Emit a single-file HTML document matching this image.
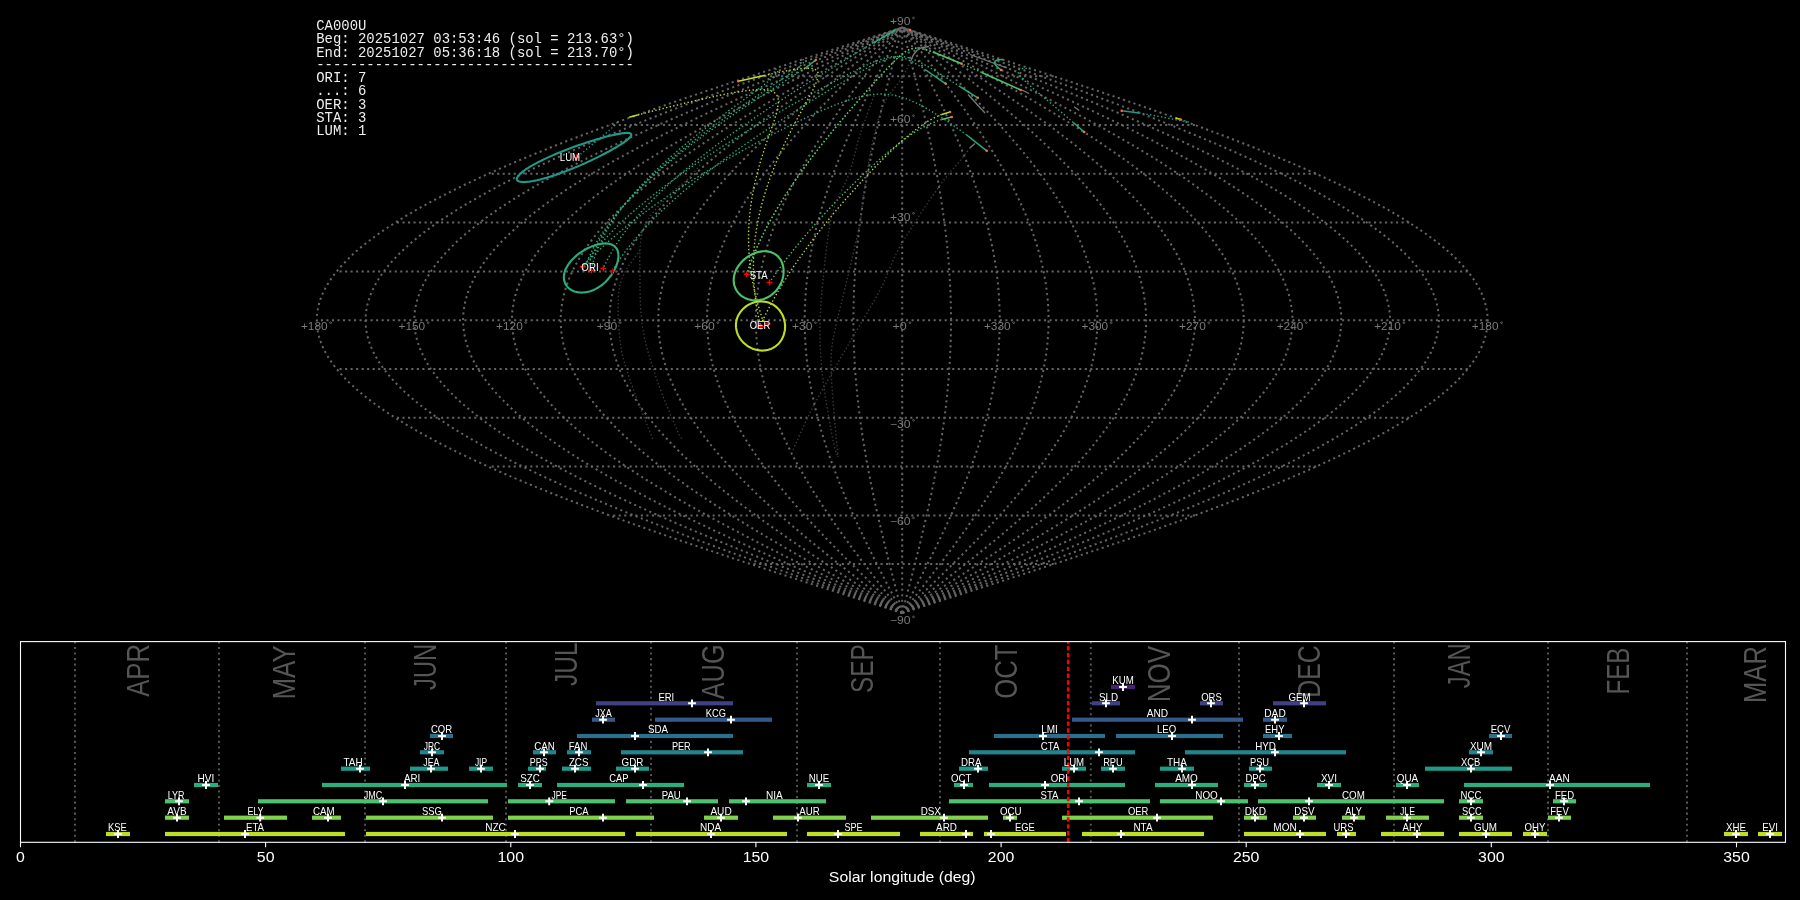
<!DOCTYPE html>
<html lang="en"><head><meta charset="utf-8"><title>CA000U radiants</title>
<style>
html,body{margin:0;padding:0;background:#000;}
body{width:1800px;height:900px;overflow:hidden;font-family:"Liberation Sans",sans-serif;}
svg{display:block;}
text{white-space:pre;}
</style></head><body>
<svg width="1800" height="900" viewBox="0 0 1800 900">
<rect width="1800" height="900" fill="#000"/>
<g style="opacity:0.999">
<g fill="none" stroke="#666666" stroke-width="2.00" stroke-dasharray="2.08 3.44">
<path d="M902.2 612.9 L912.4 609.7 L922.6 606.4 L932.8 603.2 L943 599.9 L953.2 596.7 L963.4 593.4 L973.5 590.2 L983.7 586.9 L993.8 583.7 L1003.9 580.4 L1013.9 577.1 L1023.9 573.9 L1033.9 570.6 L1043.8 567.4 L1053.7 564.1 L1063.6 560.9 L1073.4 557.6 L1083.1 554.4 L1092.8 551.1 L1102.4 547.9 L1112 544.6 L1121.5 541.4 L1131 538.1 L1140.3 534.9 L1149.6 531.6 L1158.8 528.4 L1168 525.1 L1177.1 521.9 L1186 518.6 L1194.9 515.4 L1203.7 512.1 L1212.4 508.8 L1221.1 505.6 L1229.6 502.3 L1238 499.1 L1246.3 495.8 L1254.5 492.6 L1262.6 489.3 L1270.6 486.1 L1278.5 482.8 L1286.3 479.6 L1293.9 476.3 L1301.5 473.1 L1308.9 469.8 L1316.2 466.6 L1323.3 463.3 L1330.4 460.1 L1337.3 456.8 L1344 453.6 L1350.7 450.3 L1357.2 447 L1363.5 443.8 L1369.8 440.5 L1375.8 437.3 L1381.8 434 L1387.6 430.8 L1393.2 427.5 L1398.7 424.3 L1404 421 L1409.2 417.8 L1414.2 414.5 L1419.1 411.3 L1423.8 408 L1428.4 404.8 L1432.8 401.5 L1437 398.3 L1441.1 395 L1445 391.8 L1448.8 388.5 L1452.3 385.2 L1455.8 382 L1459 378.7 L1462.1 375.5 L1465 372.2 L1467.7 369 L1470.3 365.7 L1472.6 362.5 L1474.9 359.2 L1476.9 356 L1478.8 352.7 L1480.4 349.5 L1482 346.2 L1483.3 343 L1484.4 339.7 L1485.4 336.5 L1486.2 333.2 L1486.8 330 L1487.3 326.7 L1487.6 323.5 L1487.7 320.2 L1487.6 316.9 L1487.3 313.7 L1486.8 310.4 L1486.2 307.2 L1485.4 303.9 L1484.4 300.7 L1483.3 297.4 L1482 294.2 L1480.4 290.9 L1478.8 287.7 L1476.9 284.4 L1474.9 281.2 L1472.6 277.9 L1470.3 274.7 L1467.7 271.4 L1465 268.2 L1462.1 264.9 L1459 261.7 L1455.8 258.4 L1452.3 255.1 L1448.8 251.9 L1445 248.6 L1441.1 245.4 L1437 242.1 L1432.8 238.9 L1428.4 235.6 L1423.8 232.4 L1419.1 229.1 L1414.2 225.9 L1409.2 222.6 L1404 219.4 L1398.7 216.1 L1393.2 212.9 L1387.6 209.6 L1381.8 206.4 L1375.8 203.1 L1369.8 199.9 L1363.5 196.6 L1357.2 193.4 L1350.7 190.1 L1344 186.8 L1337.3 183.6 L1330.4 180.3 L1323.3 177.1 L1316.2 173.8 L1308.9 170.6 L1301.5 167.3 L1293.9 164.1 L1286.3 160.8 L1278.5 157.6 L1270.6 154.3 L1262.6 151.1 L1254.5 147.8 L1246.3 144.6 L1238 141.3 L1229.6 138.1 L1221.1 134.8 L1212.4 131.6 L1203.7 128.3 L1194.9 125 L1186 121.8 L1177.1 118.5 L1168 115.3 L1158.8 112 L1149.6 108.8 L1140.3 105.5 L1131 102.3 L1121.5 99 L1112 95.8 L1102.4 92.5 L1092.8 89.3 L1083.1 86 L1073.4 82.8 L1063.6 79.5 L1053.7 76.3 L1043.8 73 L1033.9 69.8 L1023.9 66.5 L1013.9 63.3 L1003.9 60 L993.8 56.7 L983.7 53.5 L973.5 50.2 L963.4 47 L953.2 43.7 L943 40.5 L932.8 37.2 L922.6 34 L912.4 30.7 L902.2 27.5"/>
<path d="M902.2 612.9 L911.6 609.7 L920.9 606.4 L930.3 603.2 L939.6 599.9 L949 596.7 L958.3 593.4 L967.6 590.2 L976.9 586.9 L986.2 583.7 L995.4 580.4 L1004.6 577.1 L1013.8 573.9 L1022.9 570.6 L1032 567.4 L1041.1 564.1 L1050.1 560.9 L1059.1 557.6 L1068 554.4 L1076.9 551.1 L1085.7 547.9 L1094.5 544.6 L1103.2 541.4 L1111.9 538.1 L1120.5 534.9 L1129 531.6 L1137.5 528.4 L1145.8 525.1 L1154.1 521.9 L1162.4 518.6 L1170.5 515.4 L1178.6 512.1 L1186.6 508.8 L1194.5 505.6 L1202.3 502.3 L1210 499.1 L1217.6 495.8 L1225.2 492.6 L1232.6 489.3 L1239.9 486.1 L1247.2 482.8 L1254.3 479.6 L1261.3 476.3 L1268.2 473.1 L1275 469.8 L1281.7 466.6 L1288.2 463.3 L1294.7 460.1 L1301 456.8 L1307.2 453.6 L1313.3 450.3 L1319.3 447 L1325.1 443.8 L1330.8 440.5 L1336.4 437.3 L1341.8 434 L1347.1 430.8 L1352.3 427.5 L1357.3 424.3 L1362.2 421 L1367 417.8 L1371.6 414.5 L1376 411.3 L1380.4 408 L1384.5 404.8 L1388.6 401.5 L1392.5 398.3 L1396.2 395 L1399.8 391.8 L1403.2 388.5 L1406.5 385.2 L1409.6 382 L1412.6 378.7 L1415.4 375.5 L1418.1 372.2 L1420.6 369 L1422.9 365.7 L1425.1 362.5 L1427.1 359.2 L1429 356 L1430.7 352.7 L1432.3 349.5 L1433.6 346.2 L1434.9 343 L1435.9 339.7 L1436.8 336.5 L1437.6 333.2 L1438.1 330 L1438.5 326.7 L1438.8 323.5 L1438.9 320.2 L1438.8 316.9 L1438.5 313.7 L1438.1 310.4 L1437.6 307.2 L1436.8 303.9 L1435.9 300.7 L1434.9 297.4 L1433.6 294.2 L1432.3 290.9 L1430.7 287.7 L1429 284.4 L1427.1 281.2 L1425.1 277.9 L1422.9 274.7 L1420.6 271.4 L1418.1 268.2 L1415.4 264.9 L1412.6 261.7 L1409.6 258.4 L1406.5 255.1 L1403.2 251.9 L1399.8 248.6 L1396.2 245.4 L1392.5 242.1 L1388.6 238.9 L1384.5 235.6 L1380.4 232.4 L1376 229.1 L1371.6 225.9 L1367 222.6 L1362.2 219.4 L1357.3 216.1 L1352.3 212.9 L1347.1 209.6 L1341.8 206.4 L1336.4 203.1 L1330.8 199.9 L1325.1 196.6 L1319.3 193.4 L1313.3 190.1 L1307.2 186.8 L1301 183.6 L1294.7 180.3 L1288.2 177.1 L1281.7 173.8 L1275 170.6 L1268.2 167.3 L1261.3 164.1 L1254.3 160.8 L1247.2 157.6 L1239.9 154.3 L1232.6 151.1 L1225.2 147.8 L1217.6 144.6 L1210 141.3 L1202.3 138.1 L1194.5 134.8 L1186.6 131.6 L1178.6 128.3 L1170.5 125 L1162.4 121.8 L1154.1 118.5 L1145.8 115.3 L1137.5 112 L1129 108.8 L1120.5 105.5 L1111.9 102.3 L1103.2 99 L1094.5 95.8 L1085.7 92.5 L1076.9 89.3 L1068 86 L1059.1 82.8 L1050.1 79.5 L1041.1 76.3 L1032 73 L1022.9 69.8 L1013.8 66.5 L1004.6 63.3 L995.4 60 L986.2 56.7 L976.9 53.5 L967.6 50.2 L958.3 47 L949 43.7 L939.6 40.5 L930.3 37.2 L920.9 34 L911.6 30.7 L902.2 27.5"/>
<path d="M902.2 612.9 L910.7 609.7 L919.2 606.4 L927.7 603.2 L936.2 599.9 L944.7 596.7 L953.2 593.4 L961.7 590.2 L970.1 586.9 L978.5 583.7 L986.9 580.4 L995.3 577.1 L1003.6 573.9 L1011.9 570.6 L1020.2 567.4 L1028.5 564.1 L1036.7 560.9 L1044.8 557.6 L1053 554.4 L1061 551.1 L1069.1 547.9 L1077 544.6 L1085 541.4 L1092.8 538.1 L1100.6 534.9 L1108.4 531.6 L1116.1 528.4 L1123.7 525.1 L1131.2 521.9 L1138.7 518.6 L1146.1 515.4 L1153.5 512.1 L1160.7 508.8 L1167.9 505.6 L1175 502.3 L1182 499.1 L1189 495.8 L1195.8 492.6 L1202.6 489.3 L1209.2 486.1 L1215.8 482.8 L1222.3 479.6 L1228.7 476.3 L1234.9 473.1 L1241.1 469.8 L1247.2 466.6 L1253.1 463.3 L1259 460.1 L1264.8 456.8 L1270.4 453.6 L1275.9 450.3 L1281.4 447 L1286.7 443.8 L1291.8 440.5 L1296.9 437.3 L1301.8 434 L1306.7 430.8 L1311.4 427.5 L1315.9 424.3 L1320.4 421 L1324.7 417.8 L1328.9 414.5 L1333 411.3 L1336.9 408 L1340.7 404.8 L1344.4 401.5 L1347.9 398.3 L1351.3 395 L1354.5 391.8 L1357.7 388.5 L1360.7 385.2 L1363.5 382 L1366.2 378.7 L1368.8 375.5 L1371.2 372.2 L1373.5 369 L1375.6 365.7 L1377.6 362.5 L1379.4 359.2 L1381.1 356 L1382.7 352.7 L1384.1 349.5 L1385.3 346.2 L1386.4 343 L1387.4 339.7 L1388.2 336.5 L1388.9 333.2 L1389.4 330 L1389.8 326.7 L1390 323.5 L1390.1 320.2 L1390 316.9 L1389.8 313.7 L1389.4 310.4 L1388.9 307.2 L1388.2 303.9 L1387.4 300.7 L1386.4 297.4 L1385.3 294.2 L1384.1 290.9 L1382.7 287.7 L1381.1 284.4 L1379.4 281.2 L1377.6 277.9 L1375.6 274.7 L1373.5 271.4 L1371.2 268.2 L1368.8 264.9 L1366.2 261.7 L1363.5 258.4 L1360.7 255.1 L1357.7 251.9 L1354.5 248.6 L1351.3 245.4 L1347.9 242.1 L1344.4 238.9 L1340.7 235.6 L1336.9 232.4 L1333 229.1 L1328.9 225.9 L1324.7 222.6 L1320.4 219.4 L1315.9 216.1 L1311.4 212.9 L1306.7 209.6 L1301.8 206.4 L1296.9 203.1 L1291.8 199.9 L1286.7 196.6 L1281.4 193.4 L1275.9 190.1 L1270.4 186.8 L1264.8 183.6 L1259 180.3 L1253.1 177.1 L1247.2 173.8 L1241.1 170.6 L1234.9 167.3 L1228.7 164.1 L1222.3 160.8 L1215.8 157.6 L1209.2 154.3 L1202.6 151.1 L1195.8 147.8 L1189 144.6 L1182 141.3 L1175 138.1 L1167.9 134.8 L1160.7 131.6 L1153.5 128.3 L1146.1 125 L1138.7 121.8 L1131.2 118.5 L1123.7 115.3 L1116.1 112 L1108.4 108.8 L1100.6 105.5 L1092.8 102.3 L1085 99 L1077 95.8 L1069.1 92.5 L1061 89.3 L1053 86 L1044.8 82.8 L1036.7 79.5 L1028.5 76.3 L1020.2 73 L1011.9 69.8 L1003.6 66.5 L995.3 63.3 L986.9 60 L978.5 56.7 L970.1 53.5 L961.7 50.2 L953.2 47 L944.7 43.7 L936.2 40.5 L927.7 37.2 L919.2 34 L910.7 30.7 L902.2 27.5"/>
<path d="M902.2 612.9 L909.9 609.7 L917.5 606.4 L925.2 603.2 L932.8 599.9 L940.5 596.7 L948.1 593.4 L955.7 590.2 L963.3 586.9 L970.9 583.7 L978.4 580.4 L986 577.1 L993.5 573.9 L1001 570.6 L1008.4 567.4 L1015.8 564.1 L1023.2 560.9 L1030.6 557.6 L1037.9 554.4 L1045.2 551.1 L1052.4 547.9 L1059.6 544.6 L1066.7 541.4 L1073.8 538.1 L1080.8 534.9 L1087.8 531.6 L1094.7 528.4 L1101.5 525.1 L1108.3 521.9 L1115.1 518.6 L1121.7 515.4 L1128.3 512.1 L1134.9 508.8 L1141.3 505.6 L1147.7 502.3 L1154.1 499.1 L1160.3 495.8 L1166.4 492.6 L1172.5 489.3 L1178.5 486.1 L1184.4 482.8 L1190.3 479.6 L1196 476.3 L1201.7 473.1 L1207.2 469.8 L1212.7 466.6 L1218.1 463.3 L1223.3 460.1 L1228.5 456.8 L1233.6 453.6 L1238.6 450.3 L1243.4 447 L1248.2 443.8 L1252.9 440.5 L1257.4 437.3 L1261.9 434 L1266.2 430.8 L1270.4 427.5 L1274.6 424.3 L1278.6 421 L1282.5 417.8 L1286.2 414.5 L1289.9 411.3 L1293.4 408 L1296.8 404.8 L1300.1 401.5 L1303.3 398.3 L1306.4 395 L1309.3 391.8 L1312.1 388.5 L1314.8 385.2 L1317.4 382 L1319.8 378.7 L1322.1 375.5 L1324.3 372.2 L1326.3 369 L1328.2 365.7 L1330 362.5 L1331.7 359.2 L1333.2 356 L1334.6 352.7 L1335.9 349.5 L1337 346.2 L1338 343 L1338.9 339.7 L1339.6 336.5 L1340.2 333.2 L1340.7 330 L1341 326.7 L1341.2 323.5 L1341.3 320.2 L1341.2 316.9 L1341 313.7 L1340.7 310.4 L1340.2 307.2 L1339.6 303.9 L1338.9 300.7 L1338 297.4 L1337 294.2 L1335.9 290.9 L1334.6 287.7 L1333.2 284.4 L1331.7 281.2 L1330 277.9 L1328.2 274.7 L1326.3 271.4 L1324.3 268.2 L1322.1 264.9 L1319.8 261.7 L1317.4 258.4 L1314.8 255.1 L1312.1 251.9 L1309.3 248.6 L1306.4 245.4 L1303.3 242.1 L1300.1 238.9 L1296.8 235.6 L1293.4 232.4 L1289.9 229.1 L1286.2 225.9 L1282.5 222.6 L1278.6 219.4 L1274.6 216.1 L1270.4 212.9 L1266.2 209.6 L1261.9 206.4 L1257.4 203.1 L1252.9 199.9 L1248.2 196.6 L1243.4 193.4 L1238.6 190.1 L1233.6 186.8 L1228.5 183.6 L1223.3 180.3 L1218.1 177.1 L1212.7 173.8 L1207.2 170.6 L1201.7 167.3 L1196 164.1 L1190.3 160.8 L1184.4 157.6 L1178.5 154.3 L1172.5 151.1 L1166.4 147.8 L1160.3 144.6 L1154.1 141.3 L1147.7 138.1 L1141.3 134.8 L1134.9 131.6 L1128.3 128.3 L1121.7 125 L1115.1 121.8 L1108.3 118.5 L1101.5 115.3 L1094.7 112 L1087.8 108.8 L1080.8 105.5 L1073.8 102.3 L1066.7 99 L1059.6 95.8 L1052.4 92.5 L1045.2 89.3 L1037.9 86 L1030.6 82.8 L1023.2 79.5 L1015.8 76.3 L1008.4 73 L1001 69.8 L993.5 66.5 L986 63.3 L978.4 60 L970.9 56.7 L963.3 53.5 L955.7 50.2 L948.1 47 L940.5 43.7 L932.8 40.5 L925.2 37.2 L917.5 34 L909.9 30.7 L902.2 27.5"/>
<path d="M902.2 612.9 L909 609.7 L915.8 606.4 L922.6 603.2 L929.4 599.9 L936.2 596.7 L943 593.4 L949.8 590.2 L956.5 586.9 L963.3 583.7 L970 580.4 L976.7 577.1 L983.3 573.9 L990 570.6 L996.6 567.4 L1003.2 564.1 L1009.8 560.9 L1016.3 557.6 L1022.8 554.4 L1029.3 551.1 L1035.7 547.9 L1042.1 544.6 L1048.4 541.4 L1054.7 538.1 L1060.9 534.9 L1067.1 531.6 L1073.3 528.4 L1079.4 525.1 L1085.4 521.9 L1091.4 518.6 L1097.4 515.4 L1103.2 512.1 L1109 508.8 L1114.8 505.6 L1120.5 502.3 L1126.1 499.1 L1131.6 495.8 L1137.1 492.6 L1142.5 489.3 L1147.8 486.1 L1153.1 482.8 L1158.3 479.6 L1163.4 476.3 L1168.4 473.1 L1173.3 469.8 L1178.2 466.6 L1183 463.3 L1187.6 460.1 L1192.2 456.8 L1196.8 453.6 L1201.2 450.3 L1205.5 447 L1209.8 443.8 L1213.9 440.5 L1218 437.3 L1221.9 434 L1225.8 430.8 L1229.5 427.5 L1233.2 424.3 L1236.8 421 L1240.2 417.8 L1243.6 414.5 L1246.8 411.3 L1250 408 L1253 404.8 L1255.9 401.5 L1258.8 398.3 L1261.5 395 L1264.1 391.8 L1266.6 388.5 L1269 385.2 L1271.2 382 L1273.4 378.7 L1275.4 375.5 L1277.4 372.2 L1279.2 369 L1280.9 365.7 L1282.5 362.5 L1284 359.2 L1285.3 356 L1286.6 352.7 L1287.7 349.5 L1288.7 346.2 L1289.6 343 L1290.4 339.7 L1291 336.5 L1291.5 333.2 L1292 330 L1292.3 326.7 L1292.4 323.5 L1292.5 320.2 L1292.4 316.9 L1292.3 313.7 L1292 310.4 L1291.5 307.2 L1291 303.9 L1290.4 300.7 L1289.6 297.4 L1288.7 294.2 L1287.7 290.9 L1286.6 287.7 L1285.3 284.4 L1284 281.2 L1282.5 277.9 L1280.9 274.7 L1279.2 271.4 L1277.4 268.2 L1275.4 264.9 L1273.4 261.7 L1271.2 258.4 L1269 255.1 L1266.6 251.9 L1264.1 248.6 L1261.5 245.4 L1258.8 242.1 L1255.9 238.9 L1253 235.6 L1250 232.4 L1246.8 229.1 L1243.6 225.9 L1240.2 222.6 L1236.8 219.4 L1233.2 216.1 L1229.5 212.9 L1225.8 209.6 L1221.9 206.4 L1218 203.1 L1213.9 199.9 L1209.8 196.6 L1205.5 193.4 L1201.2 190.1 L1196.8 186.8 L1192.2 183.6 L1187.6 180.3 L1183 177.1 L1178.2 173.8 L1173.3 170.6 L1168.4 167.3 L1163.4 164.1 L1158.3 160.8 L1153.1 157.6 L1147.8 154.3 L1142.5 151.1 L1137.1 147.8 L1131.6 144.6 L1126.1 141.3 L1120.5 138.1 L1114.8 134.8 L1109 131.6 L1103.2 128.3 L1097.4 125 L1091.4 121.8 L1085.4 118.5 L1079.4 115.3 L1073.3 112 L1067.1 108.8 L1060.9 105.5 L1054.7 102.3 L1048.4 99 L1042.1 95.8 L1035.7 92.5 L1029.3 89.3 L1022.8 86 L1016.3 82.8 L1009.8 79.5 L1003.2 76.3 L996.6 73 L990 69.8 L983.3 66.5 L976.7 63.3 L970 60 L963.3 56.7 L956.5 53.5 L949.8 50.2 L943 47 L936.2 43.7 L929.4 40.5 L922.6 37.2 L915.8 34 L909 30.7 L902.2 27.5"/>
<path d="M902.2 612.9 L908.2 609.7 L914.1 606.4 L920.1 603.2 L926 599.9 L932 596.7 L937.9 593.4 L943.8 590.2 L949.7 586.9 L955.6 583.7 L961.5 580.4 L967.4 577.1 L973.2 573.9 L979 570.6 L984.8 567.4 L990.6 564.1 L996.3 560.9 L1002 557.6 L1007.7 554.4 L1013.4 551.1 L1019 547.9 L1024.6 544.6 L1030.1 541.4 L1035.6 538.1 L1041.1 534.9 L1046.5 531.6 L1051.9 528.4 L1057.2 525.1 L1062.5 521.9 L1067.8 518.6 L1073 515.4 L1078.1 512.1 L1083.2 508.8 L1088.2 505.6 L1093.2 502.3 L1098.1 499.1 L1102.9 495.8 L1107.7 492.6 L1112.5 489.3 L1117.1 486.1 L1121.7 482.8 L1126.3 479.6 L1130.7 476.3 L1135.1 473.1 L1139.4 469.8 L1143.7 466.6 L1147.9 463.3 L1152 460.1 L1156 456.8 L1159.9 453.6 L1163.8 450.3 L1167.6 447 L1171.3 443.8 L1174.9 440.5 L1178.5 437.3 L1182 434 L1185.3 430.8 L1188.6 427.5 L1191.8 424.3 L1194.9 421 L1198 417.8 L1200.9 414.5 L1203.7 411.3 L1206.5 408 L1209.1 404.8 L1211.7 401.5 L1214.2 398.3 L1216.6 395 L1218.8 391.8 L1221 388.5 L1223.1 385.2 L1225.1 382 L1227 378.7 L1228.8 375.5 L1230.5 372.2 L1232.1 369 L1233.6 365.7 L1235 362.5 L1236.2 359.2 L1237.4 356 L1238.5 352.7 L1239.5 349.5 L1240.4 346.2 L1241.2 343 L1241.8 339.7 L1242.4 336.5 L1242.9 333.2 L1243.2 330 L1243.5 326.7 L1243.7 323.5 L1243.7 320.2 L1243.7 316.9 L1243.5 313.7 L1243.2 310.4 L1242.9 307.2 L1242.4 303.9 L1241.8 300.7 L1241.2 297.4 L1240.4 294.2 L1239.5 290.9 L1238.5 287.7 L1237.4 284.4 L1236.2 281.2 L1235 277.9 L1233.6 274.7 L1232.1 271.4 L1230.5 268.2 L1228.8 264.9 L1227 261.7 L1225.1 258.4 L1223.1 255.1 L1221 251.9 L1218.8 248.6 L1216.6 245.4 L1214.2 242.1 L1211.7 238.9 L1209.1 235.6 L1206.5 232.4 L1203.7 229.1 L1200.9 225.9 L1198 222.6 L1194.9 219.4 L1191.8 216.1 L1188.6 212.9 L1185.3 209.6 L1182 206.4 L1178.5 203.1 L1174.9 199.9 L1171.3 196.6 L1167.6 193.4 L1163.8 190.1 L1159.9 186.8 L1156 183.6 L1152 180.3 L1147.9 177.1 L1143.7 173.8 L1139.4 170.6 L1135.1 167.3 L1130.7 164.1 L1126.3 160.8 L1121.7 157.6 L1117.1 154.3 L1112.5 151.1 L1107.7 147.8 L1102.9 144.6 L1098.1 141.3 L1093.2 138.1 L1088.2 134.8 L1083.2 131.6 L1078.1 128.3 L1073 125 L1067.8 121.8 L1062.5 118.5 L1057.2 115.3 L1051.9 112 L1046.5 108.8 L1041.1 105.5 L1035.6 102.3 L1030.1 99 L1024.6 95.8 L1019 92.5 L1013.4 89.3 L1007.7 86 L1002 82.8 L996.3 79.5 L990.6 76.3 L984.8 73 L979 69.8 L973.2 66.5 L967.4 63.3 L961.5 60 L955.6 56.7 L949.7 53.5 L943.8 50.2 L937.9 47 L932 43.7 L926 40.5 L920.1 37.2 L914.1 34 L908.2 30.7 L902.2 27.5"/>
<path d="M902.2 612.9 L907.3 609.7 L912.4 606.4 L917.5 603.2 L922.6 599.9 L927.7 596.7 L932.8 593.4 L937.9 590.2 L942.9 586.9 L948 583.7 L953 580.4 L958.1 577.1 L963.1 573.9 L968 570.6 L973 567.4 L978 564.1 L982.9 560.9 L987.8 557.6 L992.7 554.4 L997.5 551.1 L1002.3 547.9 L1007.1 544.6 L1011.9 541.4 L1016.6 538.1 L1021.3 534.9 L1025.9 531.6 L1030.5 528.4 L1035.1 525.1 L1039.6 521.9 L1044.1 518.6 L1048.6 515.4 L1053 512.1 L1057.3 508.8 L1061.6 505.6 L1065.9 502.3 L1070.1 499.1 L1074.3 495.8 L1078.4 492.6 L1082.4 489.3 L1086.4 486.1 L1090.4 482.8 L1094.2 479.6 L1098.1 476.3 L1101.8 473.1 L1105.5 469.8 L1109.2 466.6 L1112.8 463.3 L1116.3 460.1 L1119.7 456.8 L1123.1 453.6 L1126.4 450.3 L1129.7 447 L1132.9 443.8 L1136 440.5 L1139 437.3 L1142 434 L1144.9 430.8 L1147.7 427.5 L1150.4 424.3 L1153.1 421 L1155.7 417.8 L1158.2 414.5 L1160.7 411.3 L1163 408 L1165.3 404.8 L1167.5 401.5 L1169.6 398.3 L1171.7 395 L1173.6 391.8 L1175.5 388.5 L1177.3 385.2 L1179 382 L1180.6 378.7 L1182.1 375.5 L1183.6 372.2 L1185 369 L1186.2 365.7 L1187.4 362.5 L1188.5 359.2 L1189.5 356 L1190.5 352.7 L1191.3 349.5 L1192.1 346.2 L1192.7 343 L1193.3 339.7 L1193.8 336.5 L1194.2 333.2 L1194.5 330 L1194.7 326.7 L1194.9 323.5 L1194.9 320.2 L1194.9 316.9 L1194.7 313.7 L1194.5 310.4 L1194.2 307.2 L1193.8 303.9 L1193.3 300.7 L1192.7 297.4 L1192.1 294.2 L1191.3 290.9 L1190.5 287.7 L1189.5 284.4 L1188.5 281.2 L1187.4 277.9 L1186.2 274.7 L1185 271.4 L1183.6 268.2 L1182.1 264.9 L1180.6 261.7 L1179 258.4 L1177.3 255.1 L1175.5 251.9 L1173.6 248.6 L1171.7 245.4 L1169.6 242.1 L1167.5 238.9 L1165.3 235.6 L1163 232.4 L1160.7 229.1 L1158.2 225.9 L1155.7 222.6 L1153.1 219.4 L1150.4 216.1 L1147.7 212.9 L1144.9 209.6 L1142 206.4 L1139 203.1 L1136 199.9 L1132.9 196.6 L1129.7 193.4 L1126.4 190.1 L1123.1 186.8 L1119.7 183.6 L1116.3 180.3 L1112.8 177.1 L1109.2 173.8 L1105.5 170.6 L1101.8 167.3 L1098.1 164.1 L1094.2 160.8 L1090.4 157.6 L1086.4 154.3 L1082.4 151.1 L1078.4 147.8 L1074.3 144.6 L1070.1 141.3 L1065.9 138.1 L1061.6 134.8 L1057.3 131.6 L1053 128.3 L1048.6 125 L1044.1 121.8 L1039.6 118.5 L1035.1 115.3 L1030.5 112 L1025.9 108.8 L1021.3 105.5 L1016.6 102.3 L1011.9 99 L1007.1 95.8 L1002.3 92.5 L997.5 89.3 L992.7 86 L987.8 82.8 L982.9 79.5 L978 76.3 L973 73 L968 69.8 L963.1 66.5 L958.1 63.3 L953 60 L948 56.7 L942.9 53.5 L937.9 50.2 L932.8 47 L927.7 43.7 L922.6 40.5 L917.5 37.2 L912.4 34 L907.3 30.7 L902.2 27.5"/>
<path d="M902.2 612.9 L906.5 609.7 L910.7 606.4 L915 603.2 L919.2 599.9 L923.5 596.7 L927.7 593.4 L931.9 590.2 L936.1 586.9 L940.4 583.7 L944.6 580.4 L948.7 577.1 L952.9 573.9 L957.1 570.6 L961.2 567.4 L965.3 564.1 L969.4 560.9 L973.5 557.6 L977.6 554.4 L981.6 551.1 L985.6 547.9 L989.6 544.6 L993.6 541.4 L997.5 538.1 L1001.4 534.9 L1005.3 531.6 L1009.1 528.4 L1012.9 525.1 L1016.7 521.9 L1020.5 518.6 L1024.2 515.4 L1027.8 512.1 L1031.5 508.8 L1035.1 505.6 L1038.6 502.3 L1042.1 499.1 L1045.6 495.8 L1049 492.6 L1052.4 489.3 L1055.7 486.1 L1059 482.8 L1062.2 479.6 L1065.4 476.3 L1068.6 473.1 L1071.7 469.8 L1074.7 466.6 L1077.7 463.3 L1080.6 460.1 L1083.5 456.8 L1086.3 453.6 L1089.1 450.3 L1091.8 447 L1094.4 443.8 L1097 440.5 L1099.5 437.3 L1102 434 L1104.4 430.8 L1106.8 427.5 L1109.1 424.3 L1111.3 421 L1113.5 417.8 L1115.6 414.5 L1117.6 411.3 L1119.5 408 L1121.4 404.8 L1123.3 401.5 L1125 398.3 L1126.7 395 L1128.4 391.8 L1129.9 388.5 L1131.4 385.2 L1132.8 382 L1134.2 378.7 L1135.5 375.5 L1136.7 372.2 L1137.8 369 L1138.9 365.7 L1139.9 362.5 L1140.8 359.2 L1141.7 356 L1142.4 352.7 L1143.1 349.5 L1143.8 346.2 L1144.3 343 L1144.8 339.7 L1145.2 336.5 L1145.5 333.2 L1145.8 330 L1146 326.7 L1146.1 323.5 L1146.1 320.2 L1146.1 316.9 L1146 313.7 L1145.8 310.4 L1145.5 307.2 L1145.2 303.9 L1144.8 300.7 L1144.3 297.4 L1143.8 294.2 L1143.1 290.9 L1142.4 287.7 L1141.7 284.4 L1140.8 281.2 L1139.9 277.9 L1138.9 274.7 L1137.8 271.4 L1136.7 268.2 L1135.5 264.9 L1134.2 261.7 L1132.8 258.4 L1131.4 255.1 L1129.9 251.9 L1128.4 248.6 L1126.7 245.4 L1125 242.1 L1123.3 238.9 L1121.4 235.6 L1119.5 232.4 L1117.6 229.1 L1115.6 225.9 L1113.5 222.6 L1111.3 219.4 L1109.1 216.1 L1106.8 212.9 L1104.4 209.6 L1102 206.4 L1099.5 203.1 L1097 199.9 L1094.4 196.6 L1091.8 193.4 L1089.1 190.1 L1086.3 186.8 L1083.5 183.6 L1080.6 180.3 L1077.7 177.1 L1074.7 173.8 L1071.7 170.6 L1068.6 167.3 L1065.4 164.1 L1062.2 160.8 L1059 157.6 L1055.7 154.3 L1052.4 151.1 L1049 147.8 L1045.6 144.6 L1042.1 141.3 L1038.6 138.1 L1035.1 134.8 L1031.5 131.6 L1027.8 128.3 L1024.2 125 L1020.5 121.8 L1016.7 118.5 L1012.9 115.3 L1009.1 112 L1005.3 108.8 L1001.4 105.5 L997.5 102.3 L993.6 99 L989.6 95.8 L985.6 92.5 L981.6 89.3 L977.6 86 L973.5 82.8 L969.4 79.5 L965.3 76.3 L961.2 73 L957.1 69.8 L952.9 66.5 L948.7 63.3 L944.6 60 L940.4 56.7 L936.1 53.5 L931.9 50.2 L927.7 47 L923.5 43.7 L919.2 40.5 L915 37.2 L910.7 34 L906.5 30.7 L902.2 27.5"/>
<path d="M902.2 612.9 L905.6 609.7 L909 606.4 L912.4 603.2 L915.8 599.9 L919.2 596.7 L922.6 593.4 L926 590.2 L929.4 586.9 L932.7 583.7 L936.1 580.4 L939.4 577.1 L942.8 573.9 L946.1 570.6 L949.4 567.4 L952.7 564.1 L956 560.9 L959.3 557.6 L962.5 554.4 L965.7 551.1 L968.9 547.9 L972.1 544.6 L975.3 541.4 L978.5 538.1 L981.6 534.9 L984.7 531.6 L987.7 528.4 L990.8 525.1 L993.8 521.9 L996.8 518.6 L999.8 515.4 L1002.7 512.1 L1005.6 508.8 L1008.5 505.6 L1011.3 502.3 L1014.1 499.1 L1016.9 495.8 L1019.6 492.6 L1022.3 489.3 L1025 486.1 L1027.6 482.8 L1030.2 479.6 L1032.8 476.3 L1035.3 473.1 L1037.8 469.8 L1040.2 466.6 L1042.6 463.3 L1044.9 460.1 L1047.2 456.8 L1049.5 453.6 L1051.7 450.3 L1053.9 447 L1056 443.8 L1058.1 440.5 L1060.1 437.3 L1062.1 434 L1064 430.8 L1065.9 427.5 L1067.7 424.3 L1069.5 421 L1071.2 417.8 L1072.9 414.5 L1074.5 411.3 L1076.1 408 L1077.6 404.8 L1079.1 401.5 L1080.5 398.3 L1081.8 395 L1083.1 391.8 L1084.4 388.5 L1085.6 385.2 L1086.7 382 L1087.8 378.7 L1088.8 375.5 L1089.8 372.2 L1090.7 369 L1091.6 365.7 L1092.3 362.5 L1093.1 359.2 L1093.8 356 L1094.4 352.7 L1094.9 349.5 L1095.5 346.2 L1095.9 343 L1096.3 339.7 L1096.6 336.5 L1096.9 333.2 L1097.1 330 L1097.2 326.7 L1097.3 323.5 L1097.4 320.2 L1097.3 316.9 L1097.2 313.7 L1097.1 310.4 L1096.9 307.2 L1096.6 303.9 L1096.3 300.7 L1095.9 297.4 L1095.5 294.2 L1094.9 290.9 L1094.4 287.7 L1093.8 284.4 L1093.1 281.2 L1092.3 277.9 L1091.6 274.7 L1090.7 271.4 L1089.8 268.2 L1088.8 264.9 L1087.8 261.7 L1086.7 258.4 L1085.6 255.1 L1084.4 251.9 L1083.1 248.6 L1081.8 245.4 L1080.5 242.1 L1079.1 238.9 L1077.6 235.6 L1076.1 232.4 L1074.5 229.1 L1072.9 225.9 L1071.2 222.6 L1069.5 219.4 L1067.7 216.1 L1065.9 212.9 L1064 209.6 L1062.1 206.4 L1060.1 203.1 L1058.1 199.9 L1056 196.6 L1053.9 193.4 L1051.7 190.1 L1049.5 186.8 L1047.2 183.6 L1044.9 180.3 L1042.6 177.1 L1040.2 173.8 L1037.8 170.6 L1035.3 167.3 L1032.8 164.1 L1030.2 160.8 L1027.6 157.6 L1025 154.3 L1022.3 151.1 L1019.6 147.8 L1016.9 144.6 L1014.1 141.3 L1011.3 138.1 L1008.5 134.8 L1005.6 131.6 L1002.7 128.3 L999.8 125 L996.8 121.8 L993.8 118.5 L990.8 115.3 L987.7 112 L984.7 108.8 L981.6 105.5 L978.5 102.3 L975.3 99 L972.1 95.8 L968.9 92.5 L965.7 89.3 L962.5 86 L959.3 82.8 L956 79.5 L952.7 76.3 L949.4 73 L946.1 69.8 L942.8 66.5 L939.4 63.3 L936.1 60 L932.7 56.7 L929.4 53.5 L926 50.2 L922.6 47 L919.2 43.7 L915.8 40.5 L912.4 37.2 L909 34 L905.6 30.7 L902.2 27.5"/>
<path d="M902.2 612.9 L904.8 609.7 L907.3 606.4 L909.9 603.2 L912.4 599.9 L915 596.7 L917.5 593.4 L920 590.2 L922.6 586.9 L925.1 583.7 L927.6 580.4 L930.1 577.1 L932.6 573.9 L935.1 570.6 L937.6 567.4 L940.1 564.1 L942.5 560.9 L945 557.6 L947.4 554.4 L949.9 551.1 L952.3 547.9 L954.7 544.6 L957 541.4 L959.4 538.1 L961.7 534.9 L964.1 531.6 L966.4 528.4 L968.6 525.1 L970.9 521.9 L973.2 518.6 L975.4 515.4 L977.6 512.1 L979.8 508.8 L981.9 505.6 L984 502.3 L986.2 499.1 L988.2 495.8 L990.3 492.6 L992.3 489.3 L994.3 486.1 L996.3 482.8 L998.2 479.6 L1000.1 476.3 L1002 473.1 L1003.9 469.8 L1005.7 466.6 L1007.5 463.3 L1009.2 460.1 L1011 456.8 L1012.7 453.6 L1014.3 450.3 L1015.9 447 L1017.5 443.8 L1019.1 440.5 L1020.6 437.3 L1022.1 434 L1023.5 430.8 L1024.9 427.5 L1026.3 424.3 L1027.7 421 L1029 417.8 L1030.2 414.5 L1031.4 411.3 L1032.6 408 L1033.7 404.8 L1034.8 401.5 L1035.9 398.3 L1036.9 395 L1037.9 391.8 L1038.8 388.5 L1039.7 385.2 L1040.6 382 L1041.4 378.7 L1042.2 375.5 L1042.9 372.2 L1043.6 369 L1044.2 365.7 L1044.8 362.5 L1045.4 359.2 L1045.9 356 L1046.3 352.7 L1046.8 349.5 L1047.1 346.2 L1047.5 343 L1047.8 339.7 L1048 336.5 L1048.2 333.2 L1048.4 330 L1048.5 326.7 L1048.5 323.5 L1048.6 320.2 L1048.5 316.9 L1048.5 313.7 L1048.4 310.4 L1048.2 307.2 L1048 303.9 L1047.8 300.7 L1047.5 297.4 L1047.1 294.2 L1046.8 290.9 L1046.3 287.7 L1045.9 284.4 L1045.4 281.2 L1044.8 277.9 L1044.2 274.7 L1043.6 271.4 L1042.9 268.2 L1042.2 264.9 L1041.4 261.7 L1040.6 258.4 L1039.7 255.1 L1038.8 251.9 L1037.9 248.6 L1036.9 245.4 L1035.9 242.1 L1034.8 238.9 L1033.7 235.6 L1032.6 232.4 L1031.4 229.1 L1030.2 225.9 L1029 222.6 L1027.7 219.4 L1026.3 216.1 L1024.9 212.9 L1023.5 209.6 L1022.1 206.4 L1020.6 203.1 L1019.1 199.9 L1017.5 196.6 L1015.9 193.4 L1014.3 190.1 L1012.7 186.8 L1011 183.6 L1009.2 180.3 L1007.5 177.1 L1005.7 173.8 L1003.9 170.6 L1002 167.3 L1000.1 164.1 L998.2 160.8 L996.3 157.6 L994.3 154.3 L992.3 151.1 L990.3 147.8 L988.2 144.6 L986.2 141.3 L984 138.1 L981.9 134.8 L979.8 131.6 L977.6 128.3 L975.4 125 L973.2 121.8 L970.9 118.5 L968.6 115.3 L966.4 112 L964.1 108.8 L961.7 105.5 L959.4 102.3 L957 99 L954.7 95.8 L952.3 92.5 L949.9 89.3 L947.4 86 L945 82.8 L942.5 79.5 L940.1 76.3 L937.6 73 L935.1 69.8 L932.6 66.5 L930.1 63.3 L927.6 60 L925.1 56.7 L922.6 53.5 L920 50.2 L917.5 47 L915 43.7 L912.4 40.5 L909.9 37.2 L907.3 34 L904.8 30.7 L902.2 27.5"/>
<path d="M902.2 612.9 L903.9 609.7 L905.6 606.4 L907.3 603.2 L909 599.9 L910.7 596.7 L912.4 593.4 L914.1 590.2 L915.8 586.9 L917.5 583.7 L919.1 580.4 L920.8 577.1 L922.5 573.9 L924.1 570.6 L925.8 567.4 L927.5 564.1 L929.1 560.9 L930.7 557.6 L932.4 554.4 L934 551.1 L935.6 547.9 L937.2 544.6 L938.8 541.4 L940.3 538.1 L941.9 534.9 L943.4 531.6 L945 528.4 L946.5 525.1 L948 521.9 L949.5 518.6 L951 515.4 L952.5 512.1 L953.9 508.8 L955.3 505.6 L956.8 502.3 L958.2 499.1 L959.6 495.8 L960.9 492.6 L962.3 489.3 L963.6 486.1 L964.9 482.8 L966.2 479.6 L967.5 476.3 L968.7 473.1 L970 469.8 L971.2 466.6 L972.4 463.3 L973.6 460.1 L974.7 456.8 L975.8 453.6 L976.9 450.3 L978 447 L979.1 443.8 L980.1 440.5 L981.1 437.3 L982.1 434 L983.1 430.8 L984 427.5 L984.9 424.3 L985.8 421 L986.7 417.8 L987.5 414.5 L988.4 411.3 L989.1 408 L989.9 404.8 L990.6 401.5 L991.3 398.3 L992 395 L992.7 391.8 L993.3 388.5 L993.9 385.2 L994.5 382 L995 378.7 L995.5 375.5 L996 372.2 L996.5 369 L996.9 365.7 L997.3 362.5 L997.6 359.2 L998 356 L998.3 352.7 L998.6 349.5 L998.8 346.2 L999 343 L999.2 339.7 L999.4 336.5 L999.5 333.2 L999.6 330 L999.7 326.7 L999.8 323.5 L999.8 320.2 L999.8 316.9 L999.7 313.7 L999.6 310.4 L999.5 307.2 L999.4 303.9 L999.2 300.7 L999 297.4 L998.8 294.2 L998.6 290.9 L998.3 287.7 L998 284.4 L997.6 281.2 L997.3 277.9 L996.9 274.7 L996.5 271.4 L996 268.2 L995.5 264.9 L995 261.7 L994.5 258.4 L993.9 255.1 L993.3 251.9 L992.7 248.6 L992 245.4 L991.3 242.1 L990.6 238.9 L989.9 235.6 L989.1 232.4 L988.4 229.1 L987.5 225.9 L986.7 222.6 L985.8 219.4 L984.9 216.1 L984 212.9 L983.1 209.6 L982.1 206.4 L981.1 203.1 L980.1 199.9 L979.1 196.6 L978 193.4 L976.9 190.1 L975.8 186.8 L974.7 183.6 L973.6 180.3 L972.4 177.1 L971.2 173.8 L970 170.6 L968.7 167.3 L967.5 164.1 L966.2 160.8 L964.9 157.6 L963.6 154.3 L962.3 151.1 L960.9 147.8 L959.6 144.6 L958.2 141.3 L956.8 138.1 L955.3 134.8 L953.9 131.6 L952.5 128.3 L951 125 L949.5 121.8 L948 118.5 L946.5 115.3 L945 112 L943.4 108.8 L941.9 105.5 L940.3 102.3 L938.8 99 L937.2 95.8 L935.6 92.5 L934 89.3 L932.4 86 L930.7 82.8 L929.1 79.5 L927.5 76.3 L925.8 73 L924.1 69.8 L922.5 66.5 L920.8 63.3 L919.1 60 L917.5 56.7 L915.8 53.5 L914.1 50.2 L912.4 47 L910.7 43.7 L909 40.5 L907.3 37.2 L905.6 34 L903.9 30.7 L902.2 27.5"/>
<path d="M902.2 612.9 L903.1 609.7 L903.9 606.4 L904.8 603.2 L905.6 599.9 L906.5 596.7 L907.3 593.4 L908.1 590.2 L909 586.9 L909.8 583.7 L910.7 580.4 L911.5 577.1 L912.3 573.9 L913.2 570.6 L914 567.4 L914.8 564.1 L915.6 560.9 L916.5 557.6 L917.3 554.4 L918.1 551.1 L918.9 547.9 L919.7 544.6 L920.5 541.4 L921.3 538.1 L922 534.9 L922.8 531.6 L923.6 528.4 L924.3 525.1 L925.1 521.9 L925.9 518.6 L926.6 515.4 L927.3 512.1 L928.1 508.8 L928.8 505.6 L929.5 502.3 L930.2 499.1 L930.9 495.8 L931.6 492.6 L932.2 489.3 L932.9 486.1 L933.6 482.8 L934.2 479.6 L934.8 476.3 L935.5 473.1 L936.1 469.8 L936.7 466.6 L937.3 463.3 L937.9 460.1 L938.5 456.8 L939 453.6 L939.6 450.3 L940.1 447 L940.6 443.8 L941.2 440.5 L941.7 437.3 L942.2 434 L942.6 430.8 L943.1 427.5 L943.6 424.3 L944 421 L944.5 417.8 L944.9 414.5 L945.3 411.3 L945.7 408 L946 404.8 L946.4 401.5 L946.8 398.3 L947.1 395 L947.4 391.8 L947.7 388.5 L948 385.2 L948.3 382 L948.6 378.7 L948.9 375.5 L949.1 372.2 L949.3 369 L949.5 365.7 L949.7 362.5 L949.9 359.2 L950.1 356 L950.2 352.7 L950.4 349.5 L950.5 346.2 L950.6 343 L950.7 339.7 L950.8 336.5 L950.9 333.2 L950.9 330 L951 326.7 L951 323.5 L951 320.2 L951 316.9 L951 313.7 L950.9 310.4 L950.9 307.2 L950.8 303.9 L950.7 300.7 L950.6 297.4 L950.5 294.2 L950.4 290.9 L950.2 287.7 L950.1 284.4 L949.9 281.2 L949.7 277.9 L949.5 274.7 L949.3 271.4 L949.1 268.2 L948.9 264.9 L948.6 261.7 L948.3 258.4 L948 255.1 L947.7 251.9 L947.4 248.6 L947.1 245.4 L946.8 242.1 L946.4 238.9 L946 235.6 L945.7 232.4 L945.3 229.1 L944.9 225.9 L944.5 222.6 L944 219.4 L943.6 216.1 L943.1 212.9 L942.6 209.6 L942.2 206.4 L941.7 203.1 L941.2 199.9 L940.6 196.6 L940.1 193.4 L939.6 190.1 L939 186.8 L938.5 183.6 L937.9 180.3 L937.3 177.1 L936.7 173.8 L936.1 170.6 L935.5 167.3 L934.8 164.1 L934.2 160.8 L933.6 157.6 L932.9 154.3 L932.2 151.1 L931.6 147.8 L930.9 144.6 L930.2 141.3 L929.5 138.1 L928.8 134.8 L928.1 131.6 L927.3 128.3 L926.6 125 L925.9 121.8 L925.1 118.5 L924.3 115.3 L923.6 112 L922.8 108.8 L922 105.5 L921.3 102.3 L920.5 99 L919.7 95.8 L918.9 92.5 L918.1 89.3 L917.3 86 L916.5 82.8 L915.6 79.5 L914.8 76.3 L914 73 L913.2 69.8 L912.3 66.5 L911.5 63.3 L910.7 60 L909.8 56.7 L909 53.5 L908.1 50.2 L907.3 47 L906.5 43.7 L905.6 40.5 L904.8 37.2 L903.9 34 L903.1 30.7 L902.2 27.5"/>
<path d="M902.2 612.9 L902.2 609.7 L902.2 606.4 L902.2 603.2 L902.2 599.9 L902.2 596.7 L902.2 593.4 L902.2 590.2 L902.2 586.9 L902.2 583.7 L902.2 580.4 L902.2 577.1 L902.2 573.9 L902.2 570.6 L902.2 567.4 L902.2 564.1 L902.2 560.9 L902.2 557.6 L902.2 554.4 L902.2 551.1 L902.2 547.9 L902.2 544.6 L902.2 541.4 L902.2 538.1 L902.2 534.9 L902.2 531.6 L902.2 528.4 L902.2 525.1 L902.2 521.9 L902.2 518.6 L902.2 515.4 L902.2 512.1 L902.2 508.8 L902.2 505.6 L902.2 502.3 L902.2 499.1 L902.2 495.8 L902.2 492.6 L902.2 489.3 L902.2 486.1 L902.2 482.8 L902.2 479.6 L902.2 476.3 L902.2 473.1 L902.2 469.8 L902.2 466.6 L902.2 463.3 L902.2 460.1 L902.2 456.8 L902.2 453.6 L902.2 450.3 L902.2 447 L902.2 443.8 L902.2 440.5 L902.2 437.3 L902.2 434 L902.2 430.8 L902.2 427.5 L902.2 424.3 L902.2 421 L902.2 417.8 L902.2 414.5 L902.2 411.3 L902.2 408 L902.2 404.8 L902.2 401.5 L902.2 398.3 L902.2 395 L902.2 391.8 L902.2 388.5 L902.2 385.2 L902.2 382 L902.2 378.7 L902.2 375.5 L902.2 372.2 L902.2 369 L902.2 365.7 L902.2 362.5 L902.2 359.2 L902.2 356 L902.2 352.7 L902.2 349.5 L902.2 346.2 L902.2 343 L902.2 339.7 L902.2 336.5 L902.2 333.2 L902.2 330 L902.2 326.7 L902.2 323.5 L902.2 320.2 L902.2 316.9 L902.2 313.7 L902.2 310.4 L902.2 307.2 L902.2 303.9 L902.2 300.7 L902.2 297.4 L902.2 294.2 L902.2 290.9 L902.2 287.7 L902.2 284.4 L902.2 281.2 L902.2 277.9 L902.2 274.7 L902.2 271.4 L902.2 268.2 L902.2 264.9 L902.2 261.7 L902.2 258.4 L902.2 255.1 L902.2 251.9 L902.2 248.6 L902.2 245.4 L902.2 242.1 L902.2 238.9 L902.2 235.6 L902.2 232.4 L902.2 229.1 L902.2 225.9 L902.2 222.6 L902.2 219.4 L902.2 216.1 L902.2 212.9 L902.2 209.6 L902.2 206.4 L902.2 203.1 L902.2 199.9 L902.2 196.6 L902.2 193.4 L902.2 190.1 L902.2 186.8 L902.2 183.6 L902.2 180.3 L902.2 177.1 L902.2 173.8 L902.2 170.6 L902.2 167.3 L902.2 164.1 L902.2 160.8 L902.2 157.6 L902.2 154.3 L902.2 151.1 L902.2 147.8 L902.2 144.6 L902.2 141.3 L902.2 138.1 L902.2 134.8 L902.2 131.6 L902.2 128.3 L902.2 125 L902.2 121.8 L902.2 118.5 L902.2 115.3 L902.2 112 L902.2 108.8 L902.2 105.5 L902.2 102.3 L902.2 99 L902.2 95.8 L902.2 92.5 L902.2 89.3 L902.2 86 L902.2 82.8 L902.2 79.5 L902.2 76.3 L902.2 73 L902.2 69.8 L902.2 66.5 L902.2 63.3 L902.2 60 L902.2 56.7 L902.2 53.5 L902.2 50.2 L902.2 47 L902.2 43.7 L902.2 40.5 L902.2 37.2 L902.2 34 L902.2 30.7 L902.2 27.5"/>
<path d="M902.2 612.9 L901.3 609.7 L900.5 606.4 L899.6 603.2 L898.8 599.9 L897.9 596.7 L897.1 593.4 L896.3 590.2 L895.4 586.9 L894.6 583.7 L893.7 580.4 L892.9 577.1 L892.1 573.9 L891.2 570.6 L890.4 567.4 L889.6 564.1 L888.8 560.9 L887.9 557.6 L887.1 554.4 L886.3 551.1 L885.5 547.9 L884.7 544.6 L883.9 541.4 L883.1 538.1 L882.4 534.9 L881.6 531.6 L880.8 528.4 L880.1 525.1 L879.3 521.9 L878.5 518.6 L877.8 515.4 L877.1 512.1 L876.3 508.8 L875.6 505.6 L874.9 502.3 L874.2 499.1 L873.5 495.8 L872.8 492.6 L872.2 489.3 L871.5 486.1 L870.8 482.8 L870.2 479.6 L869.6 476.3 L868.9 473.1 L868.3 469.8 L867.7 466.6 L867.1 463.3 L866.5 460.1 L865.9 456.8 L865.4 453.6 L864.8 450.3 L864.3 447 L863.8 443.8 L863.2 440.5 L862.7 437.3 L862.2 434 L861.8 430.8 L861.3 427.5 L860.8 424.3 L860.4 421 L859.9 417.8 L859.5 414.5 L859.1 411.3 L858.7 408 L858.4 404.8 L858 401.5 L857.6 398.3 L857.3 395 L857 391.8 L856.7 388.5 L856.4 385.2 L856.1 382 L855.8 378.7 L855.5 375.5 L855.3 372.2 L855.1 369 L854.9 365.7 L854.7 362.5 L854.5 359.2 L854.3 356 L854.2 352.7 L854 349.5 L853.9 346.2 L853.8 343 L853.7 339.7 L853.6 336.5 L853.5 333.2 L853.5 330 L853.4 326.7 L853.4 323.5 L853.4 320.2 L853.4 316.9 L853.4 313.7 L853.5 310.4 L853.5 307.2 L853.6 303.9 L853.7 300.7 L853.8 297.4 L853.9 294.2 L854 290.9 L854.2 287.7 L854.3 284.4 L854.5 281.2 L854.7 277.9 L854.9 274.7 L855.1 271.4 L855.3 268.2 L855.5 264.9 L855.8 261.7 L856.1 258.4 L856.4 255.1 L856.7 251.9 L857 248.6 L857.3 245.4 L857.6 242.1 L858 238.9 L858.4 235.6 L858.7 232.4 L859.1 229.1 L859.5 225.9 L859.9 222.6 L860.4 219.4 L860.8 216.1 L861.3 212.9 L861.8 209.6 L862.2 206.4 L862.7 203.1 L863.2 199.9 L863.8 196.6 L864.3 193.4 L864.8 190.1 L865.4 186.8 L865.9 183.6 L866.5 180.3 L867.1 177.1 L867.7 173.8 L868.3 170.6 L868.9 167.3 L869.6 164.1 L870.2 160.8 L870.8 157.6 L871.5 154.3 L872.2 151.1 L872.8 147.8 L873.5 144.6 L874.2 141.3 L874.9 138.1 L875.6 134.8 L876.3 131.6 L877.1 128.3 L877.8 125 L878.5 121.8 L879.3 118.5 L880.1 115.3 L880.8 112 L881.6 108.8 L882.4 105.5 L883.1 102.3 L883.9 99 L884.7 95.8 L885.5 92.5 L886.3 89.3 L887.1 86 L887.9 82.8 L888.8 79.5 L889.6 76.3 L890.4 73 L891.2 69.8 L892.1 66.5 L892.9 63.3 L893.7 60 L894.6 56.7 L895.4 53.5 L896.3 50.2 L897.1 47 L897.9 43.7 L898.8 40.5 L899.6 37.2 L900.5 34 L901.3 30.7 L902.2 27.5"/>
<path d="M902.2 612.9 L900.5 609.7 L898.8 606.4 L897.1 603.2 L895.4 599.9 L893.7 596.7 L892 593.4 L890.3 590.2 L888.6 586.9 L886.9 583.7 L885.3 580.4 L883.6 577.1 L881.9 573.9 L880.3 570.6 L878.6 567.4 L876.9 564.1 L875.3 560.9 L873.7 557.6 L872 554.4 L870.4 551.1 L868.8 547.9 L867.2 544.6 L865.6 541.4 L864.1 538.1 L862.5 534.9 L861 531.6 L859.4 528.4 L857.9 525.1 L856.4 521.9 L854.9 518.6 L853.4 515.4 L851.9 512.1 L850.5 508.8 L849.1 505.6 L847.6 502.3 L846.2 499.1 L844.8 495.8 L843.5 492.6 L842.1 489.3 L840.8 486.1 L839.5 482.8 L838.2 479.6 L836.9 476.3 L835.7 473.1 L834.4 469.8 L833.2 466.6 L832 463.3 L830.8 460.1 L829.7 456.8 L828.6 453.6 L827.5 450.3 L826.4 447 L825.3 443.8 L824.3 440.5 L823.3 437.3 L822.3 434 L821.3 430.8 L820.4 427.5 L819.5 424.3 L818.6 421 L817.7 417.8 L816.9 414.5 L816 411.3 L815.3 408 L814.5 404.8 L813.8 401.5 L813.1 398.3 L812.4 395 L811.7 391.8 L811.1 388.5 L810.5 385.2 L809.9 382 L809.4 378.7 L808.9 375.5 L808.4 372.2 L807.9 369 L807.5 365.7 L807.1 362.5 L806.8 359.2 L806.4 356 L806.1 352.7 L805.8 349.5 L805.6 346.2 L805.4 343 L805.2 339.7 L805 336.5 L804.9 333.2 L804.8 330 L804.7 326.7 L804.6 323.5 L804.6 320.2 L804.6 316.9 L804.7 313.7 L804.8 310.4 L804.9 307.2 L805 303.9 L805.2 300.7 L805.4 297.4 L805.6 294.2 L805.8 290.9 L806.1 287.7 L806.4 284.4 L806.8 281.2 L807.1 277.9 L807.5 274.7 L807.9 271.4 L808.4 268.2 L808.9 264.9 L809.4 261.7 L809.9 258.4 L810.5 255.1 L811.1 251.9 L811.7 248.6 L812.4 245.4 L813.1 242.1 L813.8 238.9 L814.5 235.6 L815.3 232.4 L816 229.1 L816.9 225.9 L817.7 222.6 L818.6 219.4 L819.5 216.1 L820.4 212.9 L821.3 209.6 L822.3 206.4 L823.3 203.1 L824.3 199.9 L825.3 196.6 L826.4 193.4 L827.5 190.1 L828.6 186.8 L829.7 183.6 L830.8 180.3 L832 177.1 L833.2 173.8 L834.4 170.6 L835.7 167.3 L836.9 164.1 L838.2 160.8 L839.5 157.6 L840.8 154.3 L842.1 151.1 L843.5 147.8 L844.8 144.6 L846.2 141.3 L847.6 138.1 L849.1 134.8 L850.5 131.6 L851.9 128.3 L853.4 125 L854.9 121.8 L856.4 118.5 L857.9 115.3 L859.4 112 L861 108.8 L862.5 105.5 L864.1 102.3 L865.6 99 L867.2 95.8 L868.8 92.5 L870.4 89.3 L872 86 L873.7 82.8 L875.3 79.5 L876.9 76.3 L878.6 73 L880.3 69.8 L881.9 66.5 L883.6 63.3 L885.3 60 L886.9 56.7 L888.6 53.5 L890.3 50.2 L892 47 L893.7 43.7 L895.4 40.5 L897.1 37.2 L898.8 34 L900.5 30.7 L902.2 27.5"/>
<path d="M902.2 612.9 L899.6 609.7 L897.1 606.4 L894.5 603.2 L892 599.9 L889.4 596.7 L886.9 593.4 L884.4 590.2 L881.8 586.9 L879.3 583.7 L876.8 580.4 L874.3 577.1 L871.8 573.9 L869.3 570.6 L866.8 567.4 L864.3 564.1 L861.9 560.9 L859.4 557.6 L857 554.4 L854.5 551.1 L852.1 547.9 L849.7 544.6 L847.4 541.4 L845 538.1 L842.7 534.9 L840.3 531.6 L838 528.4 L835.8 525.1 L833.5 521.9 L831.2 518.6 L829 515.4 L826.8 512.1 L824.6 508.8 L822.5 505.6 L820.4 502.3 L818.2 499.1 L816.2 495.8 L814.1 492.6 L812.1 489.3 L810.1 486.1 L808.1 482.8 L806.2 479.6 L804.3 476.3 L802.4 473.1 L800.5 469.8 L798.7 466.6 L796.9 463.3 L795.2 460.1 L793.4 456.8 L791.7 453.6 L790.1 450.3 L788.5 447 L786.9 443.8 L785.3 440.5 L783.8 437.3 L782.3 434 L780.9 430.8 L779.5 427.5 L778.1 424.3 L776.7 421 L775.4 417.8 L774.2 414.5 L773 411.3 L771.8 408 L770.7 404.8 L769.6 401.5 L768.5 398.3 L767.5 395 L766.5 391.8 L765.6 388.5 L764.7 385.2 L763.8 382 L763 378.7 L762.2 375.5 L761.5 372.2 L760.8 369 L760.2 365.7 L759.6 362.5 L759 359.2 L758.5 356 L758.1 352.7 L757.6 349.5 L757.3 346.2 L756.9 343 L756.6 339.7 L756.4 336.5 L756.2 333.2 L756 330 L755.9 326.7 L755.9 323.5 L755.8 320.2 L755.9 316.9 L755.9 313.7 L756 310.4 L756.2 307.2 L756.4 303.9 L756.6 300.7 L756.9 297.4 L757.3 294.2 L757.6 290.9 L758.1 287.7 L758.5 284.4 L759 281.2 L759.6 277.9 L760.2 274.7 L760.8 271.4 L761.5 268.2 L762.2 264.9 L763 261.7 L763.8 258.4 L764.7 255.1 L765.6 251.9 L766.5 248.6 L767.5 245.4 L768.5 242.1 L769.6 238.9 L770.7 235.6 L771.8 232.4 L773 229.1 L774.2 225.9 L775.4 222.6 L776.7 219.4 L778.1 216.1 L779.5 212.9 L780.9 209.6 L782.3 206.4 L783.8 203.1 L785.3 199.9 L786.9 196.6 L788.5 193.4 L790.1 190.1 L791.7 186.8 L793.4 183.6 L795.2 180.3 L796.9 177.1 L798.7 173.8 L800.5 170.6 L802.4 167.3 L804.3 164.1 L806.2 160.8 L808.1 157.6 L810.1 154.3 L812.1 151.1 L814.1 147.8 L816.2 144.6 L818.2 141.3 L820.4 138.1 L822.5 134.8 L824.6 131.6 L826.8 128.3 L829 125 L831.2 121.8 L833.5 118.5 L835.8 115.3 L838 112 L840.3 108.8 L842.7 105.5 L845 102.3 L847.4 99 L849.7 95.8 L852.1 92.5 L854.5 89.3 L857 86 L859.4 82.8 L861.9 79.5 L864.3 76.3 L866.8 73 L869.3 69.8 L871.8 66.5 L874.3 63.3 L876.8 60 L879.3 56.7 L881.8 53.5 L884.4 50.2 L886.9 47 L889.4 43.7 L892 40.5 L894.5 37.2 L897.1 34 L899.6 30.7 L902.2 27.5"/>
<path d="M902.2 612.9 L898.8 609.7 L895.4 606.4 L892 603.2 L888.6 599.9 L885.2 596.7 L881.8 593.4 L878.4 590.2 L875 586.9 L871.7 583.7 L868.3 580.4 L865 577.1 L861.6 573.9 L858.3 570.6 L855 567.4 L851.7 564.1 L848.4 560.9 L845.1 557.6 L841.9 554.4 L838.7 551.1 L835.5 547.9 L832.3 544.6 L829.1 541.4 L825.9 538.1 L822.8 534.9 L819.7 531.6 L816.7 528.4 L813.6 525.1 L810.6 521.9 L807.6 518.6 L804.6 515.4 L801.7 512.1 L798.8 508.8 L795.9 505.6 L793.1 502.3 L790.3 499.1 L787.5 495.8 L784.8 492.6 L782.1 489.3 L779.4 486.1 L776.8 482.8 L774.2 479.6 L771.6 476.3 L769.1 473.1 L766.6 469.8 L764.2 466.6 L761.8 463.3 L759.5 460.1 L757.2 456.8 L754.9 453.6 L752.7 450.3 L750.5 447 L748.4 443.8 L746.3 440.5 L744.3 437.3 L742.3 434 L740.4 430.8 L738.5 427.5 L736.7 424.3 L734.9 421 L733.2 417.8 L731.5 414.5 L729.9 411.3 L728.3 408 L726.8 404.8 L725.3 401.5 L723.9 398.3 L722.6 395 L721.3 391.8 L720 388.5 L718.8 385.2 L717.7 382 L716.6 378.7 L715.6 375.5 L714.6 372.2 L713.7 369 L712.8 365.7 L712.1 362.5 L711.3 359.2 L710.6 356 L710 352.7 L709.5 349.5 L708.9 346.2 L708.5 343 L708.1 339.7 L707.8 336.5 L707.5 333.2 L707.3 330 L707.2 326.7 L707.1 323.5 L707.1 320.2 L707.1 316.9 L707.2 313.7 L707.3 310.4 L707.5 307.2 L707.8 303.9 L708.1 300.7 L708.5 297.4 L708.9 294.2 L709.5 290.9 L710 287.7 L710.6 284.4 L711.3 281.2 L712.1 277.9 L712.8 274.7 L713.7 271.4 L714.6 268.2 L715.6 264.9 L716.6 261.7 L717.7 258.4 L718.8 255.1 L720 251.9 L721.3 248.6 L722.6 245.4 L723.9 242.1 L725.3 238.9 L726.8 235.6 L728.3 232.4 L729.9 229.1 L731.5 225.9 L733.2 222.6 L734.9 219.4 L736.7 216.1 L738.5 212.9 L740.4 209.6 L742.3 206.4 L744.3 203.1 L746.3 199.9 L748.4 196.6 L750.5 193.4 L752.7 190.1 L754.9 186.8 L757.2 183.6 L759.5 180.3 L761.8 177.1 L764.2 173.8 L766.6 170.6 L769.1 167.3 L771.6 164.1 L774.2 160.8 L776.8 157.6 L779.4 154.3 L782.1 151.1 L784.8 147.8 L787.5 144.6 L790.3 141.3 L793.1 138.1 L795.9 134.8 L798.8 131.6 L801.7 128.3 L804.6 125 L807.6 121.8 L810.6 118.5 L813.6 115.3 L816.7 112 L819.7 108.8 L822.8 105.5 L825.9 102.3 L829.1 99 L832.3 95.8 L835.5 92.5 L838.7 89.3 L841.9 86 L845.1 82.8 L848.4 79.5 L851.7 76.3 L855 73 L858.3 69.8 L861.6 66.5 L865 63.3 L868.3 60 L871.7 56.7 L875 53.5 L878.4 50.2 L881.8 47 L885.2 43.7 L888.6 40.5 L892 37.2 L895.4 34 L898.8 30.7 L902.2 27.5"/>
<path d="M902.2 612.9 L897.9 609.7 L893.7 606.4 L889.4 603.2 L885.2 599.9 L880.9 596.7 L876.7 593.4 L872.5 590.2 L868.3 586.9 L864 583.7 L859.8 580.4 L855.7 577.1 L851.5 573.9 L847.3 570.6 L843.2 567.4 L839.1 564.1 L835 560.9 L830.9 557.6 L826.8 554.4 L822.8 551.1 L818.8 547.9 L814.8 544.6 L810.8 541.4 L806.9 538.1 L803 534.9 L799.1 531.6 L795.3 528.4 L791.5 525.1 L787.7 521.9 L783.9 518.6 L780.2 515.4 L776.6 512.1 L772.9 508.8 L769.3 505.6 L765.8 502.3 L762.3 499.1 L758.8 495.8 L755.4 492.6 L752 489.3 L748.7 486.1 L745.4 482.8 L742.2 479.6 L739 476.3 L735.8 473.1 L732.7 469.8 L729.7 466.6 L726.7 463.3 L723.8 460.1 L720.9 456.8 L718.1 453.6 L715.3 450.3 L712.6 447 L710 443.8 L707.4 440.5 L704.9 437.3 L702.4 434 L700 430.8 L697.6 427.5 L695.3 424.3 L693.1 421 L690.9 417.8 L688.8 414.5 L686.8 411.3 L684.9 408 L683 404.8 L681.1 401.5 L679.4 398.3 L677.7 395 L676 391.8 L674.5 388.5 L673 385.2 L671.6 382 L670.2 378.7 L668.9 375.5 L667.7 372.2 L666.6 369 L665.5 365.7 L664.5 362.5 L663.6 359.2 L662.7 356 L662 352.7 L661.3 349.5 L660.6 346.2 L660.1 343 L659.6 339.7 L659.2 336.5 L658.9 333.2 L658.6 330 L658.4 326.7 L658.3 323.5 L658.3 320.2 L658.3 316.9 L658.4 313.7 L658.6 310.4 L658.9 307.2 L659.2 303.9 L659.6 300.7 L660.1 297.4 L660.6 294.2 L661.3 290.9 L662 287.7 L662.7 284.4 L663.6 281.2 L664.5 277.9 L665.5 274.7 L666.6 271.4 L667.7 268.2 L668.9 264.9 L670.2 261.7 L671.6 258.4 L673 255.1 L674.5 251.9 L676 248.6 L677.7 245.4 L679.4 242.1 L681.1 238.9 L683 235.6 L684.9 232.4 L686.8 229.1 L688.8 225.9 L690.9 222.6 L693.1 219.4 L695.3 216.1 L697.6 212.9 L700 209.6 L702.4 206.4 L704.9 203.1 L707.4 199.9 L710 196.6 L712.6 193.4 L715.3 190.1 L718.1 186.8 L720.9 183.6 L723.8 180.3 L726.7 177.1 L729.7 173.8 L732.7 170.6 L735.8 167.3 L739 164.1 L742.2 160.8 L745.4 157.6 L748.7 154.3 L752 151.1 L755.4 147.8 L758.8 144.6 L762.3 141.3 L765.8 138.1 L769.3 134.8 L772.9 131.6 L776.6 128.3 L780.2 125 L783.9 121.8 L787.7 118.5 L791.5 115.3 L795.3 112 L799.1 108.8 L803 105.5 L806.9 102.3 L810.8 99 L814.8 95.8 L818.8 92.5 L822.8 89.3 L826.8 86 L830.9 82.8 L835 79.5 L839.1 76.3 L843.2 73 L847.3 69.8 L851.5 66.5 L855.7 63.3 L859.8 60 L864 56.7 L868.3 53.5 L872.5 50.2 L876.7 47 L880.9 43.7 L885.2 40.5 L889.4 37.2 L893.7 34 L897.9 30.7 L902.2 27.5"/>
<path d="M902.2 612.9 L897.1 609.7 L892 606.4 L886.9 603.2 L881.8 599.9 L876.7 596.7 L871.6 593.4 L866.5 590.2 L861.5 586.9 L856.4 583.7 L851.4 580.4 L846.3 577.1 L841.3 573.9 L836.4 570.6 L831.4 567.4 L826.4 564.1 L821.5 560.9 L816.6 557.6 L811.7 554.4 L806.9 551.1 L802.1 547.9 L797.3 544.6 L792.5 541.4 L787.8 538.1 L783.1 534.9 L778.5 531.6 L773.9 528.4 L769.3 525.1 L764.8 521.9 L760.3 518.6 L755.8 515.4 L751.4 512.1 L747.1 508.8 L742.8 505.6 L738.5 502.3 L734.3 499.1 L730.1 495.8 L726 492.6 L722 489.3 L718 486.1 L714 482.8 L710.2 479.6 L706.3 476.3 L702.6 473.1 L698.9 469.8 L695.2 466.6 L691.6 463.3 L688.1 460.1 L684.7 456.8 L681.3 453.6 L678 450.3 L674.7 447 L671.5 443.8 L668.4 440.5 L665.4 437.3 L662.4 434 L659.5 430.8 L656.7 427.5 L654 424.3 L651.3 421 L648.7 417.8 L646.2 414.5 L643.7 411.3 L641.4 408 L639.1 404.8 L636.9 401.5 L634.8 398.3 L632.7 395 L630.8 391.8 L628.9 388.5 L627.1 385.2 L625.4 382 L623.8 378.7 L622.3 375.5 L620.8 372.2 L619.4 369 L618.2 365.7 L617 362.5 L615.9 359.2 L614.9 356 L613.9 352.7 L613.1 349.5 L612.3 346.2 L611.7 343 L611.1 339.7 L610.6 336.5 L610.2 333.2 L609.9 330 L609.7 326.7 L609.5 323.5 L609.5 320.2 L609.5 316.9 L609.7 313.7 L609.9 310.4 L610.2 307.2 L610.6 303.9 L611.1 300.7 L611.7 297.4 L612.3 294.2 L613.1 290.9 L613.9 287.7 L614.9 284.4 L615.9 281.2 L617 277.9 L618.2 274.7 L619.4 271.4 L620.8 268.2 L622.3 264.9 L623.8 261.7 L625.4 258.4 L627.1 255.1 L628.9 251.9 L630.8 248.6 L632.7 245.4 L634.8 242.1 L636.9 238.9 L639.1 235.6 L641.4 232.4 L643.7 229.1 L646.2 225.9 L648.7 222.6 L651.3 219.4 L654 216.1 L656.7 212.9 L659.5 209.6 L662.4 206.4 L665.4 203.1 L668.4 199.9 L671.5 196.6 L674.7 193.4 L678 190.1 L681.3 186.8 L684.7 183.6 L688.1 180.3 L691.6 177.1 L695.2 173.8 L698.9 170.6 L702.6 167.3 L706.3 164.1 L710.2 160.8 L714 157.6 L718 154.3 L722 151.1 L726 147.8 L730.1 144.6 L734.3 141.3 L738.5 138.1 L742.8 134.8 L747.1 131.6 L751.4 128.3 L755.8 125 L760.3 121.8 L764.8 118.5 L769.3 115.3 L773.9 112 L778.5 108.8 L783.1 105.5 L787.8 102.3 L792.5 99 L797.3 95.8 L802.1 92.5 L806.9 89.3 L811.7 86 L816.6 82.8 L821.5 79.5 L826.4 76.3 L831.4 73 L836.4 69.8 L841.3 66.5 L846.3 63.3 L851.4 60 L856.4 56.7 L861.5 53.5 L866.5 50.2 L871.6 47 L876.7 43.7 L881.8 40.5 L886.9 37.2 L892 34 L897.1 30.7 L902.2 27.5"/>
<path d="M902.2 612.9 L896.2 609.7 L890.3 606.4 L884.3 603.2 L878.4 599.9 L872.4 596.7 L866.5 593.4 L860.6 590.2 L854.7 586.9 L848.8 583.7 L842.9 580.4 L837 577.1 L831.2 573.9 L825.4 570.6 L819.6 567.4 L813.8 564.1 L808.1 560.9 L802.4 557.6 L796.7 554.4 L791 551.1 L785.4 547.9 L779.8 544.6 L774.3 541.4 L768.8 538.1 L763.3 534.9 L757.9 531.6 L752.5 528.4 L747.2 525.1 L741.9 521.9 L736.6 518.6 L731.4 515.4 L726.3 512.1 L721.2 508.8 L716.2 505.6 L711.2 502.3 L706.3 499.1 L701.5 495.8 L696.7 492.6 L691.9 489.3 L687.3 486.1 L682.7 482.8 L678.1 479.6 L673.7 476.3 L669.3 473.1 L665 469.8 L660.7 466.6 L656.5 463.3 L652.4 460.1 L648.4 456.8 L644.5 453.6 L640.6 450.3 L636.8 447 L633.1 443.8 L629.5 440.5 L625.9 437.3 L622.4 434 L619.1 430.8 L615.8 427.5 L612.6 424.3 L609.5 421 L606.4 417.8 L603.5 414.5 L600.7 411.3 L597.9 408 L595.3 404.8 L592.7 401.5 L590.2 398.3 L587.8 395 L585.6 391.8 L583.4 388.5 L581.3 385.2 L579.3 382 L577.4 378.7 L575.6 375.5 L573.9 372.2 L572.3 369 L570.8 365.7 L569.4 362.5 L568.2 359.2 L567 356 L565.9 352.7 L564.9 349.5 L564 346.2 L563.2 343 L562.6 339.7 L562 336.5 L561.5 333.2 L561.2 330 L560.9 326.7 L560.7 323.5 L560.7 320.2 L560.7 316.9 L560.9 313.7 L561.2 310.4 L561.5 307.2 L562 303.9 L562.6 300.7 L563.2 297.4 L564 294.2 L564.9 290.9 L565.9 287.7 L567 284.4 L568.2 281.2 L569.4 277.9 L570.8 274.7 L572.3 271.4 L573.9 268.2 L575.6 264.9 L577.4 261.7 L579.3 258.4 L581.3 255.1 L583.4 251.9 L585.6 248.6 L587.8 245.4 L590.2 242.1 L592.7 238.9 L595.3 235.6 L597.9 232.4 L600.7 229.1 L603.5 225.9 L606.4 222.6 L609.5 219.4 L612.6 216.1 L615.8 212.9 L619.1 209.6 L622.4 206.4 L625.9 203.1 L629.5 199.9 L633.1 196.6 L636.8 193.4 L640.6 190.1 L644.5 186.8 L648.4 183.6 L652.4 180.3 L656.5 177.1 L660.7 173.8 L665 170.6 L669.3 167.3 L673.7 164.1 L678.1 160.8 L682.7 157.6 L687.3 154.3 L691.9 151.1 L696.7 147.8 L701.5 144.6 L706.3 141.3 L711.2 138.1 L716.2 134.8 L721.2 131.6 L726.3 128.3 L731.4 125 L736.6 121.8 L741.9 118.5 L747.2 115.3 L752.5 112 L757.9 108.8 L763.3 105.5 L768.8 102.3 L774.3 99 L779.8 95.8 L785.4 92.5 L791 89.3 L796.7 86 L802.4 82.8 L808.1 79.5 L813.8 76.3 L819.6 73 L825.4 69.8 L831.2 66.5 L837 63.3 L842.9 60 L848.8 56.7 L854.7 53.5 L860.6 50.2 L866.5 47 L872.4 43.7 L878.4 40.5 L884.3 37.2 L890.3 34 L896.2 30.7 L902.2 27.5"/>
<path d="M902.2 612.9 L895.4 609.7 L888.6 606.4 L881.8 603.2 L875 599.9 L868.2 596.7 L861.4 593.4 L854.6 590.2 L847.9 586.9 L841.1 583.7 L834.4 580.4 L827.7 577.1 L821.1 573.9 L814.4 570.6 L807.8 567.4 L801.2 564.1 L794.6 560.9 L788.1 557.6 L781.6 554.4 L775.1 551.1 L768.7 547.9 L762.3 544.6 L756 541.4 L749.7 538.1 L743.5 534.9 L737.3 531.6 L731.1 528.4 L725 525.1 L719 521.9 L713 518.6 L707 515.4 L701.2 512.1 L695.4 508.8 L689.6 505.6 L683.9 502.3 L678.3 499.1 L672.8 495.8 L667.3 492.6 L661.9 489.3 L656.6 486.1 L651.3 482.8 L646.1 479.6 L641 476.3 L636 473.1 L631.1 469.8 L626.2 466.6 L621.4 463.3 L616.8 460.1 L612.2 456.8 L607.6 453.6 L603.2 450.3 L598.9 447 L594.6 443.8 L590.5 440.5 L586.4 437.3 L582.5 434 L578.6 430.8 L574.9 427.5 L571.2 424.3 L567.6 421 L564.2 417.8 L560.8 414.5 L557.6 411.3 L554.4 408 L551.4 404.8 L548.5 401.5 L545.6 398.3 L542.9 395 L540.3 391.8 L537.8 388.5 L535.4 385.2 L533.2 382 L531 378.7 L529 375.5 L527 372.2 L525.2 369 L523.5 365.7 L521.9 362.5 L520.4 359.2 L519.1 356 L517.8 352.7 L516.7 349.5 L515.7 346.2 L514.8 343 L514 339.7 L513.4 336.5 L512.9 333.2 L512.4 330 L512.1 326.7 L512 323.5 L511.9 320.2 L512 316.9 L512.1 313.7 L512.4 310.4 L512.9 307.2 L513.4 303.9 L514 300.7 L514.8 297.4 L515.7 294.2 L516.7 290.9 L517.8 287.7 L519.1 284.4 L520.4 281.2 L521.9 277.9 L523.5 274.7 L525.2 271.4 L527 268.2 L529 264.9 L531 261.7 L533.2 258.4 L535.4 255.1 L537.8 251.9 L540.3 248.6 L542.9 245.4 L545.6 242.1 L548.5 238.9 L551.4 235.6 L554.4 232.4 L557.6 229.1 L560.8 225.9 L564.2 222.6 L567.6 219.4 L571.2 216.1 L574.9 212.9 L578.6 209.6 L582.5 206.4 L586.4 203.1 L590.5 199.9 L594.6 196.6 L598.9 193.4 L603.2 190.1 L607.6 186.8 L612.2 183.6 L616.8 180.3 L621.4 177.1 L626.2 173.8 L631.1 170.6 L636 167.3 L641 164.1 L646.1 160.8 L651.3 157.6 L656.6 154.3 L661.9 151.1 L667.3 147.8 L672.8 144.6 L678.3 141.3 L683.9 138.1 L689.6 134.8 L695.4 131.6 L701.2 128.3 L707 125 L713 121.8 L719 118.5 L725 115.3 L731.1 112 L737.3 108.8 L743.5 105.5 L749.7 102.3 L756 99 L762.3 95.8 L768.7 92.5 L775.1 89.3 L781.6 86 L788.1 82.8 L794.6 79.5 L801.2 76.3 L807.8 73 L814.4 69.8 L821.1 66.5 L827.7 63.3 L834.4 60 L841.1 56.7 L847.9 53.5 L854.6 50.2 L861.4 47 L868.2 43.7 L875 40.5 L881.8 37.2 L888.6 34 L895.4 30.7 L902.2 27.5"/>
<path d="M902.2 612.9 L894.5 609.7 L886.9 606.4 L879.2 603.2 L871.6 599.9 L863.9 596.7 L856.3 593.4 L848.7 590.2 L841.1 586.9 L833.5 583.7 L826 580.4 L818.4 577.1 L810.9 573.9 L803.4 570.6 L796 567.4 L788.6 564.1 L781.2 560.9 L773.8 557.6 L766.5 554.4 L759.2 551.1 L752 547.9 L744.8 544.6 L737.7 541.4 L730.6 538.1 L723.6 534.9 L716.6 531.6 L709.7 528.4 L702.9 525.1 L696.1 521.9 L689.3 518.6 L682.7 515.4 L676.1 512.1 L669.5 508.8 L663.1 505.6 L656.7 502.3 L650.3 499.1 L644.1 495.8 L638 492.6 L631.9 489.3 L625.9 486.1 L620 482.8 L614.1 479.6 L608.4 476.3 L602.7 473.1 L597.2 469.8 L591.7 466.6 L586.3 463.3 L581.1 460.1 L575.9 456.8 L570.8 453.6 L565.8 450.3 L561 447 L556.2 443.8 L551.5 440.5 L547 437.3 L542.5 434 L538.2 430.8 L534 427.5 L529.8 424.3 L525.8 421 L521.9 417.8 L518.2 414.5 L514.5 411.3 L511 408 L507.6 404.8 L504.3 401.5 L501.1 398.3 L498 395 L495.1 391.8 L492.3 388.5 L489.6 385.2 L487 382 L484.6 378.7 L482.3 375.5 L480.1 372.2 L478.1 369 L476.2 365.7 L474.4 362.5 L472.7 359.2 L471.2 356 L469.8 352.7 L468.5 349.5 L467.4 346.2 L466.4 343 L465.5 339.7 L464.8 336.5 L464.2 333.2 L463.7 330 L463.4 326.7 L463.2 323.5 L463.1 320.2 L463.2 316.9 L463.4 313.7 L463.7 310.4 L464.2 307.2 L464.8 303.9 L465.5 300.7 L466.4 297.4 L467.4 294.2 L468.5 290.9 L469.8 287.7 L471.2 284.4 L472.7 281.2 L474.4 277.9 L476.2 274.7 L478.1 271.4 L480.1 268.2 L482.3 264.9 L484.6 261.7 L487 258.4 L489.6 255.1 L492.3 251.9 L495.1 248.6 L498 245.4 L501.1 242.1 L504.3 238.9 L507.6 235.6 L511 232.4 L514.5 229.1 L518.2 225.9 L521.9 222.6 L525.8 219.4 L529.8 216.1 L534 212.9 L538.2 209.6 L542.5 206.4 L547 203.1 L551.5 199.9 L556.2 196.6 L561 193.4 L565.8 190.1 L570.8 186.8 L575.9 183.6 L581.1 180.3 L586.3 177.1 L591.7 173.8 L597.2 170.6 L602.7 167.3 L608.4 164.1 L614.1 160.8 L620 157.6 L625.9 154.3 L631.9 151.1 L638 147.8 L644.1 144.6 L650.3 141.3 L656.7 138.1 L663.1 134.8 L669.5 131.6 L676.1 128.3 L682.7 125 L689.3 121.8 L696.1 118.5 L702.9 115.3 L709.7 112 L716.6 108.8 L723.6 105.5 L730.6 102.3 L737.7 99 L744.8 95.8 L752 92.5 L759.2 89.3 L766.5 86 L773.8 82.8 L781.2 79.5 L788.6 76.3 L796 73 L803.4 69.8 L810.9 66.5 L818.4 63.3 L826 60 L833.5 56.7 L841.1 53.5 L848.7 50.2 L856.3 47 L863.9 43.7 L871.6 40.5 L879.2 37.2 L886.9 34 L894.5 30.7 L902.2 27.5"/>
<path d="M902.2 612.9 L893.7 609.7 L885.2 606.4 L876.7 603.2 L868.2 599.9 L859.7 596.7 L851.2 593.4 L842.7 590.2 L834.3 586.9 L825.9 583.7 L817.5 580.4 L809.1 577.1 L800.8 573.9 L792.5 570.6 L784.2 567.4 L775.9 564.1 L767.7 560.9 L759.6 557.6 L751.4 554.4 L743.4 551.1 L735.3 547.9 L727.4 544.6 L719.4 541.4 L711.6 538.1 L703.8 534.9 L696 531.6 L688.3 528.4 L680.7 525.1 L673.2 521.9 L665.7 518.6 L658.3 515.4 L650.9 512.1 L643.7 508.8 L636.5 505.6 L629.4 502.3 L622.4 499.1 L615.4 495.8 L608.6 492.6 L601.8 489.3 L595.2 486.1 L588.6 482.8 L582.1 479.6 L575.7 476.3 L569.5 473.1 L563.3 469.8 L557.2 466.6 L551.3 463.3 L545.4 460.1 L539.6 456.8 L534 453.6 L528.5 450.3 L523 447 L517.7 443.8 L512.6 440.5 L507.5 437.3 L502.6 434 L497.7 430.8 L493 427.5 L488.5 424.3 L484 421 L479.7 417.8 L475.5 414.5 L471.4 411.3 L467.5 408 L463.7 404.8 L460 401.5 L456.5 398.3 L453.1 395 L449.9 391.8 L446.7 388.5 L443.7 385.2 L440.9 382 L438.2 378.7 L435.6 375.5 L433.2 372.2 L430.9 369 L428.8 365.7 L426.8 362.5 L425 359.2 L423.3 356 L421.7 352.7 L420.3 349.5 L419.1 346.2 L418 343 L417 339.7 L416.2 336.5 L415.5 333.2 L415 330 L414.6 326.7 L414.4 323.5 L414.3 320.2 L414.4 316.9 L414.6 313.7 L415 310.4 L415.5 307.2 L416.2 303.9 L417 300.7 L418 297.4 L419.1 294.2 L420.3 290.9 L421.7 287.7 L423.3 284.4 L425 281.2 L426.8 277.9 L428.8 274.7 L430.9 271.4 L433.2 268.2 L435.6 264.9 L438.2 261.7 L440.9 258.4 L443.7 255.1 L446.7 251.9 L449.9 248.6 L453.1 245.4 L456.5 242.1 L460 238.9 L463.7 235.6 L467.5 232.4 L471.4 229.1 L475.5 225.9 L479.7 222.6 L484 219.4 L488.5 216.1 L493 212.9 L497.7 209.6 L502.6 206.4 L507.5 203.1 L512.6 199.9 L517.7 196.6 L523 193.4 L528.5 190.1 L534 186.8 L539.6 183.6 L545.4 180.3 L551.3 177.1 L557.2 173.8 L563.3 170.6 L569.5 167.3 L575.7 164.1 L582.1 160.8 L588.6 157.6 L595.2 154.3 L601.8 151.1 L608.6 147.8 L615.4 144.6 L622.4 141.3 L629.4 138.1 L636.5 134.8 L643.7 131.6 L650.9 128.3 L658.3 125 L665.7 121.8 L673.2 118.5 L680.7 115.3 L688.3 112 L696 108.8 L703.8 105.5 L711.6 102.3 L719.4 99 L727.4 95.8 L735.3 92.5 L743.4 89.3 L751.4 86 L759.6 82.8 L767.7 79.5 L775.9 76.3 L784.2 73 L792.5 69.8 L800.8 66.5 L809.1 63.3 L817.5 60 L825.9 56.7 L834.3 53.5 L842.7 50.2 L851.2 47 L859.7 43.7 L868.2 40.5 L876.7 37.2 L885.2 34 L893.7 30.7 L902.2 27.5"/>
<path d="M902.2 612.9 L892.8 609.7 L883.5 606.4 L874.1 603.2 L864.8 599.9 L855.4 596.7 L846.1 593.4 L836.8 590.2 L827.5 586.9 L818.2 583.7 L809 580.4 L799.8 577.1 L790.6 573.9 L781.5 570.6 L772.4 567.4 L763.3 564.1 L754.3 560.9 L745.3 557.6 L736.4 554.4 L727.5 551.1 L718.7 547.9 L709.9 544.6 L701.2 541.4 L692.5 538.1 L683.9 534.9 L675.4 531.6 L666.9 528.4 L658.6 525.1 L650.3 521.9 L642 518.6 L633.9 515.4 L625.8 512.1 L617.8 508.8 L609.9 505.6 L602.1 502.3 L594.4 499.1 L586.8 495.8 L579.2 492.6 L571.8 489.3 L564.5 486.1 L557.2 482.8 L550.1 479.6 L543.1 476.3 L536.2 473.1 L529.4 469.8 L522.7 466.6 L516.2 463.3 L509.7 460.1 L503.4 456.8 L497.2 453.6 L491.1 450.3 L485.1 447 L479.3 443.8 L473.6 440.5 L468 437.3 L462.6 434 L457.3 430.8 L452.1 427.5 L447.1 424.3 L442.2 421 L437.4 417.8 L432.8 414.5 L428.4 411.3 L424 408 L419.9 404.8 L415.8 401.5 L411.9 398.3 L408.2 395 L404.6 391.8 L401.2 388.5 L397.9 385.2 L394.8 382 L391.8 378.7 L389 375.5 L386.3 372.2 L383.8 369 L381.5 365.7 L379.3 362.5 L377.3 359.2 L375.4 356 L373.7 352.7 L372.1 349.5 L370.8 346.2 L369.5 343 L368.5 339.7 L367.6 336.5 L366.8 333.2 L366.3 330 L365.9 326.7 L365.6 323.5 L365.5 320.2 L365.6 316.9 L365.9 313.7 L366.3 310.4 L366.8 307.2 L367.6 303.9 L368.5 300.7 L369.5 297.4 L370.8 294.2 L372.1 290.9 L373.7 287.7 L375.4 284.4 L377.3 281.2 L379.3 277.9 L381.5 274.7 L383.8 271.4 L386.3 268.2 L389 264.9 L391.8 261.7 L394.8 258.4 L397.9 255.1 L401.2 251.9 L404.6 248.6 L408.2 245.4 L411.9 242.1 L415.8 238.9 L419.9 235.6 L424 232.4 L428.4 229.1 L432.8 225.9 L437.4 222.6 L442.2 219.4 L447.1 216.1 L452.1 212.9 L457.3 209.6 L462.6 206.4 L468 203.1 L473.6 199.9 L479.3 196.6 L485.1 193.4 L491.1 190.1 L497.2 186.8 L503.4 183.6 L509.7 180.3 L516.2 177.1 L522.7 173.8 L529.4 170.6 L536.2 167.3 L543.1 164.1 L550.1 160.8 L557.2 157.6 L564.5 154.3 L571.8 151.1 L579.2 147.8 L586.8 144.6 L594.4 141.3 L602.1 138.1 L609.9 134.8 L617.8 131.6 L625.8 128.3 L633.9 125 L642 121.8 L650.3 118.5 L658.6 115.3 L666.9 112 L675.4 108.8 L683.9 105.5 L692.5 102.3 L701.2 99 L709.9 95.8 L718.7 92.5 L727.5 89.3 L736.4 86 L745.3 82.8 L754.3 79.5 L763.3 76.3 L772.4 73 L781.5 69.8 L790.6 66.5 L799.8 63.3 L809 60 L818.2 56.7 L827.5 53.5 L836.8 50.2 L846.1 47 L855.4 43.7 L864.8 40.5 L874.1 37.2 L883.5 34 L892.8 30.7 L902.2 27.5"/>
<path d="M902.2 612.9 L892 609.7 L881.8 606.4 L871.6 603.2 L861.4 599.9 L851.2 596.7 L841 593.4 L830.9 590.2 L820.7 586.9 L810.6 583.7 L800.5 580.4 L790.5 577.1 L780.5 573.9 L770.5 570.6 L760.6 567.4 L750.7 564.1 L740.8 560.9 L731 557.6 L721.3 554.4 L711.6 551.1 L702 547.9 L692.4 544.6 L682.9 541.4 L673.4 538.1 L664.1 534.9 L654.8 531.6 L645.6 528.4 L636.4 525.1 L627.3 521.9 L618.4 518.6 L609.5 515.4 L600.7 512.1 L592 508.8 L583.3 505.6 L574.8 502.3 L566.4 499.1 L558.1 495.8 L549.9 492.6 L541.8 489.3 L533.8 486.1 L525.9 482.8 L518.1 479.6 L510.5 476.3 L502.9 473.1 L495.5 469.8 L488.2 466.6 L481.1 463.3 L474 460.1 L467.1 456.8 L460.4 453.6 L453.7 450.3 L447.2 447 L440.9 443.8 L434.6 440.5 L428.6 437.3 L422.6 434 L416.8 430.8 L411.2 427.5 L405.7 424.3 L400.4 421 L395.2 417.8 L390.2 414.5 L385.3 411.3 L380.6 408 L376 404.8 L371.6 401.5 L367.4 398.3 L363.3 395 L359.4 391.8 L355.6 388.5 L352.1 385.2 L348.6 382 L345.4 378.7 L342.3 375.5 L339.4 372.2 L336.7 369 L334.1 365.7 L331.8 362.5 L329.5 359.2 L327.5 356 L325.6 352.7 L324 349.5 L322.4 346.2 L321.1 343 L320 339.7 L319 336.5 L318.2 333.2 L317.6 330 L317.1 326.7 L316.8 323.5 L316.8 320.2 L316.8 316.9 L317.1 313.7 L317.6 310.4 L318.2 307.2 L319 303.9 L320 300.7 L321.1 297.4 L322.4 294.2 L324 290.9 L325.6 287.7 L327.5 284.4 L329.5 281.2 L331.8 277.9 L334.1 274.7 L336.7 271.4 L339.4 268.2 L342.3 264.9 L345.4 261.7 L348.6 258.4 L352.1 255.1 L355.6 251.9 L359.4 248.6 L363.3 245.4 L367.4 242.1 L371.6 238.9 L376 235.6 L380.6 232.4 L385.3 229.1 L390.2 225.9 L395.2 222.6 L400.4 219.4 L405.7 216.1 L411.2 212.9 L416.8 209.6 L422.6 206.4 L428.6 203.1 L434.6 199.9 L440.9 196.6 L447.2 193.4 L453.7 190.1 L460.4 186.8 L467.1 183.6 L474 180.3 L481.1 177.1 L488.2 173.8 L495.5 170.6 L502.9 167.3 L510.5 164.1 L518.1 160.8 L525.9 157.6 L533.8 154.3 L541.8 151.1 L549.9 147.8 L558.1 144.6 L566.4 141.3 L574.8 138.1 L583.3 134.8 L592 131.6 L600.7 128.3 L609.5 125 L618.4 121.8 L627.3 118.5 L636.4 115.3 L645.6 112 L654.8 108.8 L664.1 105.5 L673.4 102.3 L682.9 99 L692.4 95.8 L702 92.5 L711.6 89.3 L721.3 86 L731 82.8 L740.8 79.5 L750.7 76.3 L760.6 73 L770.5 69.8 L780.5 66.5 L790.5 63.3 L800.5 60 L810.6 56.7 L820.7 53.5 L830.9 50.2 L841 47 L851.2 43.7 L861.4 40.5 L871.6 37.2 L881.8 34 L892 30.7 L902.2 27.5"/>
<path d="M1053.7 564.1 L750.7 564.1"/>
<path d="M1194.9 515.4 L609.5 515.4"/>
<path d="M1316.2 466.6 L488.2 466.6"/>
<path d="M1409.2 417.8 L395.2 417.8"/>
<path d="M1467.7 369 L336.7 369"/>
<path d="M1487.7 320.2 L316.8 320.2"/>
<path d="M1467.7 271.4 L336.7 271.4"/>
<path d="M1409.2 222.6 L395.2 222.6"/>
<path d="M1316.2 173.8 L488.2 173.8"/>
<path d="M1194.9 125 L609.5 125"/>
<path d="M1053.7 76.3 L750.7 76.3"/>
</g>
<text x="1471.8" y="330" font-family="'Liberation Sans', sans-serif" font-size="10.30" fill="#7c7c7c" text-anchor="start" textLength="26.7" lengthAdjust="spacingAndGlyphs">+180</text>
<circle cx="1501.5" cy="322.7" r="0.9" fill="none" stroke="#7c7c7c" stroke-width="0.7"/>
<text x="1374.2" y="330" font-family="'Liberation Sans', sans-serif" font-size="10.30" fill="#7c7c7c" text-anchor="start" textLength="26.7" lengthAdjust="spacingAndGlyphs">+210</text>
<circle cx="1403.9" cy="322.7" r="0.9" fill="none" stroke="#7c7c7c" stroke-width="0.7"/>
<text x="1276.7" y="330" font-family="'Liberation Sans', sans-serif" font-size="10.30" fill="#7c7c7c" text-anchor="start" textLength="26.7" lengthAdjust="spacingAndGlyphs">+240</text>
<circle cx="1306.3" cy="322.7" r="0.9" fill="none" stroke="#7c7c7c" stroke-width="0.7"/>
<text x="1179.1" y="330" font-family="'Liberation Sans', sans-serif" font-size="10.30" fill="#7c7c7c" text-anchor="start" textLength="26.7" lengthAdjust="spacingAndGlyphs">+270</text>
<circle cx="1208.8" cy="322.7" r="0.9" fill="none" stroke="#7c7c7c" stroke-width="0.7"/>
<text x="1081.5" y="330" font-family="'Liberation Sans', sans-serif" font-size="10.30" fill="#7c7c7c" text-anchor="start" textLength="26.7" lengthAdjust="spacingAndGlyphs">+300</text>
<circle cx="1111.2" cy="322.7" r="0.9" fill="none" stroke="#7c7c7c" stroke-width="0.7"/>
<text x="983.9" y="330" font-family="'Liberation Sans', sans-serif" font-size="10.30" fill="#7c7c7c" text-anchor="start" textLength="26.7" lengthAdjust="spacingAndGlyphs">+330</text>
<circle cx="1013.6" cy="322.7" r="0.9" fill="none" stroke="#7c7c7c" stroke-width="0.7"/>
<text x="892.5" y="330" font-family="'Liberation Sans', sans-serif" font-size="10.30" fill="#7c7c7c" text-anchor="start" textLength="14.3" lengthAdjust="spacingAndGlyphs">+0</text>
<circle cx="909.9" cy="322.7" r="0.9" fill="none" stroke="#7c7c7c" stroke-width="0.7"/>
<text x="791.9" y="330" font-family="'Liberation Sans', sans-serif" font-size="10.30" fill="#7c7c7c" text-anchor="start" textLength="20.5" lengthAdjust="spacingAndGlyphs">+30</text>
<circle cx="815.4" cy="322.7" r="0.9" fill="none" stroke="#7c7c7c" stroke-width="0.7"/>
<text x="694.3" y="330" font-family="'Liberation Sans', sans-serif" font-size="10.30" fill="#7c7c7c" text-anchor="start" textLength="20.5" lengthAdjust="spacingAndGlyphs">+60</text>
<circle cx="717.8" cy="322.7" r="0.9" fill="none" stroke="#7c7c7c" stroke-width="0.7"/>
<text x="596.7" y="330" font-family="'Liberation Sans', sans-serif" font-size="10.30" fill="#7c7c7c" text-anchor="start" textLength="20.5" lengthAdjust="spacingAndGlyphs">+90</text>
<circle cx="620.2" cy="322.7" r="0.9" fill="none" stroke="#7c7c7c" stroke-width="0.7"/>
<text x="496.1" y="330" font-family="'Liberation Sans', sans-serif" font-size="10.30" fill="#7c7c7c" text-anchor="start" textLength="26.7" lengthAdjust="spacingAndGlyphs">+120</text>
<circle cx="525.7" cy="322.7" r="0.9" fill="none" stroke="#7c7c7c" stroke-width="0.7"/>
<text x="398.5" y="330" font-family="'Liberation Sans', sans-serif" font-size="10.30" fill="#7c7c7c" text-anchor="start" textLength="26.7" lengthAdjust="spacingAndGlyphs">+150</text>
<circle cx="428.2" cy="322.7" r="0.9" fill="none" stroke="#7c7c7c" stroke-width="0.7"/>
<text x="300.9" y="330" font-family="'Liberation Sans', sans-serif" font-size="10.30" fill="#7c7c7c" text-anchor="start" textLength="26.7" lengthAdjust="spacingAndGlyphs">+180</text>
<circle cx="330.6" cy="322.7" r="0.9" fill="none" stroke="#7c7c7c" stroke-width="0.7"/>
<text x="889.9" y="624.1" font-family="'Liberation Sans', sans-serif" font-size="10.30" fill="#7c7c7c" text-anchor="start" textLength="20.5" lengthAdjust="spacingAndGlyphs">−90</text>
<circle cx="913.5" cy="616.8" r="0.9" fill="none" stroke="#7c7c7c" stroke-width="0.7"/>
<text x="889.9" y="525.1" font-family="'Liberation Sans', sans-serif" font-size="10.30" fill="#7c7c7c" text-anchor="start" textLength="20.5" lengthAdjust="spacingAndGlyphs">−60</text>
<circle cx="913.5" cy="517.9" r="0.9" fill="none" stroke="#7c7c7c" stroke-width="0.7"/>
<text x="889.9" y="427.6" font-family="'Liberation Sans', sans-serif" font-size="10.30" fill="#7c7c7c" text-anchor="start" textLength="20.5" lengthAdjust="spacingAndGlyphs">−30</text>
<circle cx="913.5" cy="420.3" r="0.9" fill="none" stroke="#7c7c7c" stroke-width="0.7"/>
<text x="889.9" y="220.6" font-family="'Liberation Sans', sans-serif" font-size="10.30" fill="#7c7c7c" text-anchor="start" textLength="20.5" lengthAdjust="spacingAndGlyphs">+30</text>
<circle cx="913.5" cy="213.3" r="0.9" fill="none" stroke="#7c7c7c" stroke-width="0.7"/>
<text x="889.9" y="123" font-family="'Liberation Sans', sans-serif" font-size="10.30" fill="#7c7c7c" text-anchor="start" textLength="20.5" lengthAdjust="spacingAndGlyphs">+60</text>
<circle cx="913.5" cy="115.7" r="0.9" fill="none" stroke="#7c7c7c" stroke-width="0.7"/>
<text x="889.9" y="25.2" font-family="'Liberation Sans', sans-serif" font-size="10.30" fill="#7c7c7c" text-anchor="start" textLength="20.5" lengthAdjust="spacingAndGlyphs">+90</text>
<circle cx="913.5" cy="17.9" r="0.9" fill="none" stroke="#7c7c7c" stroke-width="0.7"/>
<path d="M873.3 42.8 L871 44.2 L868.7 45.6 L866.4 47 L864.2 48.3 L861.9 49.7 L859.6 51.1 L857.3 52.5 L855 53.9 L852.7 55.3 L850.4 56.7 L848.1 58.1 L845.8 59.5 L843.5 60.9 L841.2 62.3 L838.9 63.7 L836.6 65.2 L834.3 66.6 L832 68 L829.8 69.4 L827.5 70.8 L825.2 72.2 L823 73.6 L820.7 75 L818.4 76.4 L816.2 77.8 L813.9 79.2 L811.7 80.6 L809.5 82 L807.2 83.5 L805 84.9 L802.8 86.3 L800.6 87.7 L798.3 89.1 L796.1 90.5 L793.9 91.9 L791.7 93.3 L789.6 94.7 L787.4 96.1 L785.2 97.6 L783 99 L780.9 100.4 L778.7 101.8 L776.6 103.2 L774.4 104.6 L772.3 106 L770.2 107.4 L768.1 108.8 L765.9 110.2 L763.8 111.7 L761.7 113.1 L759.7 114.5 L757.6 115.9 L755.5 117.3 L753.5 118.7 L751.4 120.1 L749.4 121.5 L747.3 122.9 L745.3 124.3 L743.3 125.8 L741.3 127.2 L739.3 128.6 L737.3 130 L735.3 131.4 L733.3 132.8 L731.4 134.2 L729.4 135.6 L727.5 137 L725.5 138.5 L723.6 139.9 L721.7 141.3 L719.8 142.7 L717.9 144.1 L716 145.5 L714.1 146.9 L712.3 148.3 L710.4 149.7 L708.6 151.2 L706.8 152.6 L705 154 L703.1 155.4 L701.4 156.8 L699.6 158.2 L697.8 159.6 L696 161 L694.3 162.4 L692.6 163.9 L690.8 165.3 L689.1 166.7 L687.4 168.1 L685.7 169.5 L684.1 170.9 L682.4 172.3 L680.8 173.7 L679.1 175.1 L677.5 176.6 L675.9 178 L674.3 179.4 L672.7 180.8 L671.1 182.2 L669.6 183.6 L668 185 L666.5 186.4 L665 187.8 L663.5 189.3 L662 190.7 L660.5 192.1 L659.1 193.5 L657.6 194.9 L656.2 196.3 L654.8 197.7 L653.4 199.1 L652 200.6 L650.6 202 L649.2 203.4 L647.9 204.8 L646.5 206.2 L645.2 207.6 L643.9 209 L642.6 210.4 L641.3 211.8 L640.1 213.3 L638.8 214.7 L637.6 216.1 L636.4 217.5 L635.2 218.9 L634 220.3 L632.8 221.7 L631.7 223.1 L630.6 224.5 L629.4 226 L628.3 227.4 L627.2 228.8 L626.2 230.2 L625.1 231.6 L624.1 233 L623 234.4 L622 235.8 L621 237.2 L620 238.7 L619.1 240.1 L618.1 241.5 L617.2 242.9 L616.3 244.3 L615.4 245.7 L614.5 247.1 L613.6 248.5 L612.8 250 L612 251.4 L611.2 252.8 L610.4 254.2 L609.6 255.6 L608.8 257 L608.1 258.4 L607.3 259.8 L606.6 261.2 L605.9 262.7 L605.2 264.1 L604.6 265.5 L603.9 266.9 L603.3 268.3" fill="none" stroke="#2ab07f" stroke-width="1.39" stroke-dasharray="1.39 2.29"/>
<path d="M805 68.3 L803.5 69.3 L801.9 70.3 L800.3 71.3 L798.6 72.4 L797 73.4 L795.3 74.5 L793.6 75.6 L791.9 76.7 L790.2 77.8 L788.5 78.9 L786.7 80 L784.9 81.1 L783.2 82.2 L781.4 83.4 L779.6 84.5 L777.8 85.6 L776 86.8 L774.2 87.9 L772.4 89.1 L770.6 90.2 L768.7 91.4 L766.9 92.6 L765.1 93.8 L763.3 94.9 L761.4 96.1 L759.6 97.3 L757.8 98.5 L755.9 99.7 L754.1 100.9 L752.3 102.1 L750.4 103.3 L748.6 104.5 L746.8 105.7 L745 106.9 L743.2 108.1 L741.3 109.3 L739.5 110.5 L737.7 111.7 L735.9 112.9 L734.1 114.2 L732.3 115.4 L730.5 116.6 L728.7 117.8 L726.9 119 L725.2 120.3 L723.4 121.5 L721.6 122.7 L719.9 123.9 L718.1 125.2 L716.4 126.4 L714.6 127.6 L712.9 128.9 L711.1 130.1 L709.4 131.3 L707.7 132.6 L706 133.8 L704.3 135 L702.6 136.3 L700.9 137.5 L699.2 138.8 L697.6 140 L695.9 141.2 L694.2 142.5 L692.6 143.7 L691 145 L689.3 146.2 L687.7 147.5 L686.1 148.7 L684.5 149.9 L682.9 151.2 L681.3 152.4 L679.7 153.7 L678.1 154.9 L676.6 156.2 L675 157.4 L673.5 158.7 L672 159.9 L670.4 161.2 L668.9 162.4 L667.4 163.7 L665.9 164.9 L664.5 166.2 L663 167.4 L661.5 168.7 L660.1 169.9 L658.6 171.2 L657.2 172.4 L655.8 173.7 L654.4 175 L653 176.2 L651.6 177.5 L650.2 178.7 L648.8 180 L647.5 181.2 L646.2 182.5 L644.8 183.7 L643.5 185 L642.2 186.3 L640.9 187.5 L639.6 188.8 L638.3 190 L637.1 191.3 L635.8 192.5 L634.6 193.8 L633.4 195.1 L632.1 196.3 L630.9 197.6 L629.8 198.8 L628.6 200.1 L627.4 201.4 L626.3 202.6 L625.1 203.9 L624 205.1 L622.9 206.4 L621.8 207.7 L620.7 208.9 L619.6 210.2 L618.5 211.4 L617.5 212.7 L616.4 214 L615.4 215.2 L614.4 216.5 L613.4 217.7 L612.4 219 L611.4 220.3 L610.5 221.5 L609.5 222.8 L608.6 224.1 L607.7 225.3 L606.8 226.6 L605.9 227.8 L605 229.1 L604.1 230.4 L603.3 231.6 L602.4 232.9 L601.6 234.2 L600.8 235.4 L600 236.7 L599.2 237.9 L598.4 239.2 L597.7 240.5 L596.9 241.7 L596.2 243 L595.5 244.3 L594.8 245.5 L594.1 246.8 L593.4 248.1 L592.8 249.3 L592.1 250.6 L591.5 251.9 L590.9 253.1 L590.3 254.4 L589.7 255.6 L589.1 256.9 L588.6 258.2 L588 259.4 L587.5 260.7 L587 262 L586.5 263.2 L586 264.5" fill="none" stroke="#2ab07f" stroke-width="1.39" stroke-dasharray="1.39 2.29"/>
<path d="M925.8 70 L924 68.8 L922.2 67.6 L920.4 66.5 L918.6 65.4 L916.9 64.4 L915.1 63.4 L913.4 62.4 L911.7 61.5 L910.1 60.7 L908.4 59.9 L906.7 59.2 L905.1 58.6 L903.5 58.1 L901.8 57.6 L900.2 57.3 L898.6 57 L896.9 56.8 L895.3 56.7 L893.6 56.7 L891.9 56.8 L890.1 57 L888.3 57.3 L886.5 57.7 L884.6 58.2 L882.7 58.7 L880.7 59.4 L878.7 60.1 L876.7 60.8 L874.5 61.7 L872.4 62.6 L870.2 63.5 L867.9 64.5 L865.6 65.6 L863.3 66.7 L860.9 67.8 L858.5 69 L856.1 70.2 L853.6 71.5 L851.1 72.7 L848.6 74 L846 75.3 L843.5 76.7 L840.9 78 L838.3 79.4 L835.6 80.8 L833 82.2 L830.3 83.6 L827.7 85.1 L825 86.5 L822.3 88 L819.6 89.5 L816.9 91 L814.2 92.5 L811.4 94 L808.7 95.5 L806 97 L803.3 98.5 L800.5 100 L797.8 101.6 L795.1 103.1 L792.3 104.7 L789.6 106.2 L786.9 107.8 L784.1 109.4 L781.4 110.9 L778.7 112.5 L775.9 114.1 L773.2 115.7 L770.5 117.2 L767.8 118.8 L765.1 120.4 L762.4 122 L759.7 123.6 L757 125.2 L754.3 126.8 L751.7 128.4 L749 130 L746.4 131.6 L743.7 133.2 L741.1 134.9 L738.5 136.5 L735.8 138.1 L733.2 139.7 L730.6 141.3 L728.1 142.9 L725.5 144.6 L722.9 146.2 L720.4 147.8 L717.8 149.5 L715.3 151.1 L712.8 152.7 L710.3 154.3 L707.8 156 L705.3 157.6 L702.9 159.2 L700.4 160.9 L698 162.5 L695.6 164.2 L693.2 165.8 L690.8 167.4 L688.4 169.1 L686.1 170.7 L683.7 172.4 L681.4 174 L679.1 175.6 L676.8 177.3 L674.5 178.9 L672.3 180.6 L670 182.2 L667.8 183.9 L665.6 185.5 L663.4 187.2 L661.3 188.8 L659.1 190.5 L657 192.1 L654.9 193.8 L652.8 195.4 L650.7 197.1 L648.6 198.7 L646.6 200.4 L644.6 202 L642.6 203.7 L640.6 205.3 L638.6 207 L636.7 208.6 L634.8 210.3 L632.9 211.9 L631 213.6 L629.2 215.3 L627.3 216.9 L625.5 218.6 L623.7 220.2 L622 221.9 L620.2 223.5 L618.5 225.2 L616.8 226.9 L615.1 228.5 L613.5 230.2 L611.8 231.8 L610.2 233.5 L608.6 235.1 L607.1 236.8 L605.5 238.5 L604 240.1 L602.5 241.8 L601 243.4 L599.6 245.1 L598.2 246.8 L596.8 248.4 L595.4 250.1 L594 251.7 L592.7 253.4 L591.4 255.1 L590.1 256.7 L588.9 258.4 L587.7 260.1 L586.5 261.7 L585.3 263.4 L584.1 265 L583 266.7" fill="none" stroke="#2ab07f" stroke-width="1.39" stroke-dasharray="1.39 2.29"/>
<path d="M960 86.7 L957.6 85.1 L955.2 83.5 L952.8 82 L950.4 80.4 L948 78.9 L945.7 77.4 L943.3 75.9 L941 74.4 L938.7 73 L936.4 71.6 L934.2 70.2 L932 68.9 L929.8 67.6 L927.6 66.4 L925.4 65.2 L923.3 64 L921.2 62.9 L919.2 61.9 L917.2 60.9 L915.2 60.1 L913.2 59.3 L911.3 58.5 L909.4 57.9 L907.5 57.4 L905.7 57 L903.8 56.7 L902 56.5 L900.2 56.4 L898.3 56.4 L896.5 56.6 L894.6 56.9 L892.7 57.2 L890.7 57.7 L888.7 58.3 L886.7 59 L884.6 59.8 L882.5 60.6 L880.4 61.5 L878.2 62.5 L875.9 63.6 L873.6 64.7 L871.3 65.9 L868.9 67.2 L866.5 68.4 L864.1 69.8 L861.6 71.1 L859.2 72.5 L856.6 73.9 L854.1 75.4 L851.5 76.8 L848.9 78.3 L846.3 79.9 L843.7 81.4 L841.1 83 L838.4 84.5 L835.8 86.1 L833.1 87.7 L830.4 89.3 L827.7 91 L825 92.6 L822.3 94.2 L819.6 95.9 L816.9 97.6 L814.2 99.2 L811.5 100.9 L808.8 102.6 L806.1 104.3 L803.3 106 L800.6 107.7 L797.9 109.4 L795.2 111.1 L792.5 112.9 L789.8 114.6 L787.1 116.3 L784.4 118.1 L781.7 119.8 L779.1 121.5 L776.4 123.3 L773.7 125 L771.1 126.8 L768.4 128.6 L765.8 130.3 L763.2 132.1 L760.5 133.8 L757.9 135.6 L755.3 137.4 L752.7 139.1 L750.2 140.9 L747.6 142.7 L745 144.5 L742.5 146.2 L740 148 L737.4 149.8 L734.9 151.6 L732.4 153.4 L730 155.1 L727.5 156.9 L725.1 158.7 L722.6 160.5 L720.2 162.3 L717.8 164.1 L715.4 165.9 L713.1 167.7 L710.7 169.5 L708.4 171.3 L706 173.1 L703.7 174.9 L701.5 176.7 L699.2 178.5 L696.9 180.2 L694.7 182 L692.5 183.9 L690.3 185.7 L688.1 187.5 L686 189.3 L683.8 191.1 L681.7 192.9 L679.6 194.7 L677.6 196.5 L675.5 198.3 L673.5 200.1 L671.5 201.9 L669.5 203.7 L667.5 205.5 L665.6 207.3 L663.6 209.1 L661.7 210.9 L659.8 212.7 L658 214.6 L656.1 216.4 L654.3 218.2 L652.5 220 L650.8 221.8 L649 223.6 L647.3 225.4 L645.6 227.2 L643.9 229 L642.3 230.9 L640.7 232.7 L639.1 234.5 L637.5 236.3 L636 238.1 L634.4 239.9 L632.9 241.7 L631.5 243.6 L630 245.4 L628.6 247.2 L627.2 249 L625.8 250.8 L624.5 252.6 L623.2 254.4 L621.9 256.3 L620.6 258.1 L619.4 259.9 L618.2 261.7 L617 263.5 L615.8 265.3 L614.7 267.2 L613.6 269 L612.5 270.8" fill="none" stroke="#2ab07f" stroke-width="1.39" stroke-dasharray="1.39 2.29"/>
<path d="M966.7 135 L964.6 133.5 L962.5 131.9 L960.4 130.4 L958.3 128.9 L956.2 127.5 L954.1 126 L952 124.6 L949.9 123.1 L947.9 121.7 L945.8 120.4 L943.8 119 L941.7 117.7 L939.7 116.3 L937.6 115.1 L935.6 113.8 L933.6 112.6 L931.6 111.3 L929.6 110.2 L927.6 109 L925.6 107.9 L923.6 106.8 L921.6 105.7 L919.7 104.7 L917.7 103.8 L915.8 102.8 L913.8 101.9 L911.9 101.1 L910 100.2 L908 99.5 L906.1 98.7 L904.2 98.1 L902.3 97.4 L900.3 96.9 L898.4 96.3 L896.5 95.8 L894.6 95.4 L892.6 95.1 L890.7 94.7 L888.8 94.5 L886.8 94.3 L884.8 94.2 L882.8 94.1 L880.8 94 L878.8 94.1 L876.8 94.2 L874.7 94.3 L872.6 94.5 L870.5 94.8 L868.4 95.1 L866.2 95.5 L864 95.9 L861.8 96.4 L859.6 96.9 L857.3 97.5 L855 98.2 L852.6 98.8 L850.3 99.6 L847.9 100.4 L845.5 101.2 L843 102.1 L840.5 103 L838 103.9 L835.5 104.9 L832.9 105.9 L830.3 107 L827.7 108.1 L825 109.2 L822.3 110.3 L819.6 111.5 L816.9 112.7 L814.2 114 L811.4 115.3 L808.6 116.6 L805.8 117.9 L803 119.2 L800.1 120.6 L797.3 122 L794.4 123.4 L791.5 124.8 L788.6 126.2 L785.7 127.7 L782.8 129.2 L779.9 130.7 L776.9 132.2 L774 133.7 L771 135.2 L768.1 136.8 L765.1 138.4 L762.2 139.9 L759.2 141.5 L756.2 143.1 L753.2 144.7 L750.3 146.4 L747.3 148 L744.3 149.6 L741.4 151.3 L738.4 153 L735.4 154.6 L732.5 156.3 L729.5 158 L726.6 159.7 L723.6 161.4 L720.7 163.1 L717.8 164.8 L714.9 166.5 L712 168.3 L709.1 170 L706.2 171.7 L703.3 173.5 L700.4 175.2 L697.6 177 L694.8 178.7 L691.9 180.5 L689.1 182.3 L686.3 184 L683.6 185.8 L680.8 187.6 L678 189.4 L675.3 191.2 L672.6 193 L669.9 194.8 L667.2 196.6 L664.6 198.4 L661.9 200.2 L659.3 202 L656.7 203.8 L654.1 205.6 L651.6 207.4 L649 209.3 L646.5 211.1 L644 212.9 L641.5 214.7 L639.1 216.6 L636.7 218.4 L634.3 220.3 L631.9 222.1 L629.5 223.9 L627.2 225.8 L624.9 227.6 L622.6 229.5 L620.4 231.3 L618.2 233.2 L616 235 L613.8 236.9 L611.6 238.7 L609.5 240.6 L607.4 242.4 L605.4 244.3 L603.4 246.2 L601.4 248 L599.4 249.9 L597.4 251.7 L595.5 253.6 L593.6 255.5 L591.8 257.3 L590 259.2 L588.2 261.1 L586.4 263 L584.7 264.8 L583 266.7" fill="none" stroke="#2ab07f" stroke-width="1.39" stroke-dasharray="1.39 2.29"/>
<path d="M1073.3 122.5 L1071.2 120.7 L1069.1 118.8 L1067 117 L1064.9 115.2 L1062.8 113.4 L1060.7 111.7 L1058.6 109.9 L1056.5 108.1 L1054.5 106.4 L1052.4 104.7 L1050.4 102.9 L1048.3 101.2 L1046.3 99.6 L1044.4 97.9 L1042.4 96.3 L1040.5 94.6 L1038.6 93 L1036.7 91.5 L1034.9 89.9 L1033.2 88.4 L1031.5 86.9 L1029.8 85.4 L1028.2 84 L1026.7 82.6 L1025.3 81.3 L1024 80 L1022.8 78.7 L1021.7 77.5 L1020.7 76.4 L1019.8 75.3 L1019.1 74.3 L1018.6 73.3 L1018.2 72.5 L1018 71.7 L1018.1 70.9 L1018.3 70.3 L1018.8 69.7 L1019.5 69.3 L1020.5 68.9 L1021.8 68.6 L1023.3 68.4 L1025.1 68.4 L1027.3 68.4 L1029.7 68.5" fill="none" stroke="#2ab07f" stroke-width="1.39" stroke-dasharray="1.39 2.29"/>
<path d="M775.2 68.8 L776.2 69.1 L777 69.5 L777.5 70 L777.7 70.6 L777.7 71.3 L777.4 72.1 L777 72.9 L776.3 73.9 L775.5 74.9 L774.5 75.9 L773.4 77 L772.1 78.2 L770.7 79.4 L769.2 80.7 L767.5 82 L765.8 83.4 L764 84.8 L762.1 86.3 L760.1 87.7 L758.1 89.2 L756 90.8 L753.9 92.3 L751.7 93.9 L749.5 95.5 L747.3 97.2 L745 98.8 L742.7 100.5 L740.4 102.2 L738 103.9 L735.7 105.6 L733.3 107.4 L730.9 109.1 L728.5 110.9 L726.1 112.7 L723.7 114.4 L721.2 116.2 L718.8 118.1 L716.4 119.9 L714 121.7 L711.6 123.5 L709.1 125.4 L706.7 127.2 L704.3 129.1 L702 130.9 L699.6 132.8 L697.2 134.7 L694.8 136.6 L692.5 138.4 L690.2 140.3 L687.8 142.2 L685.5 144.1 L683.2 146 L681 147.9 L678.7 149.9 L676.5 151.8 L674.3 153.7 L672.1 155.6 L669.9 157.5 L667.7 159.5 L665.6 161.4 L663.5 163.3 L661.4 165.3 L659.3 167.2 L657.2 169.1 L655.2 171.1 L653.2 173 L651.2 175 L649.3 176.9 L647.3 178.9 L645.4 180.8 L643.6 182.8 L641.7 184.8 L639.9 186.7 L638.1 188.7 L636.3 190.7 L634.6 192.6 L632.9 194.6 L631.2 196.6 L629.5 198.5 L627.9 200.5 L626.3 202.5 L624.7 204.4 L623.2 206.4 L621.7 208.4 L620.2 210.4 L618.7 212.3 L617.3 214.3 L615.9 216.3 L614.6 218.3 L613.3 220.3 L612 222.2 L610.7 224.2 L609.5 226.2 L608.3 228.2 L607.1 230.2 L606 232.2 L604.9 234.1 L603.8 236.1 L602.8 238.1 L601.8 240.1 L600.8 242.1 L599.9 244.1 L599 246.1 L598.2 248.1 L597.3 250.1 L596.5 252.1 L595.8 254 L595.1 256 L594.4 258 L593.7 260 L593.1 262 L592.5 264 L592 266 L591.5 268 L591 270" fill="none" stroke="#2ab07f" stroke-width="1.39" stroke-dasharray="1.39 2.29"/>
<path d="M802.3 59.5 L803 59.7 L803.5 60 L803.8 60.4 L804 60.8 L804 61.3 L803.8 61.8 L803.5 62.4 L803.1 63.1 L802.5 63.7 L801.8 64.5 L801 65.2 L800.1 66 L799.1 66.9 L798 67.8 L796.9 68.7 L795.6 69.6 L794.3 70.6 L792.9 71.6 L791.5 72.6 L790 73.7 L788.5 74.7 L786.9 75.8 L785.3 76.9 L783.7 78 L782 79.2 L780.3 80.3 L778.5 81.5 L776.8 82.7 L775 83.9 L773.2 85.1 L771.3 86.3 L769.5 87.5 L767.6 88.8 L765.8 90 L763.9 91.3 L762 92.6 L760.1 93.8 L758.2 95.1 L756.3 96.4 L754.3 97.7 L752.4 99 L750.5 100.3 L748.5 101.6 L746.6 102.9 L744.6 104.2 L742.7 105.6 L740.8 106.9 L738.8 108.2 L736.9 109.6 L734.9 110.9 L733 112.3 L731 113.6 L729.1 115 L727.2 116.3 L725.3 117.7 L723.3 119 L721.4 120.4 L719.5 121.8 L717.6 123.1 L715.7 124.5 L713.8 125.9 L711.9 127.3 L710 128.6 L708.1 130 L706.3 131.4 L704.4 132.8 L702.6 134.2 L700.7 135.6 L698.9 137 L697 138.3 L695.2 139.7 L693.4 141.1 L691.6 142.5 L689.8 143.9 L688 145.3 L686.3 146.7 L684.5 148.1 L682.8 149.5 L681 150.9 L679.3 152.3 L677.6 153.7 L675.9 155.1 L674.2 156.6 L672.5 158 L670.8 159.4 L669.2 160.8 L667.5 162.2 L665.9 163.6 L664.3 165 L662.6 166.4 L661 167.8 L659.5 169.3 L657.9 170.7 L656.3 172.1 L654.8 173.5 L653.3 174.9 L651.7 176.4 L650.2 177.8 L648.7 179.2 L647.3 180.6 L645.8 182 L644.3 183.5 L642.9 184.9 L641.5 186.3 L640.1 187.7 L638.7 189.1 L637.3 190.6 L636 192 L634.6 193.4 L633.3 194.8 L632 196.3 L630.7 197.7 L629.4 199.1 L628.1 200.6 L626.9 202 L625.6 203.4 L624.4 204.8 L623.2 206.3 L622 207.7 L620.8 209.1 L619.7 210.6 L618.5 212 L617.4 213.4 L616.3 214.8 L615.2 216.3 L614.1 217.7 L613.1 219.1 L612 220.6 L611 222 L610 223.4 L609 224.9 L608 226.3 L607.1 227.7 L606.2 229.2 L605.2 230.6 L604.3 232 L603.4 233.5 L602.6 234.9 L601.7 236.3 L600.9 237.8 L600.1 239.2 L599.3 240.6 L598.5 242.1 L597.7 243.5 L597 245 L596.3 246.4 L595.5 247.8 L594.9 249.3 L594.2 250.7 L593.5 252.1 L592.9 253.6 L592.3 255 L591.7 256.4 L591.1 257.9 L590.5 259.3 L590 260.8 L589.5 262.2 L589 263.6 L588.5 265.1 L588 266.5" fill="none" stroke="#2ab07f" stroke-width="1.39" stroke-dasharray="1.39 2.29"/>
<path d="M1139.2 113 L1140 113.1 L1140.8 113.3 L1141.7 113.4 L1142.5 113.5 L1143.4 113.7 L1144.2 113.8 L1145.1 113.9 L1145.9 114.1 L1146.8 114.2 L1147.7 114.4 L1148.6 114.5 L1149.4 114.7 L1150.3 114.8 L1151.2 115 L1152.2 115.2 L1153.1 115.3 L1154 115.5 L1154.9 115.7 L1155.9 115.8 L1156.8 116 L1157.7 116.2 L1158.7 116.4 L1159.6 116.5 L1160.6 116.7 L1161.6 116.9 L1162.6 117.1 L1163.5 117.3 L1164.5 117.5 L1165.5 117.7 L1166.5 117.9 L1167.5 118.1 L1168.5 118.3 L1169.6 118.5 L1170.6 118.7 L1171.6 118.9 L1172.6 119.1 L1173.7 119.3 L1174.7 119.5 L1175.8 119.7 L1176.8 120 L1177.9 120.2 L1179 120.4 L1180 120.6 L1181.1 120.9 L1182.2 121.1 L1183.3 121.3 L1184.4 121.5 L1185.5 121.8 L1186.6 122" fill="none" stroke="#1e9b8a" stroke-width="1.39" stroke-dasharray="1.39 2.29"/>
<path d="M617.5 122.3 L617.3 122.5 L617.1 122.7 L616.8 123 L616.6 123.2 L616.4 123.5 L616.1 123.7 L615.9 124 L615.7 124.2 L615.4 124.5 L615.2 124.7 L614.9 125 L614.7 125.3 L614.4 125.5 L614.1 125.8 L613.8 126.1 L613.6 126.3 L613.3 126.6 L613 126.9 L612.7 127.1 L612.4 127.4 L612.1 127.7 L611.8 128 L611.5 128.3 L611.2 128.5 L610.9 128.8 L610.6 129.1 L610.3 129.4 L610 129.7 L609.6 130 L609.3 130.3 L609 130.6 L608.7 130.8 L608.3 131.1 L608 131.4 L607.6 131.7 L607.3 132 L607 132.3 L606.6 132.6 L606.2 132.9 L605.9 133.3 L605.5 133.6 L605.2 133.9 L604.8 134.2 L604.4 134.5 L604.1 134.8 L603.7 135.1 L603.3 135.4 L603 135.7 L602.6 136.1 L602.2 136.4 L601.8 136.7 L601.4 137 L601 137.3 L600.7 137.7 L600.3 138 L599.9 138.3 L599.5 138.7 L599.1 139 L598.7 139.3 L598.3 139.6 L597.9 140 L597.5 140.3 L597.1 140.6 L596.7 141 L596.3 141.3 L595.8 141.7 L595.4 142 L595 142.3 L594.6 142.7 L594.2 143 L593.8 143.4 L593.3 143.7 L592.9 144.1 L592.5 144.4 L592.1 144.7 L591.7 145.1 L591.2 145.4 L590.8 145.8 L590.4 146.1 L589.9 146.5 L589.5 146.9 L589.1 147.2 L588.6 147.6 L588.2 147.9 L587.8 148.3 L587.3 148.6 L586.9 149 L586.5 149.4 L586 149.7 L585.6 150.1 L585.2 150.4 L584.7 150.8 L584.3 151.2 L583.8 151.5 L583.4 151.9 L582.9 152.3 L582.5 152.6 L582.1 153 L581.6 153.4 L581.2 153.7 L580.7 154.1 L580.3 154.5 L579.8 154.9 L579.4 155.2 L578.9 155.6 L578.5 156 L578 156.4 L577.6 156.7 L577.1 157.1 L576.7 157.5" fill="none" stroke="#1e9b8a" stroke-width="1.39" stroke-dasharray="1.39 2.29"/>
<path d="M934.2 52.5 L931.7 51.6 L929.4 50.8 L927.1 50.1 L924.9 49.5 L922.9 49 L921 48.6 L919.1 48.3 L917.4 48.2 L915.7 48.2 L914.2 48.3 L912.7 48.5 L911.3 48.9 L909.9 49.3 L908.5 49.9 L907.2 50.6 L905.9 51.4 L904.7 52.2 L903.4 53.1 L902.1 54.1 L900.8 55.2 L899.6 56.3 L898.3 57.4 L897 58.6 L895.7 59.9 L894.4 61.1 L893.1 62.4 L891.8 63.7 L890.5 65.1 L889.2 66.5 L887.9 67.8 L886.5 69.3 L885.2 70.7 L883.9 72.1 L882.5 73.6 L881.2 75 L879.8 76.5 L878.5 78 L877.1 79.4 L875.8 80.9 L874.4 82.4 L873.1 83.9 L871.7 85.5 L870.3 87 L869 88.5 L867.6 90 L866.2 91.6 L864.9 93.1 L863.5 94.7 L862.2 96.2 L860.8 97.8 L859.4 99.3 L858.1 100.9 L856.7 102.4 L855.4 104 L854 105.6 L852.7 107.1 L851.3 108.7 L850 110.3 L848.6 111.8 L847.3 113.4 L845.9 115 L844.6 116.6 L843.3 118.2 L841.9 119.7 L840.6 121.3 L839.3 122.9 L838 124.5 L836.6 126.1 L835.3 127.7 L834 129.3 L832.7 130.9 L831.4 132.5 L830.1 134 L828.8 135.6 L827.6 137.2 L826.3 138.8 L825 140.4 L823.7 142 L822.5 143.6 L821.2 145.2 L820 146.8 L818.7 148.4 L817.5 150 L816.2 151.6 L815 153.2 L813.8 154.8 L812.6 156.4 L811.4 158 L810.2 159.6 L809 161.2 L807.8 162.9 L806.6 164.5 L805.4 166.1 L804.2 167.7 L803.1 169.3 L801.9 170.9 L800.8 172.5 L799.6 174.1 L798.5 175.7 L797.4 177.3 L796.3 178.9 L795.1 180.5 L794 182.1 L793 183.8 L791.9 185.4 L790.8 187 L789.7 188.6 L788.7 190.2 L787.6 191.8 L786.6 193.4 L785.5 195 L784.5 196.6 L783.5 198.3 L782.5 199.9 L781.5 201.5 L780.5 203.1 L779.5 204.7 L778.5 206.3 L777.5 207.9 L776.6 209.6 L775.6 211.2 L774.7 212.8 L773.8 214.4 L772.8 216 L771.9 217.6 L771 219.2 L770.1 220.9 L769.3 222.5 L768.4 224.1 L767.5 225.7 L766.7 227.3 L765.8 228.9 L765 230.5 L764.2 232.2 L763.4 233.8 L762.6 235.4 L761.8 237 L761 238.6 L760.3 240.2 L759.5 241.9 L758.8 243.5 L758 245.1 L757.3 246.7 L756.6 248.3 L755.9 249.9 L755.2 251.6 L754.5 253.2 L753.8 254.8 L753.2 256.4 L752.5 258 L751.9 259.6 L751.3 261.3 L750.7 262.9 L750.1 264.5 L749.5 266.1 L748.9 267.7 L748.3 269.3 L747.8 271 L747.2 272.6 L746.7 274.2" fill="none" stroke="#4ec36b" stroke-width="1.39" stroke-dasharray="1.39 2.29"/>
<path d="M981.7 72.5 L978.1 70.9 L974.6 69.4 L971.1 67.8 L967.6 66.3 L964.1 64.8 L960.7 63.3 L957.4 61.9 L954 60.5 L950.8 59.1 L947.6 57.8 L944.5 56.5 L941.4 55.3 L938.4 54.1 L935.6 53 L932.8 52 L930.2 51.1 L927.7 50.3 L925.3 49.6 L923 49 L920.9 48.6 L918.9 48.3 L917 48.2 L915.2 48.2 L913.5 48.4 L911.9 48.7 L910.4 49.2 L908.9 49.8 L907.4 50.5 L906 51.3 L904.6 52.3 L903.2 53.3 L901.8 54.4 L900.4 55.6 L899 56.8 L897.6 58.1 L896.2 59.4 L894.8 60.8 L893.4 62.2 L891.9 63.7 L890.5 65.2 L889 66.7 L887.6 68.2 L886.1 69.8 L884.6 71.3 L883.2 72.9 L881.7 74.5 L880.2 76.1 L878.7 77.7 L877.2 79.4 L875.7 81 L874.2 82.7 L872.7 84.3 L871.2 86 L869.7 87.7 L868.2 89.3 L866.7 91 L865.2 92.7 L863.7 94.4 L862.3 96.1 L860.8 97.8 L859.3 99.5 L857.8 101.2 L856.3 103 L854.8 104.7 L853.3 106.4 L851.8 108.1 L850.3 109.9 L848.8 111.6 L847.4 113.3 L845.9 115.1 L844.4 116.8 L843 118.5 L841.5 120.3 L840 122 L838.6 123.8 L837.1 125.5 L835.7 127.3 L834.3 129 L832.8 130.8 L831.4 132.5 L830 134.3 L828.6 136 L827.2 137.8 L825.7 139.5 L824.4 141.3 L823 143 L821.6 144.8 L820.2 146.6 L818.8 148.3 L817.5 150.1 L816.1 151.8 L814.8 153.6 L813.4 155.4 L812.1 157.1 L810.7 158.9 L809.4 160.6 L808.1 162.4 L806.8 164.2 L805.5 165.9 L804.2 167.7 L803 169.5 L801.7 171.2 L800.4 173 L799.2 174.8 L797.9 176.6 L796.7 178.3 L795.5 180.1 L794.3 181.9 L793 183.6 L791.9 185.4 L790.7 187.2 L789.5 188.9 L788.3 190.7 L787.2 192.5 L786 194.3 L784.9 196 L783.8 197.8 L782.6 199.6 L781.5 201.4 L780.5 203.1 L779.4 204.9 L778.3 206.7 L777.2 208.4 L776.2 210.2 L775.2 212 L774.1 213.8 L773.1 215.5 L772.1 217.3 L771.1 219.1 L770.1 220.9 L769.2 222.6 L768.2 224.4 L767.3 226.2 L766.3 228 L765.4 229.8 L764.5 231.5 L763.6 233.3 L762.7 235.1 L761.9 236.9 L761 238.6 L760.2 240.4 L759.4 242.2 L758.5 244 L757.7 245.7 L756.9 247.5 L756.2 249.3 L755.4 251.1 L754.6 252.9 L753.9 254.6 L753.2 256.4 L752.5 258.2 L751.8 260 L751.1 261.7 L750.4 263.5 L749.8 265.3 L749.1 267.1 L748.5 268.9 L747.9 270.6 L747.3 272.4 L746.7 274.2" fill="none" stroke="#4ec36b" stroke-width="1.39" stroke-dasharray="1.39 2.29"/>
<path d="M941.7 119.5 L940.5 119.9 L939.3 120.3 L938.1 120.7 L936.9 121.1 L935.7 121.5 L934.5 122 L933.3 122.4 L932.2 122.9 L931 123.4 L929.8 124 L928.7 124.5 L927.5 125.1 L926.3 125.6 L925.2 126.2 L924 126.8 L922.9 127.4 L921.8 128 L920.6 128.7 L919.5 129.3 L918.3 130 L917.2 130.7 L916.1 131.4 L914.9 132.1 L913.8 132.8 L912.7 133.6 L911.5 134.3 L910.4 135.1 L909.3 135.8 L908.2 136.6 L907 137.4 L905.9 138.2 L904.8 139 L903.7 139.8 L902.5 140.7 L901.4 141.5 L900.3 142.4 L899.2 143.2 L898 144.1 L896.9 145 L895.8 145.9 L894.6 146.8 L893.5 147.7 L892.4 148.6 L891.3 149.5 L890.1 150.4 L889 151.4 L887.9 152.3 L886.7 153.3 L885.6 154.2 L884.5 155.2 L883.4 156.2 L882.2 157.1 L881.1 158.1 L880 159.1 L878.8 160.1 L877.7 161.1 L876.6 162.1 L875.4 163.1 L874.3 164.2 L873.2 165.2 L872 166.2 L870.9 167.3 L869.8 168.3 L868.6 169.3 L867.5 170.4 L866.4 171.5 L865.2 172.5 L864.1 173.6 L863 174.7 L861.9 175.7 L860.7 176.8 L859.6 177.9 L858.5 179 L857.3 180.1 L856.2 181.2 L855.1 182.3 L854 183.4 L852.8 184.5 L851.7 185.6 L850.6 186.7 L849.5 187.8 L848.3 188.9 L847.2 190.1 L846.1 191.2 L845 192.3 L843.9 193.5 L842.7 194.6 L841.6 195.7 L840.5 196.9 L839.4 198 L838.3 199.2 L837.2 200.3 L836.1 201.5 L835 202.6 L833.9 203.8 L832.8 205 L831.7 206.1 L830.6 207.3 L829.5 208.4 L828.4 209.6 L827.3 210.8 L826.2 212 L825.2 213.1 L824.1 214.3 L823 215.5 L821.9 216.7 L820.8 217.9 L819.8 219.1 L818.7 220.2 L817.6 221.4 L816.6 222.6 L815.5 223.8 L814.5 225 L813.4 226.2 L812.4 227.4 L811.3 228.6 L810.3 229.8 L809.2 231 L808.2 232.2 L807.2 233.4 L806.1 234.6 L805.1 235.8 L804.1 237 L803.1 238.3 L802.1 239.5 L801.1 240.7 L800.1 241.9 L799.1 243.1 L798.1 244.3 L797.1 245.5 L796.1 246.8 L795.1 248 L794.1 249.2 L793.1 250.4 L792.2 251.7 L791.2 252.9 L790.2 254.1 L789.3 255.3 L788.3 256.6 L787.4 257.8 L786.4 259 L785.5 260.2 L784.6 261.5 L783.6 262.7 L782.7 263.9 L781.8 265.2 L780.9 266.4 L780 267.6 L779.1 268.9 L778.2 270.1 L777.3 271.3 L776.4 272.6 L775.5 273.8 L774.6 275.1 L773.8 276.3 L772.9 277.5 L772 278.8 L771.2 280 L770.3 281.3 L769.5 282.5" fill="none" stroke="#4ec36b" stroke-width="1.39" stroke-dasharray="1.39 2.29"/>
<path d="M764.2 75.5 L768.8 74.5 L773.3 73.5 L777.6 72.6 L781.7 71.8 L785.5 71 L789.2 70.3 L792.6 69.8 L795.9 69.3 L798.8 68.9 L801.6 68.6 L804.1 68.4 L806.4 68.2 L808.5 68.2 L810.3 68.3 L811.9 68.5 L813.3 68.8 L814.5 69.2 L815.5 69.6 L816.3 70.2 L817 70.9 L817.5 71.6 L817.9 72.4 L818.1 73.3 L818.2 74.2 L818.2 75.3 L818 76.3 L817.8 77.5 L817.5 78.7 L817.1 79.9 L816.7 81.2 L816.2 82.5 L815.6 83.9 L815 85.3 L814.3 86.8 L813.6 88.3 L812.9 89.8 L812.1 91.3 L811.3 92.9 L810.4 94.5 L809.6 96.1 L808.7 97.7 L807.8 99.4 L806.9 101 L806 102.7 L805.1 104.4 L804.1 106.1 L803.2 107.9 L802.2 109.6 L801.3 111.4 L800.3 113.1 L799.3 114.9 L798.4 116.7 L797.4 118.5 L796.4 120.3 L795.5 122.1 L794.5 123.9 L793.6 125.7 L792.6 127.6 L791.6 129.4 L790.7 131.3 L789.8 133.1 L788.8 135 L787.9 136.9 L787 138.7 L786 140.6 L785.1 142.5 L784.2 144.4 L783.3 146.3 L782.5 148.2 L781.6 150.1 L780.7 152 L779.9 153.9 L779 155.8 L778.2 157.7 L777.4 159.6 L776.5 161.5 L775.7 163.4 L774.9 165.3 L774.2 167.3 L773.4 169.2 L772.6 171.1 L771.9 173.1 L771.2 175 L770.5 176.9 L769.7 178.9 L769.1 180.8 L768.4 182.7 L767.7 184.7 L767.1 186.6 L766.4 188.6 L765.8 190.5 L765.2 192.5 L764.6 194.4 L764 196.4 L763.4 198.3 L762.9 200.3 L762.4 202.2 L761.8 204.2 L761.3 206.2 L760.8 208.1 L760.3 210.1 L759.9 212 L759.4 214 L759 216 L758.6 217.9 L758.2 219.9 L757.8 221.9 L757.4 223.8 L757.1 225.8 L756.7 227.8 L756.4 229.7 L756.1 231.7 L755.8 233.7 L755.5 235.6 L755.3 237.6 L755 239.6 L754.8 241.6 L754.6 243.5 L754.4 245.5 L754.2 247.5 L754.1 249.5 L753.9 251.4 L753.8 253.4 L753.7 255.4 L753.6 257.4 L753.5 259.3 L753.5 261.3 L753.4 263.3 L753.4 265.3 L753.4 267.2 L753.4 269.2 L753.4 271.2 L753.5 273.2 L753.5 275.2 L753.6 277.1 L753.7 279.1 L753.8 281.1 L753.9 283.1 L754 285.1 L754.2 287.1 L754.4 289 L754.6 291 L754.8 293 L755 295 L755.2 297 L755.5 298.9 L755.8 300.9 L756 302.9 L756.4 304.9 L756.7 306.9 L757 308.9 L757.4 310.8 L757.7 312.8 L758.1 314.8 L758.5 316.8 L759 318.8 L759.4 320.8 L759.8 322.7 L760.3 324.7 L760.8 326.7" fill="none" stroke="#bddf26" stroke-width="1.39" stroke-dasharray="1.39 2.29"/>
<path d="M637.5 115 L643.4 113.5 L649.2 112 L655 110.5 L660.7 109.1 L666.3 107.7 L671.9 106.3 L677.3 105 L682.6 103.7 L687.9 102.4 L693 101.2 L698 100.1 L702.9 99 L707.7 97.9 L712.3 96.9 L716.8 95.9 L721.1 95 L725.3 94.2 L729.4 93.4 L733.2 92.7 L737 92.1 L740.5 91.5 L743.9 91 L747.1 90.6 L750.1 90.3 L753 90 L755.7 89.8 L758.2 89.6 L760.5 89.6 L762.7 89.6 L764.7 89.7 L766.6 89.9 L768.2 90.2 L769.8 90.5 L771.1 90.9 L772.4 91.4 L773.5 91.9 L774.4 92.6 L775.3 93.3 L776 94 L776.6 94.8 L777.1 95.7 L777.5 96.6 L777.8 97.6 L778.1 98.7 L778.2 99.8 L778.3 100.9 L778.3 102.1 L778.2 103.3 L778.1 104.6 L777.9 105.9 L777.7 107.3 L777.4 108.7 L777.1 110.1 L776.7 111.6 L776.4 113.1 L775.9 114.6 L775.5 116.2 L775 117.7 L774.5 119.3 L774 121 L773.4 122.6 L772.9 124.3 L772.3 126 L771.7 127.7 L771.1 129.4 L770.5 131.1 L769.9 132.9 L769.3 134.7 L768.7 136.5 L768 138.3 L767.4 140.1 L766.8 141.9 L766.1 143.8 L765.5 145.6 L764.9 147.5 L764.3 149.4 L763.7 151.3 L763.1 153.2 L762.5 155.1 L761.9 157 L761.3 158.9 L760.7 160.9 L760.1 162.8 L759.6 164.7 L759 166.7 L758.5 168.7 L757.9 170.6 L757.4 172.6 L756.9 174.6 L756.4 176.6 L755.9 178.6 L755.4 180.6 L755 182.6 L754.5 184.6 L754.1 186.6 L753.7 188.6 L753.3 190.6 L752.9 192.6 L752.5 194.7 L752.2 196.7 L751.8 198.7 L751.5 200.8 L751.2 202.8 L750.9 204.8 L750.6 206.9 L750.4 208.9 L750.1 211 L749.9 213.1 L749.7 215.1 L749.5 217.2 L749.3 219.2 L749.1 221.3 L749 223.4 L748.9 225.4 L748.8 227.5 L748.7 229.6 L748.6 231.7 L748.6 233.7 L748.5 235.8 L748.5 237.9 L748.5 240 L748.6 242.1 L748.6 244.2 L748.7 246.2 L748.7 248.3 L748.8 250.4 L749 252.5 L749.1 254.6 L749.3 256.7 L749.4 258.8 L749.6 260.9 L749.8 263 L750.1 265.1 L750.3 267.2 L750.6 269.3 L750.9 271.4 L751.2 273.5 L751.5 275.6 L751.9 277.7 L752.2 279.8 L752.6 281.9 L753 284 L753.5 286.1 L753.9 288.2 L754.4 290.3 L754.8 292.5 L755.3 294.6 L755.9 296.7 L756.4 298.8 L756.9 300.9 L757.5 303 L758.1 305.1 L758.7 307.2 L759.3 309.3 L760 311.4 L760.7 313.6 L761.3 315.7 L762 317.8 L762.8 319.9 L763.5 322" fill="none" stroke="#bddf26" stroke-width="1.39" stroke-dasharray="1.39 2.29"/>
<path d="M941.7 114.5 L940.3 115 L939 115.6 L937.7 116.2 L936.3 116.8 L935 117.4 L933.7 118.1 L932.4 118.7 L931.1 119.4 L929.8 120.2 L928.5 120.9 L927.3 121.7 L926 122.5 L924.7 123.3 L923.4 124.1 L922.2 125 L920.9 125.8 L919.7 126.7 L918.4 127.6 L917.2 128.5 L915.9 129.5 L914.7 130.4 L913.4 131.4 L912.2 132.4 L910.9 133.4 L909.7 134.4 L908.4 135.4 L907.2 136.5 L905.9 137.5 L904.7 138.6 L903.4 139.7 L902.2 140.8 L901 141.9 L899.7 143 L898.5 144.1 L897.2 145.3 L896 146.4 L894.7 147.6 L893.5 148.7 L892.2 149.9 L891 151.1 L889.8 152.3 L888.5 153.5 L887.3 154.7 L886 156 L884.8 157.2 L883.5 158.4 L882.3 159.7 L881 160.9 L879.8 162.2 L878.5 163.5 L877.3 164.8 L876.1 166 L874.8 167.3 L873.6 168.6 L872.3 169.9 L871.1 171.2 L869.8 172.6 L868.6 173.9 L867.3 175.2 L866.1 176.5 L864.9 177.9 L863.6 179.2 L862.4 180.5 L861.1 181.9 L859.9 183.3 L858.7 184.6 L857.4 186 L856.2 187.3 L855 188.7 L853.8 190.1 L852.5 191.5 L851.3 192.8 L850.1 194.2 L848.9 195.6 L847.6 197 L846.4 198.4 L845.2 199.8 L844 201.2 L842.8 202.6 L841.6 204 L840.4 205.5 L839.2 206.9 L838 208.3 L836.8 209.7 L835.6 211.1 L834.4 212.6 L833.2 214 L832 215.4 L830.9 216.8 L829.7 218.3 L828.5 219.7 L827.4 221.2 L826.2 222.6 L825 224.1 L823.9 225.5 L822.7 226.9 L821.6 228.4 L820.4 229.9 L819.3 231.3 L818.2 232.8 L817 234.2 L815.9 235.7 L814.8 237.1 L813.7 238.6 L812.6 240.1 L811.5 241.5 L810.4 243 L809.3 244.5 L808.2 245.9 L807.1 247.4 L806.1 248.9 L805 250.4 L803.9 251.8 L802.9 253.3 L801.8 254.8 L800.8 256.3 L799.7 257.7 L798.7 259.2 L797.7 260.7 L796.7 262.2 L795.6 263.7 L794.6 265.2 L793.6 266.6 L792.6 268.1 L791.7 269.6 L790.7 271.1 L789.7 272.6 L788.7 274.1 L787.8 275.6 L786.8 277.1 L785.9 278.6 L785 280 L784 281.5 L783.1 283 L782.2 284.5 L781.3 286 L780.4 287.5 L779.5 289 L778.6 290.5 L777.7 292 L776.9 293.5 L776 295 L775.2 296.5 L774.3 298 L773.5 299.5 L772.7 301 L771.8 302.5 L771 304 L770.2 305.5 L769.4 307 L768.7 308.5 L767.9 310 L767.1 311.5 L766.4 313 L765.6 314.5 L764.9 316 L764.1 317.5 L763.4 319 L762.7 320.5 L762 322" fill="none" stroke="#bddf26" stroke-width="1.39" stroke-dasharray="1.39 2.29"/>
<path d="M873.3 42.8 L892.8 31.7" fill="none" stroke="#2ab07f" stroke-width="1.5"/>
<path d="M805 68.3 L815.8 60" fill="none" stroke="#2ab07f" stroke-width="1.5"/>
<circle cx="815.8" cy="60" r="1.3" fill="#ff6e3a"/>
<path d="M925.8 70 L945.8 83.8" fill="none" stroke="#2ab07f" stroke-width="1.5"/>
<circle cx="945.8" cy="83.8" r="1.3" fill="#ff6e3a"/>
<path d="M960 86.7 L977.8 97.8" fill="none" stroke="#2ab07f" stroke-width="1.5"/>
<circle cx="977.8" cy="97.8" r="1.3" fill="#ff6e3a"/>
<path d="M966.7 135 L986.7 150.8" fill="none" stroke="#2ab07f" stroke-width="1.5"/>
<circle cx="986.7" cy="150.8" r="1.3" fill="#ff6e3a"/>
<path d="M1073.3 122.5 L1084.2 132" fill="none" stroke="#2ab07f" stroke-width="1.5"/>
<circle cx="1084.2" cy="132" r="1.3" fill="#ff6e3a"/>
<path d="M1002.5 59.5 L1002.5 59.5" fill="none" stroke="#2ab07f" stroke-width="1.5"/>
<path d="M1139.2 113 L1121.7 110.8" fill="none" stroke="#1e9b8a" stroke-width="1.5"/>
<circle cx="1121.7" cy="110.8" r="1.3" fill="#ff6e3a"/>
<path d="M934.2 52.5 L961.7 63.8" fill="none" stroke="#4ec36b" stroke-width="1.5"/>
<circle cx="961.7" cy="63.8" r="1.3" fill="#ff6e3a"/>
<path d="M981.7 72.5 L1020.8 90" fill="none" stroke="#4ec36b" stroke-width="1.5"/>
<circle cx="1020.8" cy="90" r="1.3" fill="#ff6e3a"/>
<path d="M941.7 119.5 L951.7 117" fill="none" stroke="#4ec36b" stroke-width="1.5"/>
<circle cx="951.7" cy="117" r="1.3" fill="#ff6e3a"/>
<path d="M764.2 75.5 L738.3 81.2" fill="none" stroke="#bddf26" stroke-width="1.5"/>
<circle cx="738.3" cy="81.2" r="1.3" fill="#ff6e3a"/>
<path d="M637.5 115 L629.2 117.2" fill="none" stroke="#bddf26" stroke-width="1.5"/>
<path d="M941.7 114.5 L950 112" fill="none" stroke="#bddf26" stroke-width="1.5"/>
<circle cx="950" cy="112" r="1.3" fill="#ff6e3a"/>
<path d="M970 148 C968.5 149.9 966.3 152.9 961 159.6 C955.7 166.3 948.2 173.5 938 188 C927.8 202.5 909.7 229.7 900 246.7 C890.3 263.7 888.8 273.3 880 290 C871.2 306.7 858.2 327.5 847 347 C835.8 366.5 822 389.8 813 407 C804 424.2 796.3 442.8 793 450" fill="none" stroke="#3c3c3c" stroke-width="1.39" stroke-dasharray="1.39 2.29"/>
<path d="M910.5 61.5 C909.1 64.2 906.4 70.9 902 78 C897.6 85.1 889 92.8 884 104 C879 115.2 875.5 129.2 872 145 C868.5 160.8 865 186 863 199 C861 212 862.7 209.5 860 223 C857.3 236.5 851.2 262.2 847 280 C842.8 297.8 837.7 316.7 835 330 C832.3 343.3 831.3 348.3 831 360 C830.7 371.7 831.8 383.8 833 400 C834.2 416.2 837.2 447.5 838 457" fill="none" stroke="#3c3c3c" stroke-width="1.39" stroke-dasharray="1.39 2.29"/>
<path d="M874 95.6 C871.7 102.1 864.2 121.7 860 134.7 C855.8 147.7 853.7 160.4 849 173.8 C844.3 187.2 836.3 197.3 832 215 C827.7 232.7 825 260.8 823 280 C821 299.2 820 313.3 820 330 C820 346.7 820.8 361.7 823 380 C825.2 398.3 830.5 427.2 833 440 C835.5 452.8 837.2 454.2 838 457" fill="none" stroke="#3c3c3c" stroke-width="1.39" stroke-dasharray="1.39 2.29"/>
<path d="M700 165 C697.8 167.5 692.5 174.7 687 180 C681.5 185.3 674.3 188.7 667 197 C659.7 205.3 647.5 216.2 643 230 C638.5 243.8 640 263.3 640 280 C640 296.7 640.2 313.3 643 330 C645.8 346.7 651.3 363.3 657 380 C662.7 396.7 672.7 420 677 430 C681.3 440 682 438.3 683 440" fill="none" stroke="#3c3c3c" stroke-width="1.39" stroke-dasharray="1.39 2.29"/>
<path d="M640 250 C636.7 255.8 623.3 270 620 285 C616.7 300 618.3 324.2 620 340 C621.7 355.8 624.5 363.3 630 380 C635.5 396.7 649.2 430 653 440" fill="none" stroke="#3c3c3c" stroke-width="1.39" stroke-dasharray="1.39 2.29"/>
<path d="M910.5 61.5 C911.1 60.2 912.4 56.2 914 54 C915.6 51.8 917.5 49.5 920 48.3 C922.5 47 927.5 46.8 929 46.5" fill="none" stroke="#7a7a7a" stroke-width="1.3"/>
<path d="M970 54.5 L1007 68" fill="none" stroke="#7a7a7a" stroke-width="1.3"/>
<path d="M968 94.5 L985 113" fill="none" stroke="#7a7a7a" stroke-width="1.3"/>
<path d="M1022 90 L1029 93.5" fill="none" stroke="#7a7a7a" stroke-width="1.3"/>
<path d="M1074.2 106.7 L1079.2 110.5" fill="none" stroke="#7a7a7a" stroke-width="1.3"/>
<path d="M969.8 148 L975 143.6" fill="none" stroke="#7a7a7a" stroke-width="1.3"/>
<path d="M1003 59.5 C1002 59.6 998.4 59.5 997 60 C995.6 60.5 994.6 61.5 994.5 62.5 C994.4 63.5 995.4 64.8 996.5 66 C997.6 67.2 1000.2 69.3 1001 70" fill="none" stroke="#2ab07f" stroke-width="1.5"/>
<circle cx="1001" cy="70" r="1.3" fill="#ff6e3a"/>
<path d="M892.8 31.7 L892.9 31.6 L893 31.6 L893.1 31.5 L893.2 31.4 L893.3 31.4 L893.4 31.3 L893.5 31.2 L893.6 31.2 L893.7 31.1 L893.7 31 L893.8 31 L893.9 30.9 L894 30.9 L894.1 30.8 L894.1 30.7 L894.2 30.7 L894.3 30.6 L894.3 30.6 L894.4 30.5 L894.4 30.5 L894.5 30.4 L894.5 30.4 L894.6 30.4 L894.6 30.3 L894.6 30.3 L894.6 30.2 L894.7 30.2 L894.7 30.2 L894.7 30.1 L894.7 30.1 L894.6 30.1 L894.6 30.1 L894.6 30 L894.6 30 L894.5 30 L894.5 30 L894.4 30 L894.3 30" fill="none" stroke="#2ab07f" stroke-width="1.5"/>
<path d="M910.1 30 L910 30" fill="none" stroke="#2ab07f" stroke-width="1.5"/>
<circle cx="910" cy="30" r="1.3" fill="#ff6e3a"/>
<path d="M1180.5 119.4 L1190.5 122.6" fill="none" stroke="#1e9b8a" stroke-width="1.39" stroke-dasharray="1.39 2.29"/>
<path d="M1175.5 118 L1180 119.2" fill="none" stroke="#bddf26" stroke-width="1.5"/>
<circle cx="1180.3" cy="119.3" r="1.3" fill="#ff6e3a"/>
<path d="M615.1 268.5 L614.5 269.7 L613.8 271 L613.1 272.3 L612.3 273.5 L611.5 274.8 L610.6 276 L609.7 277.2 L608.7 278.3 L607.7 279.5 L606.7 280.6 L605.7 281.7 L604.6 282.7 L603.4 283.7 L602.3 284.7 L601.1 285.6 L599.9 286.4 L598.7 287.2 L597.4 288 L596.1 288.7 L594.8 289.4 L593.6 290 L592.2 290.5 L590.9 291 L589.6 291.4 L588.3 291.7 L587 292 L585.6 292.3 L584.3 292.4 L583 292.5 L581.7 292.6 L580.5 292.5 L579.2 292.4 L578 292.3 L576.8 292 L575.6 291.7 L574.5 291.4 L573.4 291 L572.3 290.5 L571.3 290 L570.3 289.4 L569.4 288.7 L568.6 288 L567.8 287.2 L567.1 286.4 L566.4 285.6 L565.8 284.7 L565.3 283.7 L564.9 282.7 L564.5 281.7 L564.2 280.6 L564 279.5 L563.9 278.3 L563.8 277.2 L563.9 276 L564 274.8 L564.3 273.5 L564.6 272.3 L565 271 L565.4 269.7 L566 268.5 L566.7 267.2 L567.4 265.9 L568.2 264.6 L569.1 263.4 L570.1 262.1 L571.1 260.9 L572.2 259.6 L573.4 258.4 L574.6 257.3 L575.9 256.1 L577.2 255 L578.6 253.9 L580 252.9 L581.5 251.9 L583 250.9 L584.5 250 L586 249.1 L587.6 248.3 L589.1 247.6 L590.7 246.9 L592.2 246.2 L593.8 245.7 L595.3 245.1 L596.8 244.7 L598.3 244.3 L599.8 244 L601.2 243.8 L602.6 243.6 L604 243.5 L605.3 243.4 L606.5 243.5 L607.7 243.6 L608.9 243.8 L610 244 L611 244.3 L612 244.7 L612.9 245.1 L613.7 245.7 L614.5 246.2 L615.2 246.9 L615.8 247.6 L616.4 248.3 L616.9 249.1 L617.3 250 L617.7 250.9 L617.9 251.9 L618.2 252.9 L618.3 253.9 L618.4 255 L618.4 256.1 L618.4 257.3 L618.2 258.4 L618.1 259.6 L617.8 260.9 L617.5 262.1 L617.2 263.4 L616.7 264.6 L616.3 265.9 L615.7 267.2 L615.1 268.5Z" fill="none" stroke="#2ab07f" stroke-width="2.1"/>
<path d="M783.2 276.2 L782.9 277.5 L782.6 278.7 L782.2 280 L781.8 281.3 L781.3 282.5 L780.7 283.7 L780.1 284.9 L779.4 286.1 L778.7 287.2 L777.9 288.3 L777.1 289.4 L776.3 290.5 L775.3 291.5 L774.4 292.4 L773.4 293.3 L772.4 294.2 L771.3 295 L770.2 295.8 L769.1 296.5 L767.9 297.1 L766.7 297.7 L765.5 298.3 L764.3 298.8 L763 299.2 L761.8 299.5 L760.5 299.8 L759.2 300.1 L757.9 300.2 L756.6 300.3 L755.4 300.4 L754.1 300.3 L752.8 300.2 L751.6 300.1 L750.3 299.8 L749.1 299.5 L747.9 299.2 L746.7 298.8 L745.6 298.3 L744.5 297.7 L743.4 297.1 L742.4 296.5 L741.4 295.8 L740.4 295 L739.6 294.2 L738.7 293.3 L737.9 292.4 L737.2 291.5 L736.6 290.5 L736 289.4 L735.4 288.3 L735 287.2 L734.6 286.1 L734.2 284.9 L734 283.7 L733.8 282.5 L733.7 281.3 L733.7 280 L733.7 278.7 L733.9 277.5 L734.1 276.2 L734.3 274.9 L734.7 273.6 L735.1 272.4 L735.6 271.1 L736.2 269.8 L736.8 268.6 L737.5 267.4 L738.3 266.2 L739.1 265 L740 263.8 L740.9 262.7 L741.9 261.7 L742.9 260.6 L744 259.6 L745.2 258.7 L746.3 257.8 L747.5 256.9 L748.8 256.1 L750 255.3 L751.3 254.7 L752.6 254 L753.9 253.4 L755.3 252.9 L756.6 252.5 L757.9 252.1 L759.3 251.8 L760.6 251.6 L761.9 251.4 L763.2 251.3 L764.5 251.2 L765.8 251.3 L767 251.4 L768.3 251.6 L769.5 251.8 L770.6 252.1 L771.7 252.5 L772.8 252.9 L773.9 253.4 L774.9 254 L775.8 254.7 L776.7 255.3 L777.6 256.1 L778.4 256.9 L779.1 257.8 L779.8 258.7 L780.5 259.6 L781.1 260.6 L781.6 261.7 L782.1 262.7 L782.5 263.8 L782.8 265 L783.1 266.2 L783.3 267.4 L783.5 268.6 L783.6 269.8 L783.6 271.1 L783.6 272.4 L783.5 273.6 L783.4 274.9 L783.2 276.2Z" fill="none" stroke="#4ec36b" stroke-width="2.1"/>
<path d="M785.1 325.9 L785.1 327.2 L785 328.5 L784.9 329.8 L784.7 331 L784.4 332.3 L784.1 333.5 L783.8 334.7 L783.4 335.9 L782.9 337.1 L782.3 338.2 L781.8 339.3 L781.1 340.4 L780.4 341.4 L779.7 342.4 L778.9 343.3 L778 344.2 L777.1 345 L776.2 345.8 L775.2 346.6 L774.2 347.2 L773.1 347.9 L772 348.4 L770.9 348.9 L769.7 349.3 L768.5 349.7 L767.3 350 L766.1 350.3 L764.9 350.4 L763.6 350.5 L762.3 350.6 L761 350.5 L759.7 350.4 L758.4 350.3 L757.2 350 L755.9 349.7 L754.6 349.3 L753.3 348.9 L752.1 348.4 L750.9 347.9 L749.7 347.2 L748.5 346.6 L747.4 345.8 L746.3 345 L745.2 344.2 L744.2 343.3 L743.2 342.4 L742.3 341.4 L741.4 340.4 L740.6 339.3 L739.8 338.2 L739.1 337.1 L738.5 335.9 L737.9 334.7 L737.4 333.5 L737 332.3 L736.7 331 L736.4 329.8 L736.2 328.5 L736 327.2 L735.9 325.9 L735.9 324.7 L736 323.4 L736.2 322.1 L736.4 320.9 L736.7 319.6 L737.1 318.4 L737.5 317.2 L738 316 L738.6 314.8 L739.3 313.7 L740 312.6 L740.7 311.6 L741.6 310.5 L742.4 309.6 L743.4 308.6 L744.3 307.8 L745.4 306.9 L746.4 306.1 L747.5 305.4 L748.7 304.7 L749.8 304.1 L751 303.6 L752.3 303.1 L753.5 302.6 L754.7 302.3 L756 302 L757.3 301.7 L758.6 301.6 L759.9 301.5 L761.1 301.4 L762.4 301.5 L763.7 301.6 L765 301.7 L766.2 302 L767.4 302.3 L768.6 302.6 L769.8 303.1 L771 303.6 L772.1 304.1 L773.2 304.7 L774.2 305.4 L775.2 306.1 L776.2 306.9 L777.2 307.8 L778 308.6 L778.9 309.6 L779.7 310.5 L780.4 311.6 L781.1 312.6 L781.8 313.7 L782.4 314.8 L782.9 316 L783.4 317.2 L783.8 318.4 L784.1 319.6 L784.4 320.9 L784.7 322.1 L784.9 323.4 L785 324.7 L785.1 325.9Z" fill="none" stroke="#bddf26" stroke-width="2.1"/>
<path d="M593.1 159.4 L590.5 160.7 L587.8 161.9 L585.1 163.2 L582.3 164.4 L579.6 165.6 L576.9 166.7 L574.1 167.9 L571.4 169 L568.7 170 L566 171.1 L563.4 172.1 L560.7 173.1 L558.1 174 L555.6 174.9 L553.1 175.7 L550.6 176.5 L548.2 177.2 L545.9 177.9 L543.6 178.6 L541.3 179.2 L539.2 179.7 L537.1 180.2 L535.1 180.6 L533.2 181 L531.4 181.3 L529.7 181.6 L528 181.8 L526.5 181.9 L525 182 L523.7 182.1 L522.5 182 L521.3 181.9 L520.3 181.8 L519.5 181.6 L518.7 181.3 L518.1 181 L517.6 180.6 L517.2 180.2 L516.9 179.7 L516.8 179.2 L516.9 178.6 L517 177.9 L517.3 177.2 L517.8 176.5 L518.3 175.7 L519.1 174.9 L519.9 174 L521 173.1 L522.1 172.1 L523.4 171.1 L524.9 170 L526.4 169 L528.2 167.9 L530 166.7 L532 165.6 L534.1 164.4 L536.4 163.2 L538.7 161.9 L541.2 160.7 L543.8 159.4 L546.5 158.1 L549.3 156.9 L552.2 155.6 L555.2 154.3 L558.2 153 L561.3 151.8 L564.5 150.5 L567.7 149.2 L571 148 L574.2 146.8 L577.5 145.6 L580.8 144.5 L584.1 143.4 L587.4 142.3 L590.6 141.2 L593.8 140.3 L596.9 139.3 L600 138.4 L603 137.6 L605.8 136.8 L608.6 136.1 L611.2 135.5 L613.8 134.9 L616.1 134.4 L618.4 133.9 L620.4 133.6 L622.4 133.3 L624.1 133.1 L625.7 133 L627 132.9 L628.2 133 L629.2 133.1 L630 133.3 L630.6 133.6 L631.1 133.9 L631.3 134.4 L631.3 134.9 L631.2 135.5 L630.9 136.1 L630.4 136.8 L629.7 137.6 L628.9 138.4 L627.9 139.3 L626.7 140.3 L625.4 141.2 L624 142.3 L622.4 143.4 L620.7 144.5 L618.8 145.6 L616.9 146.8 L614.9 148 L612.7 149.2 L610.5 150.5 L608.2 151.8 L605.9 153 L603.4 154.3 L600.9 155.6 L598.4 156.9 L595.8 158.1 L593.1 159.4Z" fill="none" stroke="#1e9b8a" stroke-width="2.1"/>
<path d="M580 266.7 h6 M583 263.7 v6" stroke="#ff0000" stroke-width="1.4" fill="none"/>
<path d="M588.3 270.3 h6 M591.3 267.3 v6" stroke="#ff0000" stroke-width="1.4" fill="none"/>
<path d="M600.3 268.4 h6 M603.3 265.4 v6" stroke="#ff0000" stroke-width="1.4" fill="none"/>
<path d="M743.7 274.2 h6 M746.7 271.2 v6" stroke="#ff0000" stroke-width="1.4" fill="none"/>
<path d="M766.5 282.5 h6 M769.5 279.5 v6" stroke="#ff0000" stroke-width="1.4" fill="none"/>
<path d="M757.8 326.7 h6 M760.8 323.7 v6" stroke="#ff0000" stroke-width="1.4" fill="none"/>
<path d="M764.5 324 h6 M767.5 321 v6" stroke="#ff0000" stroke-width="1.4" fill="none"/>
<path d="M573.7 157.5 h6 M576.7 154.5 v6" stroke="#ff0000" stroke-width="1.4" fill="none"/>
<path d="M609.3 271.2 h6.4" stroke="#ff0000" stroke-width="1.4" fill="none"/>
<path d="M612.5 268.2 v6" stroke="#a00000" stroke-width="1.2" fill="none"/>
<text x="581.36" y="271.2" font-family="'Liberation Sans', sans-serif" font-size="10.30" fill="#ffffff" textLength="17.3" lengthAdjust="spacingAndGlyphs">ORI</text>
<text x="749.70" y="279" font-family="'Liberation Sans', sans-serif" font-size="10.30" fill="#ffffff" textLength="18.0" lengthAdjust="spacingAndGlyphs">STA</text>
<text x="749.73" y="329" font-family="'Liberation Sans', sans-serif" font-size="10.30" fill="#ffffff" textLength="20.5" lengthAdjust="spacingAndGlyphs">OER</text>
<text x="559.78" y="161.2" font-family="'Liberation Sans', sans-serif" font-size="10.30" fill="#ffffff" textLength="20.4" lengthAdjust="spacingAndGlyphs">LUM</text>
<text x="316.2" y="30" font-family="'Liberation Mono', monospace" font-size="15.37" fill="#f0f0f0" text-anchor="start" textLength="50.2" lengthAdjust="spacingAndGlyphs">CA000U</text>
<text x="316.2" y="43.3" font-family="'Liberation Mono', monospace" font-size="15.37" fill="#f0f0f0" text-anchor="start" textLength="317.8" lengthAdjust="spacingAndGlyphs">Beg: 20251027 03:53:46 (sol = 213.63°)</text>
<text x="316.2" y="56.7" font-family="'Liberation Mono', monospace" font-size="15.37" fill="#f0f0f0" text-anchor="start" textLength="317.8" lengthAdjust="spacingAndGlyphs">End: 20251027 05:36:18 (sol = 213.70°)</text>
<text x="316.2" y="69.2" font-family="'Liberation Mono', monospace" font-size="15.37" fill="#f0f0f0" text-anchor="start" textLength="317.8" lengthAdjust="spacingAndGlyphs">--------------------------------------</text>
<text x="316.2" y="82.3" font-family="'Liberation Mono', monospace" font-size="15.37" fill="#f0f0f0" text-anchor="start" textLength="50.2" lengthAdjust="spacingAndGlyphs">ORI: 7</text>
<text x="316.2" y="95.3" font-family="'Liberation Mono', monospace" font-size="15.37" fill="#f0f0f0" text-anchor="start" textLength="50.2" lengthAdjust="spacingAndGlyphs">...: 6</text>
<text x="316.2" y="108.5" font-family="'Liberation Mono', monospace" font-size="15.37" fill="#f0f0f0" text-anchor="start" textLength="50.2" lengthAdjust="spacingAndGlyphs">OER: 3</text>
<text x="316.2" y="121.7" font-family="'Liberation Mono', monospace" font-size="15.37" fill="#f0f0f0" text-anchor="start" textLength="50.2" lengthAdjust="spacingAndGlyphs">STA: 3</text>
<text x="316.2" y="135" font-family="'Liberation Mono', monospace" font-size="15.37" fill="#f0f0f0" text-anchor="start" textLength="50.2" lengthAdjust="spacingAndGlyphs">LUM: 1</text>
<g stroke="#545454" stroke-width="2.0" stroke-dasharray="2.08 3.44" fill="none">
<path d="M75 842.3 V641.6"/>
<path d="M219 842.3 V641.6"/>
<path d="M365 842.3 V641.6"/>
<path d="M506 842.3 V641.6"/>
<path d="M651 842.3 V641.6"/>
<path d="M797 842.3 V641.6"/>
<path d="M940 842.3 V641.6"/>
<path d="M1090.8 842.3 V641.6"/>
<path d="M1239 842.3 V641.6"/>
<path d="M1394 842.3 V641.6"/>
<path d="M1548 842.3 V641.6"/>
<path d="M1687 842.3 V641.6"/>
</g>
<text transform="translate(149.1 696.8) rotate(-90) scale(0.8330 1)" x="-0.00" y="0" font-family="'Liberation Sans', sans-serif" font-size="30.89" fill="#565656">APR</text>
<text transform="translate(295.2 699.6) rotate(-90) scale(0.8415 1)" x="-0.00" y="0" font-family="'Liberation Sans', sans-serif" font-size="30.89" fill="#565656">MAY</text>
<text transform="translate(436.4 690) rotate(-90) scale(0.7694 1)" x="-0.00" y="0" font-family="'Liberation Sans', sans-serif" font-size="30.89" fill="#565656">JUN</text>
<text transform="translate(577.4 686) rotate(-90) scale(0.7921 1)" x="-0.00" y="0" font-family="'Liberation Sans', sans-serif" font-size="30.89" fill="#565656">JUL</text>
<text transform="translate(724.2 699.3) rotate(-90) scale(0.8202 1)" x="-0.00" y="0" font-family="'Liberation Sans', sans-serif" font-size="30.89" fill="#565656">AUG</text>
<text transform="translate(872.5 693) rotate(-90) scale(0.7864 1)" x="-0.00" y="0" font-family="'Liberation Sans', sans-serif" font-size="30.89" fill="#565656">SEP</text>
<text transform="translate(1017.4 698.7) rotate(-90) scale(0.8328 1)" x="-0.00" y="0" font-family="'Liberation Sans', sans-serif" font-size="30.89" fill="#565656">OCT</text>
<text transform="translate(1170.4 702.2) rotate(-90) scale(0.8427 1)" x="-0.00" y="0" font-family="'Liberation Sans', sans-serif" font-size="30.89" fill="#565656">NOV</text>
<text transform="translate(1319.6 697.8) rotate(-90) scale(0.8067 1)" x="-0.00" y="0" font-family="'Liberation Sans', sans-serif" font-size="30.89" fill="#565656">DEC</text>
<text transform="translate(1469.6 688.2) rotate(-90) scale(0.7696 1)" x="-0.00" y="0" font-family="'Liberation Sans', sans-serif" font-size="30.89" fill="#565656">JAN</text>
<text transform="translate(1628.6 694.6) rotate(-90) scale(0.7840 1)" x="-0.00" y="0" font-family="'Liberation Sans', sans-serif" font-size="30.89" fill="#565656">FEB</text>
<text transform="translate(1766.2 703) rotate(-90) scale(0.8305 1)" x="-0.00" y="0" font-family="'Liberation Sans', sans-serif" font-size="30.89" fill="#565656">MAR</text>
<rect x="106" y="831.9" width="24" height="4.2" fill="#bddf26"/>
<rect x="165" y="831.9" width="180" height="4.2" fill="#bddf26"/>
<rect x="366" y="831.9" width="259" height="4.2" fill="#bddf26"/>
<rect x="636" y="831.9" width="151" height="4.2" fill="#bddf26"/>
<rect x="807" y="831.9" width="93" height="4.2" fill="#bddf26"/>
<rect x="920" y="831.9" width="53" height="4.2" fill="#bddf26"/>
<rect x="984" y="831.9" width="82" height="4.2" fill="#bddf26"/>
<rect x="1082" y="831.9" width="122" height="4.2" fill="#bddf26"/>
<rect x="1244" y="831.9" width="82" height="4.2" fill="#bddf26"/>
<rect x="1337" y="831.9" width="19" height="4.2" fill="#bddf26"/>
<rect x="1381" y="831.9" width="63" height="4.2" fill="#bddf26"/>
<rect x="1459" y="831.9" width="53" height="4.2" fill="#bddf26"/>
<rect x="1523" y="831.9" width="24" height="4.2" fill="#bddf26"/>
<rect x="1724" y="831.9" width="24" height="4.2" fill="#bddf26"/>
<rect x="1758" y="831.9" width="24" height="4.2" fill="#bddf26"/>
<rect x="165" y="815.6" width="24" height="4.2" fill="#81d34d"/>
<rect x="224" y="815.6" width="63" height="4.2" fill="#81d34d"/>
<rect x="312" y="815.6" width="29" height="4.2" fill="#81d34d"/>
<rect x="366" y="815.6" width="127" height="4.2" fill="#81d34d"/>
<rect x="508" y="815.6" width="146" height="4.2" fill="#81d34d"/>
<rect x="704" y="815.6" width="34" height="4.2" fill="#81d34d"/>
<rect x="773" y="815.6" width="73" height="4.2" fill="#81d34d"/>
<rect x="871" y="815.6" width="117" height="4.2" fill="#81d34d"/>
<rect x="1003" y="815.6" width="14" height="4.2" fill="#81d34d"/>
<rect x="1062" y="815.6" width="151" height="4.2" fill="#81d34d"/>
<rect x="1244" y="815.6" width="23" height="4.2" fill="#81d34d"/>
<rect x="1293" y="815.6" width="23" height="4.2" fill="#81d34d"/>
<rect x="1342" y="815.6" width="23" height="4.2" fill="#81d34d"/>
<rect x="1386" y="815.6" width="43" height="4.2" fill="#81d34d"/>
<rect x="1459" y="815.6" width="24" height="4.2" fill="#81d34d"/>
<rect x="1548" y="815.6" width="23" height="4.2" fill="#81d34d"/>
<rect x="165" y="799.2" width="24" height="4.2" fill="#4ec36b"/>
<rect x="258" y="799.2" width="230" height="4.2" fill="#4ec36b"/>
<rect x="508" y="799.2" width="107" height="4.2" fill="#4ec36b"/>
<rect x="626" y="799.2" width="92" height="4.2" fill="#4ec36b"/>
<rect x="729" y="799.2" width="97" height="4.2" fill="#4ec36b"/>
<rect x="949" y="799.2" width="201" height="4.2" fill="#4ec36b"/>
<rect x="1160" y="799.2" width="88" height="4.2" fill="#4ec36b"/>
<rect x="1258" y="799.2" width="186" height="4.2" fill="#4ec36b"/>
<rect x="1459" y="799.2" width="24" height="4.2" fill="#4ec36b"/>
<rect x="1553" y="799.2" width="23" height="4.2" fill="#4ec36b"/>
<rect x="194" y="782.9" width="24" height="4.2" fill="#2ab07f"/>
<rect x="322" y="782.9" width="185" height="4.2" fill="#2ab07f"/>
<rect x="518" y="782.9" width="24" height="4.2" fill="#2ab07f"/>
<rect x="557" y="782.9" width="127" height="4.2" fill="#2ab07f"/>
<rect x="807" y="782.9" width="24" height="4.2" fill="#2ab07f"/>
<rect x="954" y="782.9" width="19" height="4.2" fill="#2ab07f"/>
<rect x="989" y="782.9" width="136" height="4.2" fill="#2ab07f"/>
<rect x="1155" y="782.9" width="63" height="4.2" fill="#2ab07f"/>
<rect x="1244" y="782.9" width="23" height="4.2" fill="#2ab07f"/>
<rect x="1317" y="782.9" width="24" height="4.2" fill="#2ab07f"/>
<rect x="1396" y="782.9" width="23" height="4.2" fill="#2ab07f"/>
<rect x="1464" y="782.9" width="186" height="4.2" fill="#2ab07f"/>
<rect x="341" y="766.6" width="29" height="4.2" fill="#1e9b8a"/>
<rect x="410" y="766.6" width="38" height="4.2" fill="#1e9b8a"/>
<rect x="469" y="766.6" width="24" height="4.2" fill="#1e9b8a"/>
<rect x="528" y="766.6" width="18" height="4.2" fill="#1e9b8a"/>
<rect x="562" y="766.6" width="29" height="4.2" fill="#1e9b8a"/>
<rect x="616" y="766.6" width="33" height="4.2" fill="#1e9b8a"/>
<rect x="959" y="766.6" width="29" height="4.2" fill="#1e9b8a"/>
<rect x="1062" y="766.6" width="24" height="4.2" fill="#1e9b8a"/>
<rect x="1101" y="766.6" width="24" height="4.2" fill="#1e9b8a"/>
<rect x="1160" y="766.6" width="34" height="4.2" fill="#1e9b8a"/>
<rect x="1249" y="766.6" width="23" height="4.2" fill="#1e9b8a"/>
<rect x="1425" y="766.6" width="87" height="4.2" fill="#1e9b8a"/>
<rect x="420" y="750.2" width="24" height="4.2" fill="#25858e"/>
<rect x="533" y="750.2" width="23" height="4.2" fill="#25858e"/>
<rect x="567" y="750.2" width="24" height="4.2" fill="#25858e"/>
<rect x="621" y="750.2" width="122" height="4.2" fill="#25858e"/>
<rect x="969" y="750.2" width="166" height="4.2" fill="#25858e"/>
<rect x="1185" y="750.2" width="161" height="4.2" fill="#25858e"/>
<rect x="1469" y="750.2" width="24" height="4.2" fill="#25858e"/>
<rect x="430" y="733.9" width="23" height="4.2" fill="#2d708e"/>
<rect x="577" y="733.9" width="156" height="4.2" fill="#2d708e"/>
<rect x="994" y="733.9" width="111" height="4.2" fill="#2d708e"/>
<rect x="1116" y="733.9" width="107" height="4.2" fill="#2d708e"/>
<rect x="1263" y="733.9" width="29" height="4.2" fill="#2d708e"/>
<rect x="1489" y="733.9" width="23" height="4.2" fill="#2d708e"/>
<rect x="592" y="717.6" width="23" height="4.2" fill="#375a8c"/>
<rect x="655" y="717.6" width="117" height="4.2" fill="#375a8c"/>
<rect x="1072" y="717.6" width="171" height="4.2" fill="#375a8c"/>
<rect x="1263" y="717.6" width="24" height="4.2" fill="#375a8c"/>
<rect x="596" y="701.2" width="137" height="4.2" fill="#424086"/>
<rect x="1092" y="701.2" width="28" height="4.2" fill="#424086"/>
<rect x="1200" y="701.2" width="23" height="4.2" fill="#424086"/>
<rect x="1273" y="701.2" width="53" height="4.2" fill="#424086"/>
<rect x="1111" y="684.9" width="24" height="4.2" fill="#482475"/>
<path d="M1068.2 842.3 V641.6" stroke="#ff0000" stroke-width="2.6" stroke-dasharray="4.4 2.45" fill="none"/>
<text x="107.96" y="831.3" font-family="'Liberation Sans', sans-serif" font-size="10.30" fill="#ffffff" textLength="18.7" lengthAdjust="spacingAndGlyphs">KSE</text>
<text x="246.01" y="831.3" font-family="'Liberation Sans', sans-serif" font-size="10.30" fill="#ffffff" textLength="18.0" lengthAdjust="spacingAndGlyphs">ETA</text>
<text x="485.14" y="831.3" font-family="'Liberation Sans', sans-serif" font-size="10.30" fill="#ffffff" textLength="20.7" lengthAdjust="spacingAndGlyphs">NZC</text>
<text x="700.08" y="831.3" font-family="'Liberation Sans', sans-serif" font-size="10.30" fill="#ffffff" textLength="21.2" lengthAdjust="spacingAndGlyphs">NDA</text>
<text x="844.41" y="831.3" font-family="'Liberation Sans', sans-serif" font-size="10.30" fill="#ffffff" textLength="18.2" lengthAdjust="spacingAndGlyphs">SPE</text>
<text x="936.06" y="831.3" font-family="'Liberation Sans', sans-serif" font-size="10.30" fill="#ffffff" textLength="20.9" lengthAdjust="spacingAndGlyphs">ARD</text>
<text x="1015.09" y="831.3" font-family="'Liberation Sans', sans-serif" font-size="10.30" fill="#ffffff" textLength="19.8" lengthAdjust="spacingAndGlyphs">EGE</text>
<text x="1133.45" y="831.3" font-family="'Liberation Sans', sans-serif" font-size="10.30" fill="#ffffff" textLength="19.1" lengthAdjust="spacingAndGlyphs">NTA</text>
<text x="1273.35" y="831.3" font-family="'Liberation Sans', sans-serif" font-size="10.30" fill="#ffffff" textLength="23.3" lengthAdjust="spacingAndGlyphs">MON</text>
<text x="1333.48" y="831.3" font-family="'Liberation Sans', sans-serif" font-size="10.30" fill="#ffffff" textLength="20.0" lengthAdjust="spacingAndGlyphs">URS</text>
<text x="1402.54" y="831.3" font-family="'Liberation Sans', sans-serif" font-size="10.30" fill="#ffffff" textLength="19.9" lengthAdjust="spacingAndGlyphs">AHY</text>
<text x="1473.98" y="831.3" font-family="'Liberation Sans', sans-serif" font-size="10.30" fill="#ffffff" textLength="23.0" lengthAdjust="spacingAndGlyphs">GUM</text>
<text x="1524.54" y="831.3" font-family="'Liberation Sans', sans-serif" font-size="10.30" fill="#ffffff" textLength="20.9" lengthAdjust="spacingAndGlyphs">OHY</text>
<text x="1725.94" y="831.3" font-family="'Liberation Sans', sans-serif" font-size="10.30" fill="#ffffff" textLength="20.1" lengthAdjust="spacingAndGlyphs">XHE</text>
<text x="1762.17" y="831.3" font-family="'Liberation Sans', sans-serif" font-size="10.30" fill="#ffffff" textLength="15.7" lengthAdjust="spacingAndGlyphs">EVI</text>
<text x="167.33" y="815" font-family="'Liberation Sans', sans-serif" font-size="10.30" fill="#ffffff" textLength="19.3" lengthAdjust="spacingAndGlyphs">AVB</text>
<text x="247.39" y="815" font-family="'Liberation Sans', sans-serif" font-size="10.30" fill="#ffffff" textLength="16.2" lengthAdjust="spacingAndGlyphs">ELY</text>
<text x="312.99" y="815" font-family="'Liberation Sans', sans-serif" font-size="10.30" fill="#ffffff" textLength="21.8" lengthAdjust="spacingAndGlyphs">CAM</text>
<text x="421.97" y="815" font-family="'Liberation Sans', sans-serif" font-size="10.30" fill="#ffffff" textLength="19.9" lengthAdjust="spacingAndGlyphs">SSG</text>
<text x="569.15" y="815" font-family="'Liberation Sans', sans-serif" font-size="10.30" fill="#ffffff" textLength="19.3" lengthAdjust="spacingAndGlyphs">PCA</text>
<text x="710.38" y="815" font-family="'Liberation Sans', sans-serif" font-size="10.30" fill="#ffffff" textLength="21.3" lengthAdjust="spacingAndGlyphs">AUD</text>
<text x="799.24" y="815" font-family="'Liberation Sans', sans-serif" font-size="10.30" fill="#ffffff" textLength="20.5" lengthAdjust="spacingAndGlyphs">AUR</text>
<text x="920.64" y="815" font-family="'Liberation Sans', sans-serif" font-size="10.30" fill="#ffffff" textLength="20.3" lengthAdjust="spacingAndGlyphs">DSX</text>
<text x="1000.03" y="815" font-family="'Liberation Sans', sans-serif" font-size="10.30" fill="#ffffff" textLength="21.6" lengthAdjust="spacingAndGlyphs">OCU</text>
<text x="1127.93" y="815" font-family="'Liberation Sans', sans-serif" font-size="10.30" fill="#ffffff" textLength="20.5" lengthAdjust="spacingAndGlyphs">OER</text>
<text x="1244.83" y="815" font-family="'Liberation Sans', sans-serif" font-size="10.30" fill="#ffffff" textLength="21.3" lengthAdjust="spacingAndGlyphs">DKD</text>
<text x="1294.35" y="815" font-family="'Liberation Sans', sans-serif" font-size="10.30" fill="#ffffff" textLength="20.3" lengthAdjust="spacingAndGlyphs">DSV</text>
<text x="1345.14" y="815" font-family="'Liberation Sans', sans-serif" font-size="10.30" fill="#ffffff" textLength="16.7" lengthAdjust="spacingAndGlyphs">ALY</text>
<text x="1400.04" y="815" font-family="'Liberation Sans', sans-serif" font-size="10.30" fill="#ffffff" textLength="14.9" lengthAdjust="spacingAndGlyphs">JLE</text>
<text x="1461.93" y="815" font-family="'Liberation Sans', sans-serif" font-size="10.30" fill="#ffffff" textLength="19.7" lengthAdjust="spacingAndGlyphs">SCC</text>
<text x="1550.31" y="815" font-family="'Liberation Sans', sans-serif" font-size="10.30" fill="#ffffff" textLength="18.4" lengthAdjust="spacingAndGlyphs">FEV</text>
<text x="167.69" y="798.6" font-family="'Liberation Sans', sans-serif" font-size="10.30" fill="#ffffff" textLength="16.8" lengthAdjust="spacingAndGlyphs">LYR</text>
<text x="363.73" y="798.6" font-family="'Liberation Sans', sans-serif" font-size="10.30" fill="#ffffff" textLength="18.5" lengthAdjust="spacingAndGlyphs">JMC</text>
<text x="551.51" y="798.6" font-family="'Liberation Sans', sans-serif" font-size="10.30" fill="#ffffff" textLength="15.4" lengthAdjust="spacingAndGlyphs">JPE</text>
<text x="661.80" y="798.6" font-family="'Liberation Sans', sans-serif" font-size="10.30" fill="#ffffff" textLength="19.0" lengthAdjust="spacingAndGlyphs">PAU</text>
<text x="765.91" y="798.6" font-family="'Liberation Sans', sans-serif" font-size="10.30" fill="#ffffff" textLength="16.8" lengthAdjust="spacingAndGlyphs">NIA</text>
<text x="1040.50" y="798.6" font-family="'Liberation Sans', sans-serif" font-size="10.30" fill="#ffffff" textLength="18.0" lengthAdjust="spacingAndGlyphs">STA</text>
<text x="1195.22" y="798.6" font-family="'Liberation Sans', sans-serif" font-size="10.30" fill="#ffffff" textLength="22.6" lengthAdjust="spacingAndGlyphs">NOO</text>
<text x="1341.99" y="798.6" font-family="'Liberation Sans', sans-serif" font-size="10.30" fill="#ffffff" textLength="22.8" lengthAdjust="spacingAndGlyphs">COM</text>
<text x="1460.58" y="798.6" font-family="'Liberation Sans', sans-serif" font-size="10.30" fill="#ffffff" textLength="20.8" lengthAdjust="spacingAndGlyphs">NCC</text>
<text x="1554.89" y="798.6" font-family="'Liberation Sans', sans-serif" font-size="10.30" fill="#ffffff" textLength="19.2" lengthAdjust="spacingAndGlyphs">FED</text>
<text x="197.59" y="782.3" font-family="'Liberation Sans', sans-serif" font-size="10.30" fill="#ffffff" textLength="16.8" lengthAdjust="spacingAndGlyphs">HVI</text>
<text x="403.96" y="782.3" font-family="'Liberation Sans', sans-serif" font-size="10.30" fill="#ffffff" textLength="16.3" lengthAdjust="spacingAndGlyphs">ARI</text>
<text x="520.19" y="782.3" font-family="'Liberation Sans', sans-serif" font-size="10.30" fill="#ffffff" textLength="19.6" lengthAdjust="spacingAndGlyphs">SZC</text>
<text x="609.15" y="782.3" font-family="'Liberation Sans', sans-serif" font-size="10.30" fill="#ffffff" textLength="19.3" lengthAdjust="spacingAndGlyphs">CAP</text>
<text x="808.74" y="782.3" font-family="'Liberation Sans', sans-serif" font-size="10.30" fill="#ffffff" textLength="20.5" lengthAdjust="spacingAndGlyphs">NUE</text>
<text x="950.90" y="782.3" font-family="'Liberation Sans', sans-serif" font-size="10.30" fill="#ffffff" textLength="20.4" lengthAdjust="spacingAndGlyphs">OCT</text>
<text x="1050.66" y="782.3" font-family="'Liberation Sans', sans-serif" font-size="10.30" fill="#ffffff" textLength="17.3" lengthAdjust="spacingAndGlyphs">ORI</text>
<text x="1175.16" y="782.3" font-family="'Liberation Sans', sans-serif" font-size="10.30" fill="#ffffff" textLength="22.7" lengthAdjust="spacingAndGlyphs">AMO</text>
<text x="1245.43" y="782.3" font-family="'Liberation Sans', sans-serif" font-size="10.30" fill="#ffffff" textLength="20.1" lengthAdjust="spacingAndGlyphs">DPC</text>
<text x="1320.91" y="782.3" font-family="'Liberation Sans', sans-serif" font-size="10.30" fill="#ffffff" textLength="16.2" lengthAdjust="spacingAndGlyphs">XVI</text>
<text x="1396.79" y="782.3" font-family="'Liberation Sans', sans-serif" font-size="10.30" fill="#ffffff" textLength="21.4" lengthAdjust="spacingAndGlyphs">QUA</text>
<text x="1549.08" y="782.3" font-family="'Liberation Sans', sans-serif" font-size="10.30" fill="#ffffff" textLength="20.8" lengthAdjust="spacingAndGlyphs">AAN</text>
<text x="343.52" y="766" font-family="'Liberation Sans', sans-serif" font-size="10.30" fill="#ffffff" textLength="19.2" lengthAdjust="spacingAndGlyphs">TAH</text>
<text x="423.22" y="766" font-family="'Liberation Sans', sans-serif" font-size="10.30" fill="#ffffff" textLength="16.2" lengthAdjust="spacingAndGlyphs">JEA</text>
<text x="474.95" y="766" font-family="'Liberation Sans', sans-serif" font-size="10.30" fill="#ffffff" textLength="12.1" lengthAdjust="spacingAndGlyphs">JIP</text>
<text x="529.75" y="766" font-family="'Liberation Sans', sans-serif" font-size="10.30" fill="#ffffff" textLength="17.9" lengthAdjust="spacingAndGlyphs">PPS</text>
<text x="568.89" y="766" font-family="'Liberation Sans', sans-serif" font-size="10.30" fill="#ffffff" textLength="19.6" lengthAdjust="spacingAndGlyphs">ZCS</text>
<text x="621.61" y="766" font-family="'Liberation Sans', sans-serif" font-size="10.30" fill="#ffffff" textLength="21.8" lengthAdjust="spacingAndGlyphs">GDR</text>
<text x="961.06" y="766" font-family="'Liberation Sans', sans-serif" font-size="10.30" fill="#ffffff" textLength="20.5" lengthAdjust="spacingAndGlyphs">DRA</text>
<text x="1063.78" y="766" font-family="'Liberation Sans', sans-serif" font-size="10.30" fill="#ffffff" textLength="20.4" lengthAdjust="spacingAndGlyphs">LUM</text>
<text x="1103.13" y="766" font-family="'Liberation Sans', sans-serif" font-size="10.30" fill="#ffffff" textLength="19.7" lengthAdjust="spacingAndGlyphs">RPU</text>
<text x="1167.04" y="766" font-family="'Liberation Sans', sans-serif" font-size="10.30" fill="#ffffff" textLength="19.9" lengthAdjust="spacingAndGlyphs">THA</text>
<text x="1249.93" y="766" font-family="'Liberation Sans', sans-serif" font-size="10.30" fill="#ffffff" textLength="19.2" lengthAdjust="spacingAndGlyphs">PSU</text>
<text x="1460.89" y="766" font-family="'Liberation Sans', sans-serif" font-size="10.30" fill="#ffffff" textLength="19.4" lengthAdjust="spacingAndGlyphs">XCB</text>
<text x="423.79" y="749.6" font-family="'Liberation Sans', sans-serif" font-size="10.30" fill="#ffffff" textLength="16.4" lengthAdjust="spacingAndGlyphs">JRC</text>
<text x="534.15" y="749.6" font-family="'Liberation Sans', sans-serif" font-size="10.30" fill="#ffffff" textLength="20.7" lengthAdjust="spacingAndGlyphs">CAN</text>
<text x="568.69" y="749.6" font-family="'Liberation Sans', sans-serif" font-size="10.30" fill="#ffffff" textLength="18.6" lengthAdjust="spacingAndGlyphs">FAN</text>
<text x="671.92" y="749.6" font-family="'Liberation Sans', sans-serif" font-size="10.30" fill="#ffffff" textLength="18.8" lengthAdjust="spacingAndGlyphs">PER</text>
<text x="1040.79" y="749.6" font-family="'Liberation Sans', sans-serif" font-size="10.30" fill="#ffffff" textLength="18.6" lengthAdjust="spacingAndGlyphs">CTA</text>
<text x="1255.13" y="749.6" font-family="'Liberation Sans', sans-serif" font-size="10.30" fill="#ffffff" textLength="20.7" lengthAdjust="spacingAndGlyphs">HYD</text>
<text x="1469.92" y="749.6" font-family="'Liberation Sans', sans-serif" font-size="10.30" fill="#ffffff" textLength="22.2" lengthAdjust="spacingAndGlyphs">XUM</text>
<text x="430.91" y="733.3" font-family="'Liberation Sans', sans-serif" font-size="10.30" fill="#ffffff" textLength="21.2" lengthAdjust="spacingAndGlyphs">COR</text>
<text x="648.03" y="733.3" font-family="'Liberation Sans', sans-serif" font-size="10.30" fill="#ffffff" textLength="20.1" lengthAdjust="spacingAndGlyphs">SDA</text>
<text x="1041.17" y="733.3" font-family="'Liberation Sans', sans-serif" font-size="10.30" fill="#ffffff" textLength="16.7" lengthAdjust="spacingAndGlyphs">LMI</text>
<text x="1157.00" y="733.3" font-family="'Liberation Sans', sans-serif" font-size="10.30" fill="#ffffff" textLength="19.2" lengthAdjust="spacingAndGlyphs">LEO</text>
<text x="1265.09" y="733.3" font-family="'Liberation Sans', sans-serif" font-size="10.30" fill="#ffffff" textLength="19.4" lengthAdjust="spacingAndGlyphs">EHY</text>
<text x="1490.71" y="733.3" font-family="'Liberation Sans', sans-serif" font-size="10.30" fill="#ffffff" textLength="19.6" lengthAdjust="spacingAndGlyphs">ECV</text>
<text x="595.16" y="717" font-family="'Liberation Sans', sans-serif" font-size="10.30" fill="#ffffff" textLength="16.7" lengthAdjust="spacingAndGlyphs">JXA</text>
<text x="705.72" y="717" font-family="'Liberation Sans', sans-serif" font-size="10.30" fill="#ffffff" textLength="20.2" lengthAdjust="spacingAndGlyphs">KCG</text>
<text x="1146.80" y="717" font-family="'Liberation Sans', sans-serif" font-size="10.30" fill="#ffffff" textLength="21.4" lengthAdjust="spacingAndGlyphs">AND</text>
<text x="1264.27" y="717" font-family="'Liberation Sans', sans-serif" font-size="10.30" fill="#ffffff" textLength="21.5" lengthAdjust="spacingAndGlyphs">DAD</text>
<text x="658.42" y="700.6" font-family="'Liberation Sans', sans-serif" font-size="10.30" fill="#ffffff" textLength="15.8" lengthAdjust="spacingAndGlyphs">ERI</text>
<text x="1098.96" y="700.6" font-family="'Liberation Sans', sans-serif" font-size="10.30" fill="#ffffff" textLength="19.1" lengthAdjust="spacingAndGlyphs">SLD</text>
<text x="1201.21" y="700.6" font-family="'Liberation Sans', sans-serif" font-size="10.30" fill="#ffffff" textLength="20.6" lengthAdjust="spacingAndGlyphs">ORS</text>
<text x="1288.47" y="700.6" font-family="'Liberation Sans', sans-serif" font-size="10.30" fill="#ffffff" textLength="22.1" lengthAdjust="spacingAndGlyphs">GEM</text>
<text x="1112.19" y="684.3" font-family="'Liberation Sans', sans-serif" font-size="10.30" fill="#ffffff" textLength="21.6" lengthAdjust="spacingAndGlyphs">KUM</text>
<path d="M114.1 834 h7.8 M118 830.1 v7.8" stroke="#ffffff" stroke-width="2.0" fill="none"/>
<path d="M241.1 834 h7.8 M245 830.1 v7.8" stroke="#ffffff" stroke-width="2.0" fill="none"/>
<path d="M511.1 834 h7.8 M515 830.1 v7.8" stroke="#ffffff" stroke-width="2.0" fill="none"/>
<path d="M707.1 834 h7.8 M711 830.1 v7.8" stroke="#ffffff" stroke-width="2.0" fill="none"/>
<path d="M834.1 834 h7.8 M838 830.1 v7.8" stroke="#ffffff" stroke-width="2.0" fill="none"/>
<path d="M962.1 834 h7.8 M966 830.1 v7.8" stroke="#ffffff" stroke-width="2.0" fill="none"/>
<path d="M987.1 834 h7.8 M991 830.1 v7.8" stroke="#ffffff" stroke-width="2.0" fill="none"/>
<path d="M1117.1 834 h7.8 M1121 830.1 v7.8" stroke="#ffffff" stroke-width="2.0" fill="none"/>
<path d="M1296.1 834 h7.8 M1300 830.1 v7.8" stroke="#ffffff" stroke-width="2.0" fill="none"/>
<path d="M1342.1 834 h7.8 M1346 830.1 v7.8" stroke="#ffffff" stroke-width="2.0" fill="none"/>
<path d="M1413.1 834 h7.8 M1417 830.1 v7.8" stroke="#ffffff" stroke-width="2.0" fill="none"/>
<path d="M1482.1 834 h7.8 M1486 830.1 v7.8" stroke="#ffffff" stroke-width="2.0" fill="none"/>
<path d="M1531.1 834 h7.8 M1535 830.1 v7.8" stroke="#ffffff" stroke-width="2.0" fill="none"/>
<path d="M1732.1 834 h7.8 M1736 830.1 v7.8" stroke="#ffffff" stroke-width="2.0" fill="none"/>
<path d="M1766.1 834 h7.8 M1770 830.1 v7.8" stroke="#ffffff" stroke-width="2.0" fill="none"/>
<path d="M173.1 817.7 h7.8 M177 813.8 v7.8" stroke="#ffffff" stroke-width="2.0" fill="none"/>
<path d="M256.4 817.7 h7.8 M260.2 813.8 v7.8" stroke="#ffffff" stroke-width="2.0" fill="none"/>
<path d="M324.1 817.7 h7.8 M328 813.8 v7.8" stroke="#ffffff" stroke-width="2.0" fill="none"/>
<path d="M438.1 817.7 h7.8 M442 813.8 v7.8" stroke="#ffffff" stroke-width="2.0" fill="none"/>
<path d="M599.1 817.7 h7.8 M603 813.8 v7.8" stroke="#ffffff" stroke-width="2.0" fill="none"/>
<path d="M717.1 817.7 h7.8 M721 813.8 v7.8" stroke="#ffffff" stroke-width="2.0" fill="none"/>
<path d="M794.1 817.7 h7.8 M798 813.8 v7.8" stroke="#ffffff" stroke-width="2.0" fill="none"/>
<path d="M940.1 817.7 h7.8 M944 813.8 v7.8" stroke="#ffffff" stroke-width="2.0" fill="none"/>
<path d="M1006.1 817.7 h7.8 M1010 813.8 v7.8" stroke="#ffffff" stroke-width="2.0" fill="none"/>
<path d="M1153.1 817.7 h7.8 M1157 813.8 v7.8" stroke="#ffffff" stroke-width="2.0" fill="none"/>
<path d="M1251.1 817.7 h7.8 M1255 813.8 v7.8" stroke="#ffffff" stroke-width="2.0" fill="none"/>
<path d="M1300.1 817.7 h7.8 M1304 813.8 v7.8" stroke="#ffffff" stroke-width="2.0" fill="none"/>
<path d="M1350.1 817.7 h7.8 M1354 813.8 v7.8" stroke="#ffffff" stroke-width="2.0" fill="none"/>
<path d="M1403.1 817.7 h7.8 M1407 813.8 v7.8" stroke="#ffffff" stroke-width="2.0" fill="none"/>
<path d="M1467.1 817.7 h7.8 M1471 813.8 v7.8" stroke="#ffffff" stroke-width="2.0" fill="none"/>
<path d="M1555.1 817.7 h7.8 M1559 813.8 v7.8" stroke="#ffffff" stroke-width="2.0" fill="none"/>
<path d="M175.1 801.3 h7.8 M179 797.4 v7.8" stroke="#ffffff" stroke-width="2.0" fill="none"/>
<path d="M379.1 801.3 h7.8 M383 797.4 v7.8" stroke="#ffffff" stroke-width="2.0" fill="none"/>
<path d="M545.4 801.3 h7.8 M549.2 797.4 v7.8" stroke="#ffffff" stroke-width="2.0" fill="none"/>
<path d="M683.1 801.3 h7.8 M687 797.4 v7.8" stroke="#ffffff" stroke-width="2.0" fill="none"/>
<path d="M742.1 801.3 h7.8 M746 797.4 v7.8" stroke="#ffffff" stroke-width="2.0" fill="none"/>
<path d="M1075.1 801.3 h7.8 M1079 797.4 v7.8" stroke="#ffffff" stroke-width="2.0" fill="none"/>
<path d="M1217.1 801.3 h7.8 M1221 797.4 v7.8" stroke="#ffffff" stroke-width="2.0" fill="none"/>
<path d="M1305.1 801.3 h7.8 M1309 797.4 v7.8" stroke="#ffffff" stroke-width="2.0" fill="none"/>
<path d="M1467.1 801.3 h7.8 M1471 797.4 v7.8" stroke="#ffffff" stroke-width="2.0" fill="none"/>
<path d="M1560.1 801.3 h7.8 M1564 797.4 v7.8" stroke="#ffffff" stroke-width="2.0" fill="none"/>
<path d="M202.1 785 h7.8 M206 781.1 v7.8" stroke="#ffffff" stroke-width="2.0" fill="none"/>
<path d="M401.1 785 h7.8 M405 781.1 v7.8" stroke="#ffffff" stroke-width="2.0" fill="none"/>
<path d="M526.1 785 h7.8 M530 781.1 v7.8" stroke="#ffffff" stroke-width="2.0" fill="none"/>
<path d="M639.1 785 h7.8 M643 781.1 v7.8" stroke="#ffffff" stroke-width="2.0" fill="none"/>
<path d="M815.1 785 h7.8 M819 781.1 v7.8" stroke="#ffffff" stroke-width="2.0" fill="none"/>
<path d="M960.1 785 h7.8 M964 781.1 v7.8" stroke="#ffffff" stroke-width="2.0" fill="none"/>
<path d="M1041.1 785 h7.8 M1045 781.1 v7.8" stroke="#ffffff" stroke-width="2.0" fill="none"/>
<path d="M1188.1 785 h7.8 M1192 781.1 v7.8" stroke="#ffffff" stroke-width="2.0" fill="none"/>
<path d="M1251.1 785 h7.8 M1255 781.1 v7.8" stroke="#ffffff" stroke-width="2.0" fill="none"/>
<path d="M1325.1 785 h7.8 M1329 781.1 v7.8" stroke="#ffffff" stroke-width="2.0" fill="none"/>
<path d="M1403.1 785 h7.8 M1407 781.1 v7.8" stroke="#ffffff" stroke-width="2.0" fill="none"/>
<path d="M1546.1 785 h7.8 M1550 781.1 v7.8" stroke="#ffffff" stroke-width="2.0" fill="none"/>
<path d="M356.1 768.7 h7.8 M360 764.8 v7.8" stroke="#ffffff" stroke-width="2.0" fill="none"/>
<path d="M427.1 768.7 h7.8 M431 764.8 v7.8" stroke="#ffffff" stroke-width="2.0" fill="none"/>
<path d="M477.1 768.7 h7.8 M481 764.8 v7.8" stroke="#ffffff" stroke-width="2.0" fill="none"/>
<path d="M536.1 768.7 h7.8 M540 764.8 v7.8" stroke="#ffffff" stroke-width="2.0" fill="none"/>
<path d="M571.1 768.7 h7.8 M575 764.8 v7.8" stroke="#ffffff" stroke-width="2.0" fill="none"/>
<path d="M631.1 768.7 h7.8 M635 764.8 v7.8" stroke="#ffffff" stroke-width="2.0" fill="none"/>
<path d="M974.1 768.7 h7.8 M978 764.8 v7.8" stroke="#ffffff" stroke-width="2.0" fill="none"/>
<path d="M1070.1 768.7 h7.8 M1074 764.8 v7.8" stroke="#ffffff" stroke-width="2.0" fill="none"/>
<path d="M1109.1 768.7 h7.8 M1113 764.8 v7.8" stroke="#ffffff" stroke-width="2.0" fill="none"/>
<path d="M1178.1 768.7 h7.8 M1182 764.8 v7.8" stroke="#ffffff" stroke-width="2.0" fill="none"/>
<path d="M1256.1 768.7 h7.8 M1260 764.8 v7.8" stroke="#ffffff" stroke-width="2.0" fill="none"/>
<path d="M1467.1 768.7 h7.8 M1471 764.8 v7.8" stroke="#ffffff" stroke-width="2.0" fill="none"/>
<path d="M428.1 752.3 h7.8 M432 748.4 v7.8" stroke="#ffffff" stroke-width="2.0" fill="none"/>
<path d="M540.1 752.3 h7.8 M544 748.4 v7.8" stroke="#ffffff" stroke-width="2.0" fill="none"/>
<path d="M575.1 752.3 h7.8 M579 748.4 v7.8" stroke="#ffffff" stroke-width="2.0" fill="none"/>
<path d="M704.1 752.3 h7.8 M708 748.4 v7.8" stroke="#ffffff" stroke-width="2.0" fill="none"/>
<path d="M1095.1 752.3 h7.8 M1099 748.4 v7.8" stroke="#ffffff" stroke-width="2.0" fill="none"/>
<path d="M1271.1 752.3 h7.8 M1275 748.4 v7.8" stroke="#ffffff" stroke-width="2.0" fill="none"/>
<path d="M1477.1 752.3 h7.8 M1481 748.4 v7.8" stroke="#ffffff" stroke-width="2.0" fill="none"/>
<path d="M438.1 736 h7.8 M442 732.1 v7.8" stroke="#ffffff" stroke-width="2.0" fill="none"/>
<path d="M631.1 736 h7.8 M635 732.1 v7.8" stroke="#ffffff" stroke-width="2.0" fill="none"/>
<path d="M1039.1 736 h7.8 M1043 732.1 v7.8" stroke="#ffffff" stroke-width="2.0" fill="none"/>
<path d="M1168.1 736 h7.8 M1172 732.1 v7.8" stroke="#ffffff" stroke-width="2.0" fill="none"/>
<path d="M1275.1 736 h7.8 M1279 732.1 v7.8" stroke="#ffffff" stroke-width="2.0" fill="none"/>
<path d="M1497.1 736 h7.8 M1501 732.1 v7.8" stroke="#ffffff" stroke-width="2.0" fill="none"/>
<path d="M599.1 719.7 h7.8 M603 715.8 v7.8" stroke="#ffffff" stroke-width="2.0" fill="none"/>
<path d="M727.1 719.7 h7.8 M731 715.8 v7.8" stroke="#ffffff" stroke-width="2.0" fill="none"/>
<path d="M1188.1 719.7 h7.8 M1192 715.8 v7.8" stroke="#ffffff" stroke-width="2.0" fill="none"/>
<path d="M1271.1 719.7 h7.8 M1275 715.8 v7.8" stroke="#ffffff" stroke-width="2.0" fill="none"/>
<path d="M688.1 703.3 h7.8 M692 699.4 v7.8" stroke="#ffffff" stroke-width="2.0" fill="none"/>
<path d="M1102.1 703.3 h7.8 M1106 699.4 v7.8" stroke="#ffffff" stroke-width="2.0" fill="none"/>
<path d="M1207.1 703.3 h7.8 M1211 699.4 v7.8" stroke="#ffffff" stroke-width="2.0" fill="none"/>
<path d="M1300.1 703.3 h7.8 M1304 699.4 v7.8" stroke="#ffffff" stroke-width="2.0" fill="none"/>
<path d="M1119.1 687 h7.8 M1123 683.1 v7.8" stroke="#ffffff" stroke-width="2.0" fill="none"/>
<rect x="20.5" y="641.6" width="1765" height="200.7" fill="none" stroke="#ffffff" stroke-width="1.1"/>
<path d="M20.5 842.3 v5" stroke="#ffffff" stroke-width="1.1" fill="none"/>
<text x="16.08" y="861.8" font-family="'Liberation Sans', sans-serif" font-size="14.72" fill="#ffffff" textLength="8.8" lengthAdjust="spacingAndGlyphs">0</text>
<path d="M265.6 842.3 v5" stroke="#ffffff" stroke-width="1.1" fill="none"/>
<text x="256.81" y="861.8" font-family="'Liberation Sans', sans-serif" font-size="14.72" fill="#ffffff" textLength="17.7" lengthAdjust="spacingAndGlyphs">50</text>
<path d="M510.8 842.3 v5" stroke="#ffffff" stroke-width="1.1" fill="none"/>
<text x="497.52" y="861.8" font-family="'Liberation Sans', sans-serif" font-size="14.72" fill="#ffffff" textLength="26.5" lengthAdjust="spacingAndGlyphs">100</text>
<path d="M755.9 842.3 v5" stroke="#ffffff" stroke-width="1.1" fill="none"/>
<text x="742.66" y="861.8" font-family="'Liberation Sans', sans-serif" font-size="14.72" fill="#ffffff" textLength="26.5" lengthAdjust="spacingAndGlyphs">150</text>
<path d="M1001.1 842.3 v5" stroke="#ffffff" stroke-width="1.1" fill="none"/>
<text x="987.80" y="861.8" font-family="'Liberation Sans', sans-serif" font-size="14.72" fill="#ffffff" textLength="26.5" lengthAdjust="spacingAndGlyphs">200</text>
<path d="M1246.2 842.3 v5" stroke="#ffffff" stroke-width="1.1" fill="none"/>
<text x="1232.94" y="861.8" font-family="'Liberation Sans', sans-serif" font-size="14.72" fill="#ffffff" textLength="26.5" lengthAdjust="spacingAndGlyphs">250</text>
<path d="M1491.3 842.3 v5" stroke="#ffffff" stroke-width="1.1" fill="none"/>
<text x="1478.08" y="861.8" font-family="'Liberation Sans', sans-serif" font-size="14.72" fill="#ffffff" textLength="26.5" lengthAdjust="spacingAndGlyphs">300</text>
<path d="M1736.5 842.3 v5" stroke="#ffffff" stroke-width="1.1" fill="none"/>
<text x="1723.22" y="861.8" font-family="'Liberation Sans', sans-serif" font-size="14.72" fill="#ffffff" textLength="26.5" lengthAdjust="spacingAndGlyphs">350</text>
<text x="902.2" y="881.8" font-family="'Liberation Sans', sans-serif" font-size="14.72" fill="#ffffff" text-anchor="middle" textLength="146.7" lengthAdjust="spacingAndGlyphs">Solar longitude (deg)</text>
</g>
</svg>
</body></html>
